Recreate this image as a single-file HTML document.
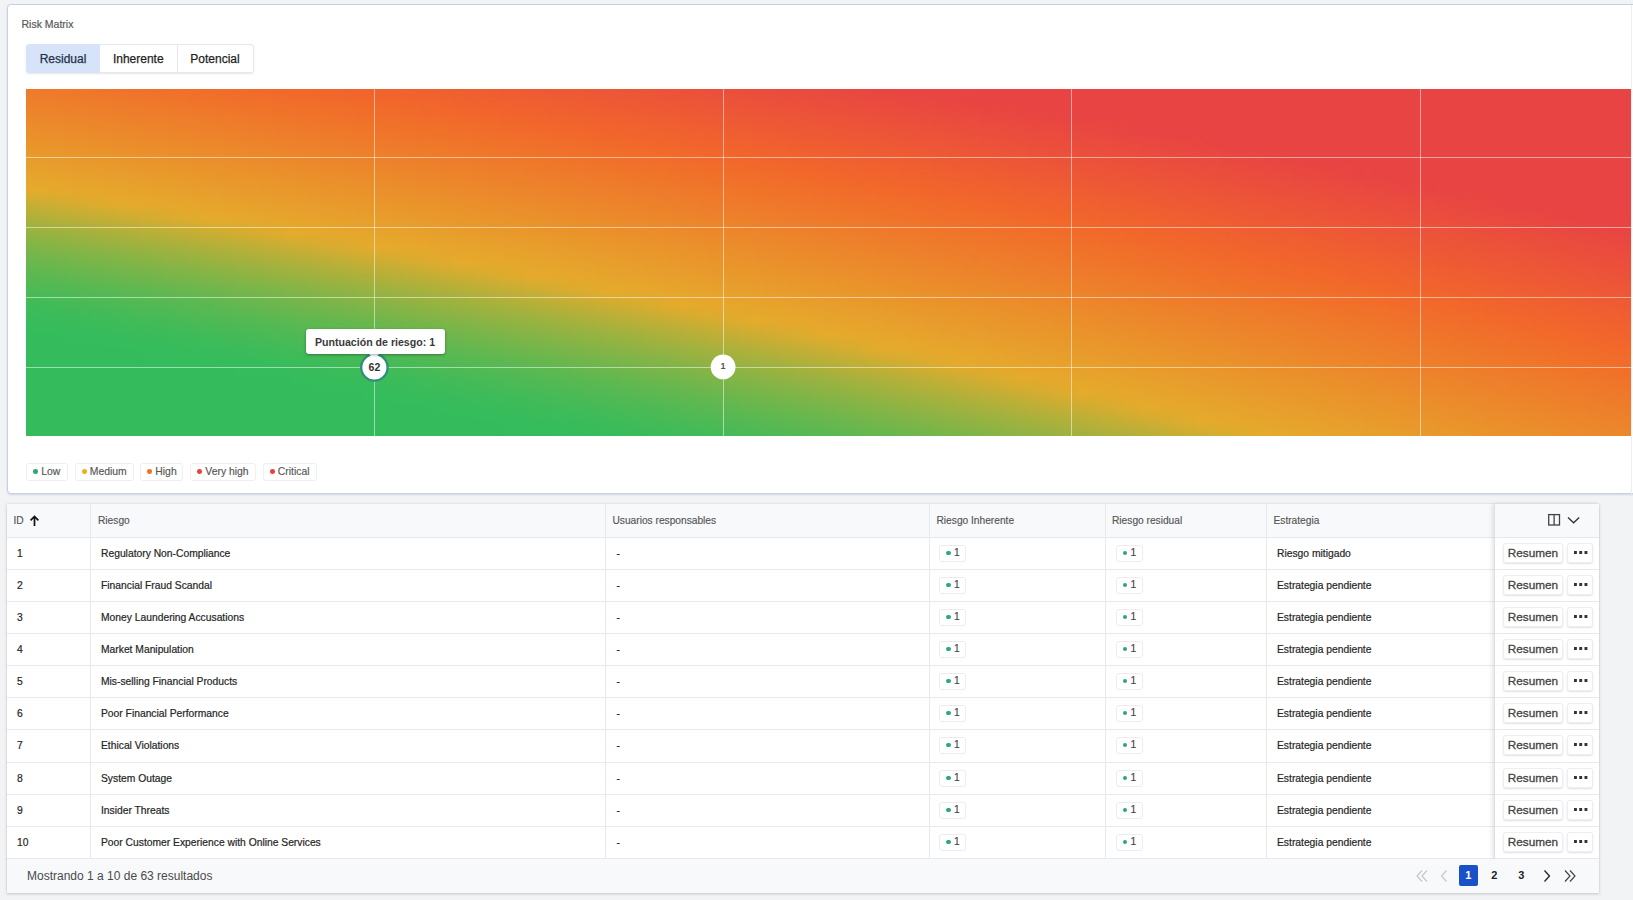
<!DOCTYPE html>
<html lang="es">
<head>
<meta charset="utf-8">
<title>Risk Matrix</title>
<style>
*{box-sizing:border-box;margin:0;padding:0}
html,body{width:1633px;height:900px;overflow:hidden}
body{background:#f2f3f5;font-family:"Liberation Sans",sans-serif;color:#222;position:relative}
.abs{position:absolute}
/* ---- card ---- */
#card{position:absolute;left:7px;top:4px;width:1700px;height:490px;background:#fff;border:1px solid #c3d1e4;border-radius:4px;box-shadow:0 1px 2px rgba(120,140,170,.25)}
#title{position:absolute;left:21.5px;top:17px;-webkit-text-stroke:.2px;font-size:10.5px;line-height:14px;color:#5a5a5a;white-space:nowrap}
#tabs{position:absolute;left:26px;top:44px;height:29px;display:flex;border-radius:3px;box-shadow:0 1px 2px rgba(0,0,0,.10)}
#tabs div{height:29px;line-height:28px;font-size:12px;-webkit-text-stroke:.25px;text-align:center;color:#1f1f1f;background:#fff;border:1px solid #e6e8ec;border-left-width:0;white-space:nowrap}
#tabs div.on{background:#d6e3f8;border-color:#d6e3f8;color:#22324c;border-radius:3px 0 0 3px;border-left-width:1px}
#tabs div:last-child{border-radius:0 3px 3px 0}
/* ---- heatmap ---- */
#hm{position:absolute;left:25.7px;top:88.7px;width:1605.1px;height:347.3px;overflow:hidden;background:#e84443}
#hm i{position:absolute;top:0;height:347.3px;display:block}
.gl{position:absolute;display:block;background:rgba(255,255,255,.5)}
.bub{position:absolute;border-radius:50%;background:#fff;text-align:center;font-weight:bold;color:#333}
#tip{position:absolute;left:305.5px;top:329px;width:139px;height:25px;background:#fff;border-radius:3px;box-shadow:0 1px 3px rgba(0,0,0,.35);font-size:10.6px;font-weight:bold;color:#3a3a3a;line-height:27.5px;text-align:center;white-space:nowrap}
#tiparrow{position:absolute;left:369px;top:354px;width:0;height:0;border-left:5.5px solid transparent;border-right:5.5px solid transparent;border-top:5px solid #fff}
/* ---- legend ---- */
.lg{position:absolute;top:463px;height:18px;border:1px solid #efefef;border-radius:3px;font-size:10.4px;-webkit-text-stroke:.15px;line-height:15px;color:#555;white-space:nowrap;padding-left:14.3px}
.lg:before{content:"";position:absolute;left:6.4px;top:5.4px;width:4.7px;height:4.7px;border-radius:50%;background:var(--c)}
/* ---- table ---- */
#tbl{position:absolute;left:7px;top:504px;width:1592.3px;height:389.2px;background:#fff;box-shadow:0 1px 3px rgba(0,0,0,.18),0 0 1px rgba(0,0,0,.15)}
#th{position:absolute;left:0;top:0;width:100%;height:34px;background:#f8f9fb;border-bottom:1px solid #e7e9ed}
.r{position:absolute;left:0;width:100%;height:32px;border-bottom:1px solid #e7e9ed}
.vd{position:absolute;top:0;width:1px;height:355px;background:#e7e9ed}
.h{position:absolute;top:0;height:33px;line-height:34.4px;font-size:10.2px;-webkit-text-stroke:.15px;color:#555;white-space:nowrap}
.c{position:absolute;top:0;height:32px;line-height:32.2px;font-size:10.3px;-webkit-text-stroke:.2px;color:#262626;white-space:nowrap}
.bd{position:absolute;top:6.7px;width:27px;height:17px;border:1px solid #ededed;border-radius:3px;font-size:10.3px;-webkit-text-stroke:.15px;line-height:14.5px;color:#444;padding-left:14px}
.bd:before{content:"";position:absolute;left:6px;top:5px;width:4.5px;height:4.5px;border-radius:50%;background:#2ba77a}
.btn{position:absolute;top:5px;height:19.5px;-webkit-text-stroke:.3px;border:1px solid #eee;border-radius:3px;background:#fff;box-shadow:0 1px 2px rgba(0,0,0,.12);font-size:11.75px;line-height:18.6px;color:#444;text-align:center;white-space:nowrap}
.dots{position:absolute;left:5.9px;top:7.1px;width:14px;height:3px;display:block}
#act{position:absolute;left:1486.6px;top:0;width:105.7px;height:355px;box-shadow:-2px 0 4px rgba(0,0,0,.10);border-left:1px solid #dcdfe4}
#foot{position:absolute;left:0;top:355px;width:100%;height:34.2px;background:#f8f9fb}
#foot .t{position:absolute;left:20px;top:0;line-height:35px;font-size:12px;color:#4a4a4a;white-space:nowrap}
.pg{position:absolute;top:6px;height:21px;line-height:21px;font-size:11px;font-weight:bold;color:#222;text-align:center}
</style>
</head>
<body>
<div id="card"></div>
<div id="title">Risk Matrix</div>
<div id="tabs"><div class="on" style="width:74px">Residual</div><div style="width:77.5px">Inherente</div><div style="width:76px">Potencial</div></div>

<div id="hm">
<i style="left:0px;width:6.5px;background:linear-gradient(#ef792b 0.0%,#ed812b 4.2%,#ec882b 8.3%,#ea8f2b 12.5%,#e9962b 16.7%,#e89d2c 20.8%,#e6a42c 25.0%,#e4ab2c 29.2%,#c7ae34 33.3%,#acb03b 37.5%,#93b342 41.7%,#7db548 45.8%,#69b74e 50.0%,#58b952 54.2%,#4aba56 58.3%,#3ebb59 62.5%,#37bc5b 66.7%,#34bc5c 70.8%,#34bc5c 100.0%)"></i>
<i style="left:6px;width:6.5px;background:linear-gradient(#ef792b 0.0%,#ed802b 4.2%,#ec872b 8.3%,#eb8e2b 12.5%,#e9952b 16.7%,#e89d2c 20.8%,#e6a42c 25.0%,#e5ab2c 29.2%,#c9ae34 33.3%,#aeb03b 37.5%,#95b342 41.7%,#7eb548 45.8%,#6ab74d 50.0%,#59b852 54.2%,#4bba56 58.3%,#3fbb59 62.5%,#37bc5b 66.7%,#34bc5c 70.8%,#34bc5c 100.0%)"></i>
<i style="left:12px;width:6.5px;background:linear-gradient(#ef792a 0.0%,#ed802b 4.2%,#ec872b 8.3%,#eb8e2b 12.5%,#e9952b 16.7%,#e89c2c 20.8%,#e7a32c 25.0%,#e5aa2c 29.2%,#cbae33 33.3%,#afb03b 37.5%,#96b341 41.7%,#80b547 45.8%,#6cb74d 50.0%,#5ab852 54.2%,#4cba56 58.3%,#40bb59 62.5%,#38bc5b 66.7%,#34bc5c 70.8%,#34bc5c 100.0%)"></i>
<i style="left:18px;width:6.5px;background:linear-gradient(#ef782a 0.0%,#ed7f2b 4.2%,#ec862b 8.3%,#eb8d2b 12.5%,#e9952b 16.7%,#e89c2c 20.8%,#e7a32c 25.0%,#e5aa2c 29.2%,#cdad33 33.3%,#b1b03a 37.5%,#98b241 41.7%,#81b547 45.8%,#6db74d 50.0%,#5bb851 54.2%,#4cba55 58.3%,#41bb59 62.5%,#38bc5b 66.7%,#34bc5c 70.8%,#34bc5c 100.0%)"></i>
<i style="left:24px;width:6.5px;background:linear-gradient(#ef782a 0.0%,#ee7f2b 4.2%,#ec862b 8.3%,#eb8d2b 12.5%,#e9942b 16.7%,#e89b2c 20.8%,#e7a22c 25.0%,#e5a92c 29.2%,#cead32 33.3%,#b3b03a 37.5%,#9ab240 41.7%,#83b447 45.8%,#6eb64c 50.0%,#5db851 54.2%,#4dba55 58.3%,#41bb58 62.5%,#39bc5b 66.7%,#34bc5c 70.8%,#34bc5c 100.0%)"></i>
<i style="left:30px;width:6.5px;background:linear-gradient(#ef772a 0.0%,#ee7e2b 4.2%,#ec862b 8.3%,#eb8d2b 12.5%,#ea942b 16.7%,#e89b2c 20.8%,#e7a22c 25.0%,#e5a92c 29.2%,#d0ad32 33.3%,#b5b039 37.5%,#9bb240 41.7%,#84b446 45.8%,#70b64c 50.0%,#5eb851 54.2%,#4eb955 58.3%,#42bb58 62.5%,#39bb5b 66.7%,#34bc5c 70.8%,#34bc5c 100.0%)"></i>
<i style="left:36px;width:6.5px;background:linear-gradient(#ef772a 0.0%,#ee7e2b 4.2%,#ec852b 8.3%,#eb8c2b 12.5%,#ea932b 16.7%,#e89a2c 20.8%,#e7a12c 25.0%,#e5a82c 29.2%,#d2ad31 33.3%,#b7af39 37.5%,#9db240 41.7%,#86b446 45.8%,#71b64b 50.0%,#5fb850 54.2%,#4fb955 58.3%,#43bb58 62.5%,#3abb5a 66.7%,#35bc5c 70.8%,#34bc5c 75.0%,#34bc5c 100.0%)"></i>
<i style="left:42px;width:6.5px;background:linear-gradient(#ef772a 0.0%,#ee7e2b 4.2%,#ec852b 8.3%,#eb8c2b 12.5%,#ea932b 16.7%,#e89a2b 20.8%,#e7a12c 25.0%,#e6a82c 29.2%,#d4ad31 33.3%,#b8af38 37.5%,#9fb23f 41.7%,#87b445 45.8%,#73b64b 50.0%,#60b850 54.2%,#51b954 58.3%,#44ba58 62.5%,#3abb5a 66.7%,#35bc5c 70.8%,#34bc5c 75.0%,#34bc5c 100.0%)"></i>
<i style="left:48px;width:6.5px;background:linear-gradient(#ef762a 0.0%,#ee7d2b 4.2%,#ed842b 8.3%,#eb8b2b 12.5%,#ea922b 16.7%,#e8992b 20.8%,#e7a02c 25.0%,#e6a72c 29.2%,#d6ac30 33.3%,#baaf38 37.5%,#a0b23f 41.7%,#89b445 45.8%,#74b64b 50.0%,#61b850 54.2%,#52b954 58.3%,#45ba57 62.5%,#3bbb5a 66.7%,#35bc5c 70.8%,#34bc5c 75.0%,#34bc5c 100.0%)"></i>
<i style="left:54px;width:6.5px;background:linear-gradient(#ef762a 0.0%,#ee7d2b 4.2%,#ed842b 8.3%,#eb8b2b 12.5%,#ea922b 16.7%,#e9992b 20.8%,#e7a02c 25.0%,#e6a72c 29.2%,#d8ac30 33.3%,#bcaf37 37.5%,#a2b13e 41.7%,#8bb445 45.8%,#75b64a 50.0%,#63b84f 54.2%,#53b954 58.3%,#46ba57 62.5%,#3cbb5a 66.7%,#35bc5c 70.8%,#34bc5c 75.0%,#34bc5c 100.0%)"></i>
<i style="left:60px;width:6.5px;background:linear-gradient(#ef752a 0.0%,#ee7c2b 4.2%,#ed832b 8.3%,#eb8a2b 12.5%,#ea912b 16.7%,#e9982b 20.8%,#e7a02c 25.0%,#e6a72c 29.2%,#daac2f 33.3%,#beaf37 37.5%,#a4b13e 41.7%,#8cb444 45.8%,#77b64a 50.0%,#64b74f 54.2%,#54b953 58.3%,#46ba57 62.5%,#3cbb5a 66.7%,#36bc5c 70.8%,#34bc5c 75.0%,#34bc5c 100.0%)"></i>
<i style="left:66px;width:6.5px;background:linear-gradient(#ef752a 0.0%,#ee7c2b 4.2%,#ed832b 8.3%,#eb8a2b 12.5%,#ea912b 16.7%,#e9982b 20.8%,#e79f2c 25.0%,#e6a62c 29.2%,#dcac2e 33.3%,#c0af36 37.5%,#a6b13d 41.7%,#8eb344 45.8%,#78b54a 50.0%,#65b74f 54.2%,#55b953 58.3%,#47ba57 62.5%,#3dbb5a 66.7%,#36bc5b 70.8%,#34bc5c 75.0%,#34bc5c 100.0%)"></i>
<i style="left:72px;width:6.5px;background:linear-gradient(#f0742a 0.0%,#ee7c2b 4.2%,#ed832b 8.3%,#eb8a2b 12.5%,#ea912b 16.7%,#e9982b 20.8%,#e79f2c 25.0%,#e6a62c 29.2%,#deac2e 33.3%,#c2ae36 37.5%,#a7b13d 41.7%,#8fb343 45.8%,#7ab549 50.0%,#66b74e 54.2%,#56b953 58.3%,#48ba57 62.5%,#3ebb59 66.7%,#36bc5b 70.8%,#34bc5c 75.0%,#34bc5c 100.0%)"></i>
<i style="left:78px;width:6.5px;background:linear-gradient(#f0742a 0.0%,#ee7b2b 4.2%,#ed822b 8.3%,#ec892b 12.5%,#ea902b 16.7%,#e9972b 20.8%,#e79e2c 25.0%,#e6a52c 29.2%,#e0ab2d 33.3%,#c3ae35 37.5%,#a9b13c 41.7%,#91b343 45.8%,#7bb549 50.0%,#68b74e 54.2%,#57b952 58.3%,#49ba56 62.5%,#3ebb59 66.7%,#37bc5b 70.8%,#34bc5c 75.0%,#34bc5c 100.0%)"></i>
<i style="left:84px;width:6.5px;background:linear-gradient(#f0742a 0.0%,#ee7b2b 4.2%,#ed822b 8.3%,#ec892b 12.5%,#ea902b 16.7%,#e9972b 20.8%,#e89e2c 25.0%,#e6a52c 29.2%,#e2ab2d 33.3%,#c5ae35 37.5%,#abb13c 41.7%,#93b342 45.8%,#7db548 50.0%,#69b74e 54.2%,#58b952 58.3%,#4aba56 62.5%,#3fbb59 66.7%,#37bc5b 70.8%,#34bc5c 75.0%,#34bc5c 100.0%)"></i>
<i style="left:90px;width:6.5px;background:linear-gradient(#f0732a 0.0%,#ee7a2b 4.2%,#ed812b 8.3%,#ec882b 12.5%,#ea8f2b 16.7%,#e9962b 20.8%,#e89d2c 25.0%,#e6a42c 29.2%,#e4ab2c 33.3%,#c7ae34 37.5%,#adb03b 41.7%,#94b342 45.8%,#7eb548 50.0%,#6ab74d 54.2%,#59b852 58.3%,#4bba56 62.5%,#40bb59 66.7%,#38bc5b 70.8%,#34bc5c 75.0%,#34bc5c 100.0%)"></i>
<i style="left:96px;width:6.5px;background:linear-gradient(#f0732a 0.0%,#ef7a2b 4.2%,#ed812b 8.3%,#ec882b 12.5%,#ea8f2b 16.7%,#e9962b 20.8%,#e89d2c 25.0%,#e6a42c 29.2%,#e5ab2c 33.3%,#c9ae34 37.5%,#aeb03b 41.7%,#96b341 45.8%,#80b547 50.0%,#6cb74d 54.2%,#5bb852 58.3%,#4cba55 62.5%,#40bb59 66.7%,#38bc5b 70.8%,#34bc5c 75.0%,#34bc5c 100.0%)"></i>
<i style="left:102px;width:6.5px;background:linear-gradient(#f0722a 0.0%,#ef792b 4.2%,#ed802b 8.3%,#ec872b 12.5%,#eb8e2b 16.7%,#e9952b 20.8%,#e89c2c 25.0%,#e6a32c 29.2%,#e5aa2c 33.3%,#cbad33 37.5%,#b0b03a 41.7%,#98b241 45.8%,#81b547 50.0%,#6db74c 54.2%,#5cb851 58.3%,#4dba55 62.5%,#41bb58 66.7%,#39bc5b 70.8%,#34bc5c 75.0%,#34bc5c 100.0%)"></i>
<i style="left:108px;width:6.5px;background:linear-gradient(#f0722a 0.0%,#ef792b 4.2%,#ed802b 8.3%,#ec872b 12.5%,#eb8e2b 16.7%,#e9952b 20.8%,#e89c2c 25.0%,#e7a32c 29.2%,#e5aa2c 33.3%,#cdad33 37.5%,#b2b03a 41.7%,#99b241 45.8%,#83b447 50.0%,#6fb64c 54.2%,#5db851 58.3%,#4eba55 62.5%,#42bb58 66.7%,#39bc5b 70.8%,#34bc5c 75.0%,#34bc5c 100.0%)"></i>
<i style="left:114px;width:6.5px;background:linear-gradient(#f0722a 0.0%,#ef792a 4.2%,#ed802b 8.3%,#ec862b 12.5%,#eb8d2b 16.7%,#e9942b 20.8%,#e89b2c 25.0%,#e7a22c 29.2%,#e5a92c 33.3%,#cfad32 37.5%,#b4b039 41.7%,#9bb240 45.8%,#84b446 50.0%,#70b64c 54.2%,#5eb851 58.3%,#4fb955 62.5%,#43bb58 66.7%,#3abb5a 70.8%,#35bc5c 75.0%,#34bc5c 79.2%,#34bc5c 100.0%)"></i>
<i style="left:120px;width:6.5px;background:linear-gradient(#f0712a 0.0%,#ef782a 4.2%,#ee7f2b 8.3%,#ec862b 12.5%,#eb8d2b 16.7%,#e9942b 20.8%,#e89b2c 25.0%,#e7a22c 29.2%,#e5a92c 33.3%,#d1ad31 37.5%,#b6b039 41.7%,#9db240 45.8%,#86b446 50.0%,#71b64b 54.2%,#5fb850 58.3%,#50b954 62.5%,#44bb58 66.7%,#3abb5a 70.8%,#35bc5c 75.0%,#34bc5c 79.2%,#34bc5c 100.0%)"></i>
<i style="left:126px;width:6.5px;background:linear-gradient(#f0712a 0.0%,#ef782a 4.2%,#ee7f2b 8.3%,#ec862b 12.5%,#eb8d2b 16.7%,#ea942b 20.8%,#e89a2c 25.0%,#e7a12c 29.2%,#e6a82c 33.3%,#d3ad31 37.5%,#b7af38 41.7%,#9eb23f 45.8%,#87b445 50.0%,#73b64b 54.2%,#61b850 58.3%,#51b954 62.5%,#44ba58 66.7%,#3bbb5a 70.8%,#35bc5c 75.0%,#34bc5c 79.2%,#34bc5c 100.0%)"></i>
<i style="left:132px;width:6.5px;background:linear-gradient(#f0702a 0.0%,#ef772a 4.2%,#ee7e2b 8.3%,#ec852b 12.5%,#eb8c2b 16.7%,#ea932b 20.8%,#e89a2b 25.0%,#e7a12c 29.2%,#e6a82c 33.3%,#d5ad30 37.5%,#b9af38 41.7%,#a0b23f 45.8%,#89b445 50.0%,#74b64b 54.2%,#62b850 58.3%,#52b954 62.5%,#45ba57 66.7%,#3cbb5a 70.8%,#35bc5c 75.0%,#34bc5c 79.2%,#34bc5c 100.0%)"></i>
<i style="left:138px;width:6.5px;background:linear-gradient(#f0702a 0.0%,#ef772a 4.2%,#ee7e2b 8.3%,#ec852b 12.5%,#eb8c2b 16.7%,#ea932b 20.8%,#e89a2b 25.0%,#e7a12c 29.2%,#e6a72c 33.3%,#d7ac30 37.5%,#bbaf37 41.7%,#a2b13e 45.8%,#8bb445 50.0%,#76b64a 54.2%,#63b74f 58.3%,#53b954 62.5%,#46ba57 66.7%,#3cbb5a 70.8%,#36bc5c 75.0%,#34bc5c 79.2%,#34bc5c 100.0%)"></i>
<i style="left:144px;width:6.5px;background:linear-gradient(#f1702a 0.0%,#ef762a 4.2%,#ee7d2b 8.3%,#ed842b 12.5%,#eb8b2b 16.7%,#ea922b 20.8%,#e8992b 25.0%,#e7a02c 29.2%,#e6a72c 33.3%,#d9ac2f 37.5%,#bdaf37 41.7%,#a3b13e 45.8%,#8cb444 50.0%,#77b64a 54.2%,#64b74f 58.3%,#54b953 62.5%,#47ba57 66.7%,#3dbb5a 70.8%,#36bc5b 75.0%,#34bc5c 79.2%,#34bc5c 100.0%)"></i>
<i style="left:150px;width:6.5px;background:linear-gradient(#f16f2a 0.0%,#ef762a 4.2%,#ee7d2b 8.3%,#ed842b 12.5%,#eb8b2b 16.7%,#ea922b 20.8%,#e9992b 25.0%,#e7a02c 29.2%,#e6a72c 33.3%,#dbac2f 37.5%,#bfaf36 41.7%,#a5b13d 45.8%,#8eb344 50.0%,#79b549 54.2%,#66b74f 58.3%,#55b953 62.5%,#48ba57 66.7%,#3dbb59 70.8%,#36bc5b 75.0%,#34bc5c 79.2%,#34bc5c 100.0%)"></i>
<i style="left:156px;width:6.5px;background:linear-gradient(#f16f2a 0.0%,#ef762a 4.2%,#ee7d2b 8.3%,#ed832b 12.5%,#eb8a2b 16.7%,#ea912b 20.8%,#e9982b 25.0%,#e79f2c 29.2%,#e6a62c 33.3%,#ddac2e 37.5%,#c1ae36 41.7%,#a7b13d 45.8%,#8fb343 50.0%,#7ab549 54.2%,#67b74e 58.3%,#57b953 62.5%,#49ba56 66.7%,#3ebb59 70.8%,#37bc5b 75.0%,#34bc5c 79.2%,#34bc5c 100.0%)"></i>
<i style="left:162px;width:6.5px;background:linear-gradient(#f16e2a 0.0%,#ef752a 4.2%,#ee7c2b 8.3%,#ed832b 12.5%,#eb8a2b 16.7%,#ea912b 20.8%,#e9982b 25.0%,#e79f2c 29.2%,#e6a62c 33.3%,#dfac2e 37.5%,#c3ae35 41.7%,#a9b13c 45.8%,#91b343 50.0%,#7bb549 54.2%,#68b74e 58.3%,#58b952 62.5%,#4aba56 66.7%,#3fbb59 70.8%,#37bc5b 75.0%,#34bc5c 79.2%,#34bc5c 100.0%)"></i>
<i style="left:168px;width:6.5px;background:linear-gradient(#f16e2a 0.0%,#f0752a 4.2%,#ee7c2b 8.3%,#ed832b 12.5%,#ec892b 16.7%,#ea902b 20.8%,#e9972b 25.0%,#e79e2c 29.2%,#e6a52c 33.3%,#e1ab2d 37.5%,#c5ae35 41.7%,#abb13c 45.8%,#93b342 50.0%,#7db548 54.2%,#6ab74d 58.3%,#59b852 62.5%,#4bba56 66.7%,#40bb59 70.8%,#38bc5b 75.0%,#34bc5c 79.2%,#34bc5c 100.0%)"></i>
<i style="left:174px;width:6.5px;background:linear-gradient(#f16d2a 0.0%,#f0742a 4.2%,#ee7b2b 8.3%,#ed822b 12.5%,#ec892b 16.7%,#ea902b 20.8%,#e9972b 25.0%,#e89e2c 29.2%,#e6a52c 33.3%,#e3ab2d 37.5%,#c7ae34 41.7%,#acb03b 45.8%,#94b342 50.0%,#7fb548 54.2%,#6bb74d 58.3%,#5ab852 62.5%,#4cba56 66.7%,#40bb59 70.8%,#38bc5b 75.0%,#34bc5c 79.2%,#34bc5c 100.0%)"></i>
<i style="left:180px;width:6.5px;background:linear-gradient(#f16d2a 0.0%,#f0742a 4.2%,#ee7b2b 8.3%,#ed822b 12.5%,#ec892b 16.7%,#ea8f2b 20.8%,#e9962b 25.0%,#e89d2c 29.2%,#e6a42c 33.3%,#e5ab2c 37.5%,#c8ae34 41.7%,#aeb03b 45.8%,#96b341 50.0%,#80b547 54.2%,#6cb74d 58.3%,#5bb851 62.5%,#4dba55 66.7%,#41bb58 70.8%,#39bc5b 75.0%,#34bc5c 79.2%,#34bc5c 100.0%)"></i>
<i style="left:186px;width:6.5px;background:linear-gradient(#f16d2a 0.0%,#f0732a 4.2%,#ee7a2b 8.3%,#ed812b 12.5%,#ec882b 16.7%,#ea8f2b 20.8%,#e9962b 25.0%,#e89d2c 29.2%,#e6a42c 33.3%,#e5ab2c 37.5%,#caae33 41.7%,#b0b03a 45.8%,#98b241 50.0%,#82b547 54.2%,#6eb64c 58.3%,#5db851 62.5%,#4eba55 66.7%,#42bb58 70.8%,#39bb5b 75.0%,#34bc5c 79.2%,#34bc5c 100.0%)"></i>
<i style="left:192px;width:6.5px;background:linear-gradient(#f16c2a 0.0%,#f0732a 4.2%,#ef7a2b 8.3%,#ed812b 12.5%,#ec882b 16.7%,#eb8f2b 20.8%,#e9952b 25.0%,#e89c2c 29.2%,#e7a32c 33.3%,#e5aa2c 37.5%,#ccad33 41.7%,#b2b03a 45.8%,#99b241 50.0%,#83b447 54.2%,#6fb64c 58.3%,#5eb851 62.5%,#4fb955 66.7%,#43bb58 70.8%,#3abb5a 75.0%,#35bc5c 79.2%,#34bc5c 83.3%,#34bc5c 100.0%)"></i>
<i style="left:198px;width:6.5px;background:linear-gradient(#f16c2a 0.0%,#f0732a 4.2%,#ef7a2b 8.3%,#ed802b 12.5%,#ec872b 16.7%,#eb8e2b 20.8%,#e9952b 25.0%,#e89c2c 29.2%,#e7a32c 33.3%,#e5aa2c 37.5%,#cead32 41.7%,#b4b039 45.8%,#9bb240 50.0%,#85b446 54.2%,#71b64c 58.3%,#5fb850 62.5%,#50b954 66.7%,#44ba58 70.8%,#3abb5a 75.0%,#35bc5c 79.2%,#34bc5c 83.3%,#34bc5c 100.0%)"></i>
<i style="left:204px;width:6.5px;background:linear-gradient(#f16b2a 0.0%,#f0722a 4.2%,#ef792b 8.3%,#ed802b 12.5%,#ec872b 16.7%,#eb8e2b 20.8%,#e9952b 25.0%,#e89b2c 29.2%,#e7a22c 33.3%,#e5a92c 37.5%,#d0ad32 41.7%,#b6b039 45.8%,#9db240 50.0%,#86b446 54.2%,#72b64b 58.3%,#60b850 62.5%,#51b954 66.7%,#45ba58 70.8%,#3bbb5a 75.0%,#35bc5c 79.2%,#34bc5c 83.3%,#34bc5c 100.0%)"></i>
<i style="left:210px;width:6.5px;background:linear-gradient(#f16b2a 0.0%,#f0722a 4.2%,#ef792a 8.3%,#ed802b 12.5%,#ec862b 16.7%,#eb8d2b 20.8%,#e9942b 25.0%,#e89b2c 29.2%,#e7a22c 33.3%,#e5a92c 37.5%,#d2ad31 41.7%,#b7af38 45.8%,#9fb23f 50.0%,#88b445 54.2%,#74b64b 58.3%,#62b850 62.5%,#52b954 66.7%,#45ba57 70.8%,#3cbb5a 75.0%,#36bc5c 79.2%,#34bc5c 83.3%,#34bc5c 100.0%)"></i>
<i style="left:216px;width:6.5px;background:linear-gradient(#f26b2a 0.0%,#f0712a 4.2%,#ef782a 8.3%,#ee7f2b 12.5%,#ec862b 16.7%,#eb8d2b 20.8%,#ea942b 25.0%,#e89a2c 29.2%,#e7a12c 33.3%,#e6a82c 37.5%,#d4ad31 41.7%,#b9af38 45.8%,#a0b23f 50.0%,#8ab445 54.2%,#75b64a 58.3%,#63b84f 62.5%,#53b954 66.7%,#46ba57 70.8%,#3cbb5a 75.0%,#36bc5b 79.2%,#34bc5c 83.3%,#34bc5c 100.0%)"></i>
<i style="left:222px;width:6.5px;background:linear-gradient(#f26a2a 0.0%,#f0712a 4.2%,#ef782a 8.3%,#ee7f2b 12.5%,#ec852b 16.7%,#eb8c2b 20.8%,#ea932b 25.0%,#e89a2b 29.2%,#e7a12c 33.3%,#e6a82c 37.5%,#d6ac30 41.7%,#bbaf37 45.8%,#a2b13e 50.0%,#8bb444 54.2%,#76b64a 58.3%,#64b74f 62.5%,#54b953 66.7%,#47ba57 70.8%,#3dbb5a 75.0%,#36bc5b 79.2%,#34bc5c 83.3%,#34bc5c 100.0%)"></i>
<i style="left:228px;width:6.5px;background:linear-gradient(#f26a2a 0.0%,#f0712a 4.2%,#ef772a 8.3%,#ee7e2b 12.5%,#ec852b 16.7%,#eb8c2b 20.8%,#ea932b 25.0%,#e89a2b 29.2%,#e7a02c 33.3%,#e6a72c 37.5%,#d8ac2f 41.7%,#bdaf37 45.8%,#a4b13e 50.0%,#8db344 54.2%,#78b54a 58.3%,#65b74f 62.5%,#55b953 66.7%,#48ba57 70.8%,#3ebb59 75.0%,#37bc5b 79.2%,#34bc5c 83.3%,#34bc5c 100.0%)"></i>
<i style="left:234px;width:6.5px;background:linear-gradient(#f2692a 0.0%,#f0702a 4.2%,#ef772a 8.3%,#ee7e2b 12.5%,#ec852b 16.7%,#eb8b2b 20.8%,#ea922b 25.0%,#e8992b 29.2%,#e7a02c 33.3%,#e6a72c 37.5%,#daac2f 41.7%,#bfaf36 45.8%,#a6b13d 50.0%,#8eb343 54.2%,#79b549 58.3%,#67b74e 62.5%,#57b953 66.7%,#49ba56 70.8%,#3ebb59 75.0%,#37bc5b 79.2%,#34bc5c 83.3%,#34bc5c 100.0%)"></i>
<i style="left:240px;width:6.5px;background:linear-gradient(#f2692a 0.0%,#f1702a 4.2%,#ef772a 8.3%,#ee7d2b 12.5%,#ed842b 16.7%,#eb8b2b 20.8%,#ea922b 25.0%,#e9992b 29.2%,#e79f2c 33.3%,#e6a62c 37.5%,#dcac2e 41.7%,#c1ae36 45.8%,#a7b13d 50.0%,#90b343 54.2%,#7bb549 58.3%,#68b74e 62.5%,#58b952 66.7%,#4aba56 70.8%,#3fbb59 75.0%,#38bc5b 79.2%,#34bc5c 83.3%,#34bc5c 100.0%)"></i>
<i style="left:246px;width:6.5px;background:linear-gradient(#f2682a 0.0%,#f16f2a 4.2%,#ef762a 8.3%,#ee7d2b 12.5%,#ed842b 16.7%,#eb8b2b 20.8%,#ea912b 25.0%,#e9982b 29.2%,#e79f2c 33.3%,#e6a62c 37.5%,#deac2e 41.7%,#c3ae35 45.8%,#a9b13c 50.0%,#92b343 54.2%,#7cb548 58.3%,#6ab74d 62.5%,#59b852 66.7%,#4bba56 70.8%,#40bb59 75.0%,#38bc5b 79.2%,#34bc5c 83.3%,#34bc5c 100.0%)"></i>
<i style="left:252px;width:6.5px;background:linear-gradient(#f2682a 0.0%,#f16f2a 4.2%,#ef762a 8.3%,#ee7c2b 12.5%,#ed832b 16.7%,#eb8a2b 20.8%,#ea912b 25.0%,#e9982b 29.2%,#e79e2c 33.3%,#e6a52c 37.5%,#e0ab2d 41.7%,#c5ae35 45.8%,#abb13c 50.0%,#93b342 54.2%,#7eb548 58.3%,#6bb74d 62.5%,#5ab852 66.7%,#4cba55 70.8%,#41bb59 75.0%,#39bc5b 79.2%,#34bc5c 83.3%,#34bc5c 100.0%)"></i>
<i style="left:258px;width:6.5px;background:linear-gradient(#f2682a 0.0%,#f16e2a 4.2%,#ef752a 8.3%,#ee7c2b 12.5%,#ed832b 16.7%,#eb8a2b 20.8%,#ea902b 25.0%,#e9972b 29.2%,#e89e2c 33.3%,#e6a52c 37.5%,#e3ab2d 41.7%,#c7ae34 45.8%,#adb03b 50.0%,#95b342 54.2%,#80b548 58.3%,#6cb74d 62.5%,#5bb851 66.7%,#4dba55 70.8%,#42bb58 75.0%,#39bc5b 79.2%,#34bc5c 83.3%,#34bc5c 100.0%)"></i>
<i style="left:264px;width:6.5px;background:linear-gradient(#f2672a 0.0%,#f16e2a 4.2%,#f0752a 8.3%,#ee7c2b 12.5%,#ed822b 16.7%,#ec892b 20.8%,#ea902b 25.0%,#e9972b 29.2%,#e89e2c 33.3%,#e6a42c 37.5%,#e5ab2c 41.7%,#c9ae34 45.8%,#afb03b 50.0%,#97b341 54.2%,#81b547 58.3%,#6eb64c 62.5%,#5db851 66.7%,#4eb955 70.8%,#42bb58 75.0%,#3abb5a 79.2%,#35bc5c 83.3%,#34bc5c 87.5%,#34bc5c 100.0%)"></i>
<i style="left:270px;width:6.5px;background:linear-gradient(#f2672b 0.0%,#f16e2a 4.2%,#f0742a 8.3%,#ee7b2b 12.5%,#ed822b 16.7%,#ec892b 20.8%,#ea8f2b 25.0%,#e9962b 29.2%,#e89d2c 33.3%,#e6a42c 37.5%,#e5ab2c 41.7%,#cbae33 45.8%,#b1b03a 50.0%,#99b241 54.2%,#83b447 58.3%,#6fb64c 62.5%,#5eb851 66.7%,#4fb955 70.8%,#43bb58 75.0%,#3abb5a 79.2%,#35bc5c 83.3%,#34bc5c 87.5%,#34bc5c 100.0%)"></i>
<i style="left:276px;width:6.5px;background:linear-gradient(#f2672b 0.0%,#f16d2a 4.2%,#f0742a 8.3%,#ee7b2b 12.5%,#ed812b 16.7%,#ec882b 20.8%,#ea8f2b 25.0%,#e9962b 29.2%,#e89d2c 33.3%,#e6a32c 37.5%,#e5aa2c 41.7%,#cdad33 45.8%,#b2b03a 50.0%,#9ab240 54.2%,#84b446 58.3%,#71b64c 62.5%,#5fb850 66.7%,#50b954 70.8%,#44ba58 75.0%,#3bbb5a 79.2%,#35bc5c 83.3%,#34bc5c 87.5%,#34bc5c 100.0%)"></i>
<i style="left:282px;width:6.5px;background:linear-gradient(#f2662b 0.0%,#f16d2a 4.2%,#f0742a 8.3%,#ee7a2b 12.5%,#ed812b 16.7%,#ec882b 20.8%,#eb8f2b 25.0%,#e9952b 29.2%,#e89c2c 33.3%,#e7a32c 37.5%,#e5aa2c 41.7%,#cfad32 45.8%,#b4b039 50.0%,#9cb240 54.2%,#86b446 58.3%,#72b64b 62.5%,#60b850 66.7%,#51b954 70.8%,#45ba57 75.0%,#3bbb5a 79.2%,#35bc5c 83.3%,#34bc5c 87.5%,#34bc5c 100.0%)"></i>
<i style="left:288px;width:6.5px;background:linear-gradient(#f1662b 0.0%,#f16c2a 4.2%,#f0732a 8.3%,#ef7a2b 12.5%,#ed812b 16.7%,#ec872b 20.8%,#eb8e2b 25.0%,#e9952b 29.2%,#e89c2c 33.3%,#e7a22c 37.5%,#e5a92c 41.7%,#d1ad32 45.8%,#b6af39 50.0%,#9eb23f 54.2%,#87b445 58.3%,#73b64b 62.5%,#62b850 66.7%,#52b954 70.8%,#46ba57 75.0%,#3cbb5a 79.2%,#36bc5c 83.3%,#34bc5c 87.5%,#34bc5c 100.0%)"></i>
<i style="left:294px;width:6.5px;background:linear-gradient(#f1662c 0.0%,#f16c2a 4.2%,#f0732a 8.3%,#ef792b 12.5%,#ed802b 16.7%,#ec872b 20.8%,#eb8e2b 25.0%,#e9942b 29.2%,#e89b2c 33.3%,#e7a22c 37.5%,#e5a92c 41.7%,#d3ad31 45.8%,#b8af38 50.0%,#a0b23f 54.2%,#89b445 58.3%,#75b64a 62.5%,#63b74f 66.7%,#54b953 70.8%,#47ba57 75.0%,#3dbb5a 79.2%,#36bc5b 83.3%,#34bc5c 87.5%,#34bc5c 100.0%)"></i>
<i style="left:300px;width:6.5px;background:linear-gradient(#f1652c 0.0%,#f16b2a 4.2%,#f0722a 8.3%,#ef792b 12.5%,#ed802b 16.7%,#ec862b 20.8%,#eb8d2b 25.0%,#e9942b 29.2%,#e89b2c 33.3%,#e7a12c 37.5%,#e6a82c 41.7%,#d5ad30 45.8%,#baaf38 50.0%,#a1b23e 54.2%,#8bb444 58.3%,#76b64a 62.5%,#64b74f 66.7%,#55b953 70.8%,#48ba57 75.0%,#3dbb59 79.2%,#37bc5b 83.3%,#34bc5c 87.5%,#34bc5c 100.0%)"></i>
<i style="left:306px;width:6.5px;background:linear-gradient(#f1652c 0.0%,#f16b2a 4.2%,#f0722a 8.3%,#ef792a 12.5%,#ed7f2b 16.7%,#ec862b 20.8%,#eb8d2b 25.0%,#ea932b 29.2%,#e89a2b 33.3%,#e7a12c 37.5%,#e6a82c 41.7%,#d7ac30 45.8%,#bcaf37 50.0%,#a3b13e 54.2%,#8cb444 58.3%,#78b54a 62.5%,#66b74f 66.7%,#56b953 70.8%,#49ba56 75.0%,#3ebb59 79.2%,#37bc5b 83.3%,#34bc5c 87.5%,#34bc5c 100.0%)"></i>
<i style="left:312px;width:6.5px;background:linear-gradient(#f1652c 0.0%,#f16b2a 4.2%,#f0712a 8.3%,#ef782a 12.5%,#ee7f2b 16.7%,#ec862b 20.8%,#eb8c2b 25.0%,#ea932b 29.2%,#e89a2b 33.3%,#e7a02c 37.5%,#e6a72c 41.7%,#d9ac2f 45.8%,#beaf37 50.0%,#a5b13d 54.2%,#8eb344 58.3%,#79b549 62.5%,#67b74e 66.7%,#57b953 70.8%,#4aba56 75.0%,#3fbb59 79.2%,#37bc5b 83.3%,#34bc5c 87.5%,#34bc5c 100.0%)"></i>
<i style="left:318px;width:6.5px;background:linear-gradient(#f1642d 0.0%,#f26a2a 4.2%,#f0712a 8.3%,#ef782a 12.5%,#ee7e2b 16.7%,#ec852b 20.8%,#eb8c2b 25.0%,#ea932b 29.2%,#e8992b 33.3%,#e7a02c 37.5%,#e6a72c 41.7%,#dbac2f 45.8%,#c0af36 50.0%,#a7b13d 54.2%,#90b343 58.3%,#7bb549 62.5%,#68b74e 66.7%,#58b952 70.8%,#4bba56 75.0%,#40bb59 79.2%,#38bc5b 83.3%,#34bc5c 87.5%,#34bc5c 100.0%)"></i>
<i style="left:324px;width:6.5px;background:linear-gradient(#f1642d 0.0%,#f26a2a 4.2%,#f0712a 8.3%,#ef772a 12.5%,#ee7e2b 16.7%,#ec852b 20.8%,#eb8b2b 25.0%,#ea922b 29.2%,#e9992b 33.3%,#e79f2c 37.5%,#e6a62c 41.7%,#ddac2e 45.8%,#c2ae36 50.0%,#a9b13c 54.2%,#91b343 58.3%,#7cb548 62.5%,#6ab74d 66.7%,#59b852 70.8%,#4cba56 75.0%,#40bb59 79.2%,#38bc5b 83.3%,#34bc5c 87.5%,#34bc5c 100.0%)"></i>
<i style="left:330px;width:6.5px;background:linear-gradient(#f1642d 0.0%,#f2692a 4.2%,#f0702a 8.3%,#ef772a 12.5%,#ee7d2b 16.7%,#ed842b 20.8%,#eb8b2b 25.0%,#ea922b 29.2%,#e9982b 33.3%,#e79f2c 37.5%,#e6a62c 41.7%,#dfac2e 45.8%,#c4ae35 50.0%,#aab13c 54.2%,#93b342 58.3%,#7eb548 62.5%,#6bb74d 66.7%,#5bb852 70.8%,#4dba55 75.0%,#41bb58 79.2%,#39bc5b 83.3%,#34bc5c 87.5%,#34bc5c 100.0%)"></i>
<i style="left:336px;width:6.5px;background:linear-gradient(#f1632d 0.0%,#f2692a 4.2%,#f1702a 8.3%,#ef762a 12.5%,#ee7d2b 16.7%,#ed842b 20.8%,#eb8a2b 25.0%,#ea912b 29.2%,#e9982b 33.3%,#e79f2c 37.5%,#e6a52c 41.7%,#e1ab2d 45.8%,#c6ae34 50.0%,#acb03b 54.2%,#95b342 58.3%,#80b547 62.5%,#6db74d 66.7%,#5cb851 70.8%,#4eba55 75.0%,#42bb58 79.2%,#3abb5a 83.3%,#35bc5c 87.5%,#34bc5c 91.7%,#34bc5c 100.0%)"></i>
<i style="left:342px;width:6.5px;background:linear-gradient(#f1632e 0.0%,#f2692a 4.2%,#f16f2a 8.3%,#ef762a 12.5%,#ee7d2b 16.7%,#ed832b 20.8%,#eb8a2b 25.0%,#ea912b 29.2%,#e9972b 33.3%,#e89e2c 37.5%,#e6a52c 41.7%,#e3ab2d 45.8%,#c8ae34 50.0%,#aeb03b 54.2%,#97b341 58.3%,#81b547 62.5%,#6eb64c 66.7%,#5db851 70.8%,#4fb955 75.0%,#43bb58 79.2%,#3abb5a 83.3%,#35bc5c 87.5%,#34bc5c 91.7%,#34bc5c 100.0%)"></i>
<i style="left:348px;width:6.5px;background:linear-gradient(#f0622e 0.0%,#f2682a 4.2%,#f16f2a 8.3%,#ef752a 12.5%,#ee7c2b 16.7%,#ed832b 20.8%,#eb8a2b 25.0%,#ea902b 29.2%,#e9972b 33.3%,#e89e2c 37.5%,#e6a42c 41.7%,#e5ab2c 45.8%,#caae33 50.0%,#b0b03a 54.2%,#98b241 58.3%,#83b447 62.5%,#6fb64c 66.7%,#5eb850 70.8%,#50b954 75.0%,#44ba58 79.2%,#3bbb5a 83.3%,#35bc5c 87.5%,#34bc5c 91.7%,#34bc5c 100.0%)"></i>
<i style="left:354px;width:6.5px;background:linear-gradient(#f0622e 0.0%,#f2682a 4.2%,#f16e2a 8.3%,#ef752a 12.5%,#ee7c2b 16.7%,#ed822b 20.8%,#ec892b 25.0%,#ea902b 29.2%,#e9962b 33.3%,#e89d2c 37.5%,#e6a42c 41.7%,#e5aa2c 45.8%,#ccad33 50.0%,#b2b03a 54.2%,#9ab240 58.3%,#84b446 62.5%,#71b64b 66.7%,#60b850 70.8%,#51b954 75.0%,#45ba57 79.2%,#3bbb5a 83.3%,#35bc5c 87.5%,#34bc5c 91.7%,#34bc5c 100.0%)"></i>
<i style="left:360px;width:6.5px;background:linear-gradient(#f0622e 0.0%,#f2672a 4.2%,#f16e2a 8.3%,#f0752a 12.5%,#ee7b2b 16.7%,#ed822b 20.8%,#ec892b 25.0%,#ea8f2b 29.2%,#e9962b 33.3%,#e89d2c 37.5%,#e6a32c 41.7%,#e5aa2c 45.8%,#cead32 50.0%,#b4b039 54.2%,#9cb240 58.3%,#86b446 62.5%,#72b64b 66.7%,#61b850 70.8%,#52b954 75.0%,#46ba57 79.2%,#3cbb5a 83.3%,#36bc5c 87.5%,#34bc5c 91.7%,#34bc5c 100.0%)"></i>
<i style="left:366px;width:6.5px;background:linear-gradient(#f0612f 0.0%,#f2672b 4.2%,#f16e2a 8.3%,#f0742a 12.5%,#ee7b2b 16.7%,#ed812b 20.8%,#ec882b 25.0%,#ea8f2b 29.2%,#e9952b 33.3%,#e89c2c 37.5%,#e7a32c 41.7%,#e5a92c 45.8%,#d0ad32 50.0%,#b6b039 54.2%,#9eb23f 58.3%,#88b445 62.5%,#74b64b 66.7%,#62b84f 70.8%,#53b954 75.0%,#47ba57 79.2%,#3dbb5a 83.3%,#36bc5b 87.5%,#34bc5c 91.7%,#34bc5c 100.0%)"></i>
<i style="left:372px;width:6.5px;background:linear-gradient(#f0612f 0.0%,#f2672b 4.2%,#f16d2a 8.3%,#f0742a 12.5%,#ee7a2b 16.7%,#ed812b 20.8%,#ec882b 25.0%,#eb8e2b 29.2%,#e9952b 33.3%,#e89c2c 37.5%,#e7a22c 41.7%,#e5a92c 45.8%,#d2ad31 50.0%,#b8af38 54.2%,#9fb23f 58.3%,#89b445 62.5%,#75b64a 66.7%,#64b74f 70.8%,#54b953 75.0%,#47ba57 79.2%,#3dbb59 83.3%,#37bc5b 87.5%,#34bc5c 91.7%,#34bc5c 100.0%)"></i>
<i style="left:378px;width:6.5px;background:linear-gradient(#f0612f 0.0%,#f2662b 4.2%,#f16d2a 8.3%,#f0732a 12.5%,#ef7a2b 16.7%,#ed812b 20.8%,#ec872b 25.0%,#eb8e2b 29.2%,#e9952b 33.3%,#e89b2c 37.5%,#e7a22c 41.7%,#e5a82c 45.8%,#d4ad31 50.0%,#baaf38 54.2%,#a1b23e 58.3%,#8bb444 62.5%,#77b64a 66.7%,#65b74f 70.8%,#55b953 75.0%,#48ba56 79.2%,#3ebb59 83.3%,#37bc5b 87.5%,#34bc5c 91.7%,#34bc5c 100.0%)"></i>
<i style="left:384px;width:6.5px;background:linear-gradient(#f0602f 0.0%,#f1662b 4.2%,#f16c2a 8.3%,#f0732a 12.5%,#ef792b 16.7%,#ed802b 20.8%,#ec872b 25.0%,#eb8d2b 29.2%,#e9942b 33.3%,#e89b2c 37.5%,#e7a12c 41.7%,#e6a82c 45.8%,#d6ac30 50.0%,#bbaf37 54.2%,#a3b13e 58.3%,#8db344 62.5%,#78b549 66.7%,#66b74e 70.8%,#57b953 75.0%,#49ba56 79.2%,#3fbb59 83.3%,#38bc5b 87.5%,#34bc5c 91.7%,#34bc5c 100.0%)"></i>
<i style="left:390px;width:6.5px;background:linear-gradient(#f06030 0.0%,#f1662c 4.2%,#f16c2a 8.3%,#f0722a 12.5%,#ef792b 16.7%,#ed802b 20.8%,#ec862b 25.0%,#eb8d2b 29.2%,#ea942b 33.3%,#e89a2b 37.5%,#e7a12c 41.7%,#e6a72c 45.8%,#d8ac30 50.0%,#bdaf37 54.2%,#a5b13d 58.3%,#8eb343 62.5%,#7ab549 66.7%,#68b74e 70.8%,#58b952 75.0%,#4aba56 79.2%,#40bb59 83.3%,#38bc5b 87.5%,#34bc5c 91.7%,#34bc5c 100.0%)"></i>
<i style="left:396px;width:6.5px;background:linear-gradient(#f06030 0.0%,#f1652c 4.2%,#f16b2a 8.3%,#f0722a 12.5%,#ef792a 16.7%,#ed7f2b 20.8%,#ec862b 25.0%,#eb8c2b 29.2%,#ea932b 33.3%,#e89a2b 37.5%,#e7a02c 41.7%,#e6a72c 45.8%,#daac2f 50.0%,#bfaf36 54.2%,#a7b13d 58.3%,#90b343 62.5%,#7cb549 66.7%,#69b74e 70.8%,#59b852 75.0%,#4bba56 79.2%,#41bb59 83.3%,#39bc5b 87.5%,#34bc5c 91.7%,#34bc5c 100.0%)"></i>
<i style="left:402px;width:6.5px;background:linear-gradient(#f05f30 0.0%,#f1652c 4.2%,#f16b2a 8.3%,#f0722a 12.5%,#ef782a 16.7%,#ee7f2b 20.8%,#ec852b 25.0%,#eb8c2b 29.2%,#ea932b 33.3%,#e8992b 37.5%,#e7a02c 41.7%,#e6a62c 45.8%,#dcac2e 50.0%,#c1ae36 54.2%,#a9b13c 58.3%,#92b343 62.5%,#7db548 66.7%,#6bb74d 70.8%,#5ab852 75.0%,#4dba55 79.2%,#41bb58 83.3%,#39bc5b 87.5%,#34bc5c 91.7%,#34bc5c 100.0%)"></i>
<i style="left:408px;width:6.5px;background:linear-gradient(#f05f30 0.0%,#f1652c 4.2%,#f26b2a 8.3%,#f0712a 12.5%,#ef782a 16.7%,#ee7e2b 20.8%,#ec852b 25.0%,#eb8c2b 29.2%,#ea922b 33.3%,#e9992b 37.5%,#e79f2c 41.7%,#e6a62c 45.8%,#deac2e 50.0%,#c3ae35 54.2%,#aab13c 58.3%,#94b342 62.5%,#7fb548 66.7%,#6cb74d 70.8%,#5cb851 75.0%,#4eba55 79.2%,#42bb58 83.3%,#3abb5a 87.5%,#35bc5c 91.7%,#34bc5c 95.8%,#34bc5c 100.0%)"></i>
<i style="left:414px;width:6.5px;background:linear-gradient(#ef5f30 0.0%,#f1642d 4.2%,#f26a2a 8.3%,#f0712a 12.5%,#ef772a 16.7%,#ee7e2b 20.8%,#ec842b 25.0%,#eb8b2b 29.2%,#ea922b 33.3%,#e9982b 37.5%,#e79f2c 41.7%,#e6a52c 45.8%,#e0ab2d 50.0%,#c5ae35 54.2%,#acb03b 58.3%,#95b342 62.5%,#80b547 66.7%,#6db64c 70.8%,#5db851 75.0%,#4fb955 79.2%,#43bb58 83.3%,#3abb5a 87.5%,#35bc5c 91.7%,#34bc5c 95.8%,#34bc5c 100.0%)"></i>
<i style="left:420px;width:6.5px;background:linear-gradient(#ef5e31 0.0%,#f1642d 4.2%,#f26a2a 8.3%,#f0702a 12.5%,#ef772a 16.7%,#ee7d2b 20.8%,#ed842b 25.0%,#eb8b2b 29.2%,#ea912b 33.3%,#e9982b 37.5%,#e79e2c 41.7%,#e6a52c 45.8%,#e2ab2d 50.0%,#c7ae34 54.2%,#aeb03b 58.3%,#97b241 62.5%,#82b547 66.7%,#6fb64c 70.8%,#5eb851 75.0%,#50b954 79.2%,#44ba58 83.3%,#3bbb5a 87.5%,#35bc5c 91.7%,#34bc5c 95.8%,#34bc5c 100.0%)"></i>
<i style="left:426px;width:6.5px;background:linear-gradient(#ef5e31 0.0%,#f1632d 4.2%,#f2692a 8.3%,#f0702a 12.5%,#ef762a 16.7%,#ee7d2b 20.8%,#ed842b 25.0%,#eb8a2b 29.2%,#ea912b 33.3%,#e9972b 37.5%,#e89e2c 41.7%,#e6a52c 45.8%,#e5ab2c 50.0%,#c9ae33 54.2%,#b0b03a 58.3%,#99b241 62.5%,#84b446 66.7%,#70b64c 70.8%,#5fb850 75.0%,#51b954 79.2%,#45ba57 83.3%,#3cbb5a 87.5%,#36bc5c 91.7%,#34bc5c 95.8%,#34bc5c 100.0%)"></i>
<i style="left:432px;width:6.5px;background:linear-gradient(#ef5e31 0.0%,#f1632d 4.2%,#f2692a 8.3%,#f16f2a 12.5%,#ef762a 16.7%,#ee7d2b 20.8%,#ed832b 25.0%,#eb8a2b 29.2%,#ea902b 33.3%,#e9972b 37.5%,#e89d2c 41.7%,#e6a42c 45.8%,#e5ab2c 50.0%,#cbad33 54.2%,#b2b03a 58.3%,#9bb240 62.5%,#85b446 66.7%,#72b64b 70.8%,#61b850 75.0%,#52b954 79.2%,#46ba57 83.3%,#3cbb5a 87.5%,#36bc5b 91.7%,#34bc5c 95.8%,#34bc5c 100.0%)"></i>
<i style="left:438px;width:6.5px;background:linear-gradient(#ef5d31 0.0%,#f1632e 4.2%,#f2682a 8.3%,#f16f2a 12.5%,#ef762a 16.7%,#ee7c2b 20.8%,#ed832b 25.0%,#ec892b 29.2%,#ea902b 33.3%,#e9962b 37.5%,#e89d2c 41.7%,#e6a42c 45.8%,#e5aa2c 50.0%,#cdad32 54.2%,#b4b039 58.3%,#9cb240 62.5%,#87b446 66.7%,#73b64b 70.8%,#62b850 75.0%,#53b954 79.2%,#47ba57 83.3%,#3dbb5a 87.5%,#36bc5b 91.7%,#34bc5c 95.8%,#34bc5c 100.0%)"></i>
<i style="left:444px;width:6.5px;background:linear-gradient(#ef5d32 0.0%,#f0622e 4.2%,#f2682a 8.3%,#f16e2a 12.5%,#ef752a 16.7%,#ee7c2b 20.8%,#ed822b 25.0%,#ec892b 29.2%,#ea8f2b 33.3%,#e9962b 37.5%,#e89c2c 41.7%,#e7a32c 45.8%,#e5aa2c 50.0%,#d0ad32 54.2%,#b6b039 58.3%,#9eb23f 62.5%,#88b445 66.7%,#75b64a 70.8%,#63b74f 75.0%,#54b953 79.2%,#48ba57 83.3%,#3ebb59 87.5%,#37bc5b 91.7%,#34bc5c 95.8%,#34bc5c 100.0%)"></i>
<i style="left:450px;width:6.5px;background:linear-gradient(#ef5d32 0.0%,#f0622e 4.2%,#f2682a 8.3%,#f16e2a 12.5%,#f0752a 16.7%,#ee7b2b 20.8%,#ed822b 25.0%,#ec882b 29.2%,#ea8f2b 33.3%,#e9952b 37.5%,#e89c2c 41.7%,#e7a32c 45.8%,#e5a92c 50.0%,#d2ad31 54.2%,#b8af38 58.3%,#a0b23f 62.5%,#8ab445 66.7%,#76b64a 70.8%,#65b74f 75.0%,#55b953 79.2%,#49ba56 83.3%,#3ebb59 87.5%,#37bc5b 91.7%,#34bc5c 95.8%,#34bc5c 100.0%)"></i>
<i style="left:456px;width:6.5px;background:linear-gradient(#ef5c32 0.0%,#f0622e 4.2%,#f2672b 8.3%,#f16e2a 12.5%,#f0742a 16.7%,#ee7b2b 20.8%,#ed812b 25.0%,#ec882b 29.2%,#eb8e2b 33.3%,#e9952b 37.5%,#e89b2c 41.7%,#e7a22c 45.8%,#e5a92c 50.0%,#d4ad31 54.2%,#baaf38 58.3%,#a2b13e 62.5%,#8cb444 66.7%,#78b54a 70.8%,#66b74e 75.0%,#57b953 79.2%,#4aba56 83.3%,#3fbb59 87.5%,#38bc5b 91.7%,#34bc5c 95.8%,#34bc5c 100.0%)"></i>
<i style="left:462px;width:6.5px;background:linear-gradient(#ef5c32 0.0%,#f0612f 4.2%,#f2672b 8.3%,#f16d2a 12.5%,#f0742a 16.7%,#ee7a2b 20.8%,#ed812b 25.0%,#ec872b 29.2%,#eb8e2b 33.3%,#e9942b 37.5%,#e89b2c 41.7%,#e7a22c 45.8%,#e6a82c 50.0%,#d6ac30 54.2%,#bcaf37 58.3%,#a4b13e 62.5%,#8eb344 66.7%,#79b549 70.8%,#68b74e 75.0%,#58b952 79.2%,#4bba56 83.3%,#40bb59 87.5%,#38bc5b 91.7%,#34bc5c 95.8%,#34bc5c 100.0%)"></i>
<i style="left:468px;width:6.5px;background:linear-gradient(#ef5c33 0.0%,#f0612f 4.2%,#f2672b 8.3%,#f16d2a 12.5%,#f0732a 16.7%,#ef7a2b 20.8%,#ed802b 25.0%,#ec872b 29.2%,#eb8d2b 33.3%,#e9942b 37.5%,#e89b2c 41.7%,#e7a12c 45.8%,#e6a82c 50.0%,#d8ac30 54.2%,#beaf37 58.3%,#a6b13d 62.5%,#8fb343 66.7%,#7bb549 70.8%,#69b74e 75.0%,#59b852 79.2%,#4cba56 83.3%,#41bb59 87.5%,#39bc5b 91.7%,#34bc5c 95.8%,#34bc5c 100.0%)"></i>
<i style="left:474px;width:6.5px;background:linear-gradient(#ee5b33 0.0%,#f0612f 4.2%,#f1662b 8.3%,#f16c2a 12.5%,#f0732a 16.7%,#ef792b 20.8%,#ed802b 25.0%,#ec862b 29.2%,#eb8d2b 33.3%,#ea932b 37.5%,#e89a2b 41.7%,#e7a12c 45.8%,#e6a72c 50.0%,#daac2f 54.2%,#c0af36 58.3%,#a7b13d 62.5%,#91b343 66.7%,#7db548 70.8%,#6ab74d 75.0%,#5ab852 79.2%,#4dba55 83.3%,#42bb58 87.5%,#39bb5b 91.7%,#35bc5c 95.8%,#34bc5c 100.0%)"></i>
<i style="left:480px;width:6.5px;background:linear-gradient(#ee5b33 0.0%,#f0602f 4.2%,#f1662c 8.3%,#f16c2a 12.5%,#f0722a 16.7%,#ef792b 20.8%,#ed7f2b 25.0%,#ec862b 29.2%,#eb8c2b 33.3%,#ea932b 37.5%,#e89a2b 41.7%,#e7a02c 45.8%,#e6a72c 50.0%,#dcac2e 54.2%,#c2ae36 58.3%,#a9b13c 62.5%,#93b342 66.7%,#7eb548 70.8%,#6cb74d 75.0%,#5cb851 79.2%,#4eba55 83.3%,#43bb58 87.5%,#3abb5a 91.7%,#35bc5c 95.8%,#34bc5c 100.0%)"></i>
<i style="left:486px;width:6.5px;background:linear-gradient(#ee5b33 0.0%,#f06030 4.2%,#f1652c 8.3%,#f16b2a 12.5%,#f0722a 16.7%,#ef782a 20.8%,#ee7f2b 25.0%,#ec852b 29.2%,#eb8c2b 33.3%,#ea932b 37.5%,#e8992b 41.7%,#e7a02c 45.8%,#e6a62c 50.0%,#deac2e 54.2%,#c4ae35 58.3%,#abb13c 62.5%,#95b342 66.7%,#80b547 70.8%,#6db64c 75.0%,#5db851 79.2%,#4fb955 83.3%,#43bb58 87.5%,#3bbb5a 91.7%,#35bc5c 95.8%,#34bc5c 100.0%)"></i>
<i style="left:492px;width:6.5px;background:linear-gradient(#ee5a34 0.0%,#f06030 4.2%,#f1652c 8.3%,#f16b2a 12.5%,#f0722a 16.7%,#ef782a 20.8%,#ee7f2b 25.0%,#ec852b 29.2%,#eb8c2b 33.3%,#ea922b 37.5%,#e9992b 41.7%,#e79f2c 45.8%,#e6a62c 50.0%,#e0ab2d 54.2%,#c6ae34 58.3%,#adb03b 62.5%,#96b341 66.7%,#82b547 70.8%,#6fb64c 75.0%,#5eb851 79.2%,#50b954 83.3%,#44ba58 87.5%,#3bbb5a 91.7%,#36bc5c 95.8%,#34bc5c 100.0%)"></i>
<i style="left:498px;width:6.5px;background:linear-gradient(#ee5a34 0.0%,#f05f30 4.2%,#f1652c 8.3%,#f26b2a 12.5%,#f0712a 16.7%,#ef782a 20.8%,#ee7e2b 25.0%,#ec852b 29.2%,#eb8b2b 33.3%,#ea922b 37.5%,#e9982b 41.7%,#e79f2c 45.8%,#e6a52c 50.0%,#e3ab2d 54.2%,#c8ae34 58.3%,#afb03b 62.5%,#98b241 66.7%,#83b447 70.8%,#70b64c 75.0%,#60b850 79.2%,#51b954 83.3%,#45ba57 87.5%,#3cbb5a 91.7%,#36bc5b 95.8%,#34bc5c 100.0%)"></i>
<i style="left:504px;width:6.5px;background:linear-gradient(#ee5934 0.0%,#ef5f30 4.2%,#f1642d 8.3%,#f26a2a 12.5%,#f0712a 16.7%,#ef772a 20.8%,#ee7e2b 25.0%,#ed842b 29.2%,#eb8b2b 33.3%,#ea912b 37.5%,#e9982b 41.7%,#e89e2c 45.8%,#e6a52c 50.0%,#e5ab2c 54.2%,#caae33 58.3%,#b1b03a 62.5%,#9ab240 66.7%,#85b446 70.8%,#72b64b 75.0%,#61b850 79.2%,#52b954 83.3%,#46ba57 87.5%,#3dbb5a 91.7%,#36bc5b 95.8%,#34bc5c 100.0%)"></i>
<i style="left:510px;width:6.5px;background:linear-gradient(#ee5934 0.0%,#ef5f31 4.2%,#f1642d 8.3%,#f26a2a 12.5%,#f0702a 16.7%,#ef772a 20.8%,#ee7d2b 25.0%,#ed842b 29.2%,#eb8a2b 33.3%,#ea912b 37.5%,#e9972b 41.7%,#e89e2c 45.8%,#e6a42c 50.0%,#e5ab2c 54.2%,#ccad33 58.3%,#b3b03a 62.5%,#9cb240 66.7%,#86b446 70.8%,#73b64b 75.0%,#62b84f 79.2%,#53b953 83.3%,#47ba57 87.5%,#3dbb59 91.7%,#37bc5b 95.8%,#34bc5c 100.0%)"></i>
<i style="left:516px;width:6.5px;background:linear-gradient(#ee5935 0.0%,#ef5e31 4.2%,#f1642d 8.3%,#f2692a 12.5%,#f0702a 16.7%,#ef762a 20.8%,#ee7d2b 25.0%,#ed832b 29.2%,#eb8a2b 33.3%,#ea902b 37.5%,#e9972b 41.7%,#e89d2c 45.8%,#e6a42c 50.0%,#e5aa2c 54.2%,#cead32 58.3%,#b5b039 62.5%,#9eb23f 66.7%,#88b445 70.8%,#75b64a 75.0%,#64b74f 79.2%,#55b953 83.3%,#48ba57 87.5%,#3ebb59 91.7%,#37bc5b 95.8%,#34bc5c 100.0%)"></i>
<i style="left:522px;width:6.5px;background:linear-gradient(#ee5835 0.0%,#ef5e31 4.2%,#f1632d 8.3%,#f2692a 12.5%,#f16f2a 16.7%,#ef762a 20.8%,#ee7c2b 25.0%,#ed832b 29.2%,#ec892b 33.3%,#ea902b 37.5%,#e9962b 41.7%,#e89d2c 45.8%,#e7a32c 50.0%,#e5aa2c 54.2%,#d0ad32 58.3%,#b7af39 62.5%,#9fb23f 66.7%,#8ab445 70.8%,#76b64a 75.0%,#65b74f 79.2%,#56b953 83.3%,#49ba56 87.5%,#3fbb59 91.7%,#38bc5b 95.8%,#34bc5c 100.0%)"></i>
<i style="left:528px;width:6.5px;background:linear-gradient(#ee5835 0.0%,#ef5d31 4.2%,#f1632e 8.3%,#f2682a 12.5%,#f16f2a 16.7%,#ef752a 20.8%,#ee7c2b 25.0%,#ed822b 29.2%,#ec892b 33.3%,#ea8f2b 37.5%,#e9962b 41.7%,#e89c2c 45.8%,#e7a32c 50.0%,#e5a92c 54.2%,#d2ad31 58.3%,#b9af38 62.5%,#a1b23e 66.7%,#8cb444 70.8%,#78b54a 75.0%,#66b74e 79.2%,#57b952 83.3%,#4aba56 87.5%,#40bb59 91.7%,#38bc5b 95.8%,#34bc5c 100.0%)"></i>
<i style="left:534px;width:6.5px;background:linear-gradient(#ed5835 0.0%,#ef5d32 4.2%,#f0632e 8.3%,#f2682a 12.5%,#f16e2a 16.7%,#f0752a 20.8%,#ee7b2b 25.0%,#ed822b 29.2%,#ec882b 33.3%,#ea8f2b 37.5%,#e9952b 41.7%,#e89c2c 45.8%,#e7a22c 50.0%,#e5a92c 54.2%,#d4ad30 58.3%,#bbaf37 62.5%,#a3b13e 66.7%,#8db344 70.8%,#7ab549 75.0%,#68b74e 79.2%,#58b952 83.3%,#4bba56 87.5%,#41bb59 91.7%,#39bc5b 95.8%,#34bc5c 100.0%)"></i>
<i style="left:540px;width:6.5px;background:linear-gradient(#ed5736 0.0%,#ef5d32 4.2%,#f0622e 8.3%,#f2682a 12.5%,#f16e2a 16.7%,#f0742a 20.8%,#ee7b2b 25.0%,#ed812b 29.2%,#ec882b 33.3%,#eb8e2b 37.5%,#e9952b 41.7%,#e89b2c 45.8%,#e7a22c 50.0%,#e6a82c 54.2%,#d7ac30 58.3%,#bdaf37 62.5%,#a5b13d 66.7%,#8fb343 70.8%,#7bb549 75.0%,#69b74e 79.2%,#5ab852 83.3%,#4cba55 87.5%,#41bb58 91.7%,#39bb5b 95.8%,#35bc5c 100.0%)"></i>
<i style="left:546px;width:6.5px;background:linear-gradient(#ed5736 0.0%,#ef5c32 4.2%,#f0622e 8.3%,#f2672b 12.5%,#f16e2a 16.7%,#f0742a 20.8%,#ee7a2b 25.0%,#ed812b 29.2%,#ec872b 33.3%,#eb8e2b 37.5%,#e9942b 41.7%,#e89b2c 45.8%,#e7a12c 50.0%,#e6a72c 54.2%,#d9ac2f 58.3%,#bfaf36 62.5%,#a7b13d 66.7%,#91b343 70.8%,#7db548 75.0%,#6bb74d 79.2%,#5bb851 83.3%,#4dba55 87.5%,#42bb58 91.7%,#3abb5a 95.8%,#35bc5c 100.0%)"></i>
<i style="left:552px;width:6.5px;background:linear-gradient(#ed5736 0.0%,#ef5c32 4.2%,#f0612f 8.3%,#f2672b 12.5%,#f16d2a 16.7%,#f0742a 20.8%,#ef7a2b 25.0%,#ed802b 29.2%,#ec872b 33.3%,#eb8d2b 37.5%,#ea942b 41.7%,#e89a2b 45.8%,#e7a12c 50.0%,#e6a72c 54.2%,#dbac2f 58.3%,#c1ae36 62.5%,#a9b13c 66.7%,#93b342 70.8%,#7eb548 75.0%,#6cb74d 79.2%,#5cb851 83.3%,#4eb955 87.5%,#43bb58 91.7%,#3bbb5a 95.8%,#35bc5c 100.0%)"></i>
<i style="left:558px;width:6.5px;background:linear-gradient(#ed5636 0.0%,#ef5c33 4.2%,#f0612f 8.3%,#f2662b 12.5%,#f16d2a 16.7%,#f0732a 20.8%,#ef792b 25.0%,#ed802b 29.2%,#ec862b 33.3%,#eb8d2b 37.5%,#ea932b 41.7%,#e89a2b 45.8%,#e7a02c 50.0%,#e6a62c 54.2%,#ddac2e 58.3%,#c3ae35 62.5%,#abb13c 66.7%,#94b342 70.8%,#80b547 75.0%,#6eb64c 79.2%,#5db851 83.3%,#50b955 87.5%,#44ba58 91.7%,#3bbb5a 95.8%,#36bc5c 100.0%)"></i>
<i style="left:564px;width:6.5px;background:linear-gradient(#ed5637 0.0%,#ee5b33 4.2%,#f0612f 8.3%,#f1662b 12.5%,#f16c2a 16.7%,#f0732a 20.8%,#ef792b 25.0%,#ed7f2b 29.2%,#ec862b 33.3%,#eb8c2b 37.5%,#ea932b 41.7%,#e8992b 45.8%,#e7a02c 50.0%,#e6a62c 54.2%,#dfac2e 58.3%,#c5ae35 62.5%,#adb03b 66.7%,#96b341 70.8%,#82b547 75.0%,#6fb64c 79.2%,#5fb850 83.3%,#51b954 87.5%,#45ba57 91.7%,#3cbb5a 95.8%,#36bc5b 100.0%)"></i>
<i style="left:570px;width:6.5px;background:linear-gradient(#ed5637 0.0%,#ee5b33 4.2%,#f0602f 8.3%,#f1662c 12.5%,#f16c2a 16.7%,#f0722a 20.8%,#ef792a 25.0%,#ee7f2b 29.2%,#ec852b 33.3%,#eb8c2b 37.5%,#ea922b 41.7%,#e9992b 45.8%,#e79f2c 50.0%,#e6a52c 54.2%,#e1ab2d 58.3%,#c7ae34 62.5%,#afb03b 66.7%,#98b241 70.8%,#83b446 75.0%,#71b64c 79.2%,#60b850 83.3%,#52b954 87.5%,#46ba57 91.7%,#3dbb5a 95.8%,#36bc5b 100.0%)"></i>
<i style="left:576px;width:6.5px;background:linear-gradient(#ed5537 0.0%,#ee5b33 4.2%,#f06030 8.3%,#f1652c 12.5%,#f16b2a 16.7%,#f0722a 20.8%,#ef782a 25.0%,#ee7f2b 29.2%,#ec852b 33.3%,#eb8b2b 37.5%,#ea922b 41.7%,#e9982b 45.8%,#e79f2c 50.0%,#e6a52c 54.2%,#e4ab2c 58.3%,#c9ae34 62.5%,#b1b03a 66.7%,#9ab240 70.8%,#85b446 75.0%,#72b64b 79.2%,#61b850 83.3%,#53b954 87.5%,#47ba57 91.7%,#3dbb59 95.8%,#37bc5b 100.0%)"></i>
<i style="left:582px;width:6.5px;background:linear-gradient(#ed5537 0.0%,#ee5a34 4.2%,#f06030 8.3%,#f1652c 12.5%,#f16b2a 16.7%,#f0712a 20.8%,#ef782a 25.0%,#ee7e2b 29.2%,#ec842b 33.3%,#eb8b2b 37.5%,#ea912b 41.7%,#e9982b 45.8%,#e89e2c 50.0%,#e6a42c 54.2%,#e5ab2c 58.3%,#cbad33 62.5%,#b3b03a 66.7%,#9cb240 70.8%,#87b446 75.0%,#74b64b 79.2%,#63b74f 83.3%,#54b953 87.5%,#48ba57 91.7%,#3ebb59 95.8%,#37bc5b 100.0%)"></i>
<i style="left:588px;width:6.5px;background:linear-gradient(#ed5537 0.0%,#ee5a34 4.2%,#f05f30 8.3%,#f1652c 12.5%,#f26a2a 16.7%,#f0712a 20.8%,#ef772a 25.0%,#ee7e2b 29.2%,#ed842b 33.3%,#eb8a2b 37.5%,#ea912b 41.7%,#e9972b 45.8%,#e89e2c 50.0%,#e6a42c 54.2%,#e5aa2c 58.3%,#cdad32 62.5%,#b5b039 66.7%,#9eb23f 70.8%,#88b445 75.0%,#75b64a 79.2%,#64b74f 83.3%,#55b953 87.5%,#49ba56 91.7%,#3fbb59 95.8%,#38bc5b 100.0%)"></i>
<i style="left:594px;width:6.5px;background:linear-gradient(#ed5438 0.0%,#ee5a34 4.2%,#ef5f30 8.3%,#f1642d 12.5%,#f26a2a 16.7%,#f0702a 20.8%,#ef772a 25.0%,#ee7d2b 29.2%,#ed832b 33.3%,#eb8a2b 37.5%,#ea902b 41.7%,#e9972b 45.8%,#e89d2c 50.0%,#e6a32c 54.2%,#e5aa2c 58.3%,#cfad32 62.5%,#b7af39 66.7%,#9fb23f 70.8%,#8ab445 75.0%,#77b64a 79.2%,#66b74f 83.3%,#57b953 87.5%,#4aba56 91.7%,#40bb59 95.8%,#38bc5b 100.0%)"></i>
<i style="left:600px;width:6.5px;background:linear-gradient(#ec5438 0.0%,#ee5934 4.2%,#ef5f31 8.3%,#f1642d 12.5%,#f26a2a 16.7%,#f0702a 20.8%,#ef762a 25.0%,#ee7d2b 29.2%,#ed832b 33.3%,#ec892b 37.5%,#ea902b 41.7%,#e9962b 45.8%,#e89d2c 50.0%,#e7a32c 54.2%,#e5a92c 58.3%,#d2ad31 62.5%,#b9af38 66.7%,#a1b23e 70.8%,#8cb444 75.0%,#78b549 79.2%,#67b74e 83.3%,#58b952 87.5%,#4bba56 91.7%,#40bb59 95.8%,#39bc5b 100.0%)"></i>
<i style="left:606px;width:6.5px;background:linear-gradient(#ec5438 0.0%,#ee5934 4.2%,#ef5e31 8.3%,#f1642d 12.5%,#f2692a 16.7%,#f16f2a 20.8%,#ef762a 25.0%,#ee7c2b 29.2%,#ed832b 33.3%,#ec892b 37.5%,#ea8f2b 41.7%,#e9962b 45.8%,#e89c2c 50.0%,#e7a22c 54.2%,#e5a92c 58.3%,#d4ad31 62.5%,#bbaf38 66.7%,#a3b13e 70.8%,#8eb344 75.0%,#7ab549 79.2%,#69b74e 83.3%,#59b852 87.5%,#4cba55 91.7%,#41bb58 95.8%,#39bb5b 100.0%)"></i>
<i style="left:612px;width:6.5px;background:linear-gradient(#ec5338 0.0%,#ee5935 4.2%,#ef5e31 8.3%,#f1632d 12.5%,#f2692a 16.7%,#f16f2a 20.8%,#ef752a 25.0%,#ee7c2b 29.2%,#ed822b 33.3%,#ec882b 37.5%,#ea8f2b 41.7%,#e9952b 45.8%,#e89c2c 50.0%,#e7a22c 54.2%,#e6a82c 58.3%,#d6ac30 62.5%,#bdaf37 66.7%,#a5b13d 70.8%,#8fb343 75.0%,#7cb549 79.2%,#6ab74d 83.3%,#5ab852 87.5%,#4dba55 91.7%,#42bb58 95.8%,#3abb5a 100.0%)"></i>
<i style="left:618px;width:6.5px;background:linear-gradient(#ec5339 0.0%,#ee5835 4.2%,#ef5e31 8.3%,#f1632e 12.5%,#f2682a 16.7%,#f16f2a 20.8%,#ef752a 25.0%,#ee7b2b 29.2%,#ed822b 33.3%,#ec882b 37.5%,#eb8e2b 41.7%,#e9952b 45.8%,#e89b2c 50.0%,#e7a12c 54.2%,#e6a82c 58.3%,#d8ac30 62.5%,#bfaf36 66.7%,#a7b13d 70.8%,#91b343 75.0%,#7db548 79.2%,#6bb74d 83.3%,#5cb851 87.5%,#4eb955 91.7%,#43bb58 95.8%,#3bbb5a 100.0%)"></i>
<i style="left:624px;width:6.5px;background:linear-gradient(#ec5339 0.0%,#ee5835 4.2%,#ef5d32 8.3%,#f0622e 12.5%,#f2682a 16.7%,#f16e2a 20.8%,#f0742a 25.0%,#ee7b2b 29.2%,#ed812b 33.3%,#ec872b 37.5%,#eb8e2b 41.7%,#e9942b 45.8%,#e89b2c 50.0%,#e7a12c 54.2%,#e6a72c 58.3%,#daac2f 62.5%,#c1ae36 66.7%,#a9b13c 70.8%,#93b342 75.0%,#7fb548 79.2%,#6db74d 83.3%,#5db851 87.5%,#4fb955 91.7%,#44ba58 95.8%,#3bbb5a 100.0%)"></i>
<i style="left:630px;width:6.5px;background:linear-gradient(#ec5239 0.0%,#ed5735 4.2%,#ef5d32 8.3%,#f0622e 12.5%,#f2672a 16.7%,#f16e2a 20.8%,#f0742a 25.0%,#ee7a2b 29.2%,#ed812b 33.3%,#ec872b 37.5%,#eb8d2b 41.7%,#ea942b 45.8%,#e89a2b 50.0%,#e7a02c 54.2%,#e6a72c 58.3%,#dcac2e 62.5%,#c3ae35 66.7%,#abb13c 70.8%,#95b342 75.0%,#81b547 79.2%,#6eb64c 83.3%,#5eb851 87.5%,#50b954 91.7%,#45ba57 95.8%,#3cbb5a 100.0%)"></i>
<i style="left:636px;width:6.5px;background:linear-gradient(#ec5239 0.0%,#ed5736 4.2%,#ef5c32 8.3%,#f0622e 12.5%,#f2672b 16.7%,#f16d2a 20.8%,#f0742a 25.0%,#ef7a2b 29.2%,#ed802b 33.3%,#ec872b 37.5%,#eb8d2b 41.7%,#ea932b 45.8%,#e89a2b 50.0%,#e7a02c 54.2%,#e6a62c 58.3%,#dfac2e 62.5%,#c5ae35 66.7%,#adb03b 70.8%,#97b341 75.0%,#82b447 79.2%,#70b64c 83.3%,#60b850 87.5%,#52b954 91.7%,#46ba57 95.8%,#3dbb5a 100.0%)"></i>
<i style="left:642px;width:6.5px;background:linear-gradient(#ec513a 0.0%,#ed5736 4.2%,#ef5c32 8.3%,#f0612f 12.5%,#f2672b 16.7%,#f16d2a 20.8%,#f0732a 25.0%,#ef792b 29.2%,#ed802b 33.3%,#ec862b 37.5%,#eb8c2b 41.7%,#ea932b 45.8%,#e8992b 50.0%,#e79f2c 54.2%,#e6a62c 58.3%,#e1ab2d 62.5%,#c7ae34 66.7%,#afb03b 70.8%,#98b241 75.0%,#84b446 79.2%,#72b64b 83.3%,#61b850 87.5%,#53b954 91.7%,#47ba57 95.8%,#3dbb59 100.0%)"></i>
<i style="left:648px;width:6.5px;background:linear-gradient(#ec513a 0.0%,#ed5636 4.2%,#ef5c33 8.3%,#f0612f 12.5%,#f2662b 16.7%,#f16c2a 20.8%,#f0732a 25.0%,#ef792b 29.2%,#ed7f2b 33.3%,#ec862b 37.5%,#eb8c2b 41.7%,#ea922b 45.8%,#e9992b 50.0%,#e79f2c 54.2%,#e6a52c 58.3%,#e3ab2d 62.5%,#c9ae34 66.7%,#b1b03a 70.8%,#9ab240 75.0%,#86b446 79.2%,#73b64b 83.3%,#62b84f 87.5%,#54b953 91.7%,#48ba57 95.8%,#3ebb59 100.0%)"></i>
<i style="left:654px;width:6.5px;background:linear-gradient(#ec513a 0.0%,#ed5636 4.2%,#ee5b33 8.3%,#f0612f 12.5%,#f1662b 16.7%,#f16c2a 20.8%,#f0722a 25.0%,#ef782a 29.2%,#ee7f2b 33.3%,#ec852b 37.5%,#eb8b2b 41.7%,#ea922b 45.8%,#e9982b 50.0%,#e79e2c 54.2%,#e6a52c 58.3%,#e5ab2c 62.5%,#cbad33 66.7%,#b3b03a 70.8%,#9cb240 75.0%,#87b445 79.2%,#75b64a 83.3%,#64b74f 87.5%,#55b953 91.7%,#49ba56 95.8%,#3fbb59 100.0%)"></i>
<i style="left:660px;width:6.5px;background:linear-gradient(#eb503a 0.0%,#ed5637 4.2%,#ee5b33 8.3%,#f0602f 12.5%,#f1662c 16.7%,#f16b2a 20.8%,#f0722a 25.0%,#ef782a 29.2%,#ee7e2b 33.3%,#ec852b 37.5%,#eb8b2b 41.7%,#ea912b 45.8%,#e9972b 50.0%,#e89e2c 54.2%,#e6a42c 58.3%,#e5aa2c 62.5%,#cdad32 66.7%,#b5b039 70.8%,#9eb23f 75.0%,#89b445 79.2%,#76b64a 83.3%,#65b74f 87.5%,#57b953 91.7%,#4aba56 95.8%,#40bb59 100.0%)"></i>
<i style="left:666px;width:6.5px;background:linear-gradient(#eb503b 0.0%,#ed5537 4.2%,#ee5b33 8.3%,#f06030 12.5%,#f1652c 16.7%,#f16b2a 20.8%,#f0712a 25.0%,#ef782a 29.2%,#ee7e2b 33.3%,#ed842b 37.5%,#eb8a2b 41.7%,#ea912b 45.8%,#e9972b 50.0%,#e89d2c 54.2%,#e6a42c 58.3%,#e5aa2c 62.5%,#cfad32 66.7%,#b7af39 70.8%,#a0b23f 75.0%,#8bb444 79.2%,#78b54a 83.3%,#67b74e 87.5%,#58b952 91.7%,#4bba56 95.8%,#41bb59 100.0%)"></i>
<i style="left:672px;width:6.5px;background:linear-gradient(#eb503b 0.0%,#ed5537 4.2%,#ee5a34 8.3%,#f06030 12.5%,#f1652c 16.7%,#f26a2a 20.8%,#f0712a 25.0%,#ef772a 29.2%,#ee7d2b 33.3%,#ed842b 37.5%,#eb8a2b 41.7%,#ea902b 45.8%,#e9962b 50.0%,#e89d2c 54.2%,#e7a32c 58.3%,#e5a92c 62.5%,#d2ad31 66.7%,#b9af38 70.8%,#a2b13e 75.0%,#8db344 79.2%,#7ab549 83.3%,#68b74e 87.5%,#59b852 91.7%,#4cba55 95.8%,#41bb58 100.0%)"></i>
<i style="left:678px;width:6.5px;background:linear-gradient(#eb4f3b 0.0%,#ed5537 4.2%,#ee5a34 8.3%,#f05f30 12.5%,#f1642c 16.7%,#f26a2a 20.8%,#f0702a 25.0%,#ef772a 29.2%,#ee7d2b 33.3%,#ed832b 37.5%,#ec892b 41.7%,#ea902b 45.8%,#e9962b 50.0%,#e89c2c 54.2%,#e7a32c 58.3%,#e5a92c 62.5%,#d4ad31 66.7%,#bbaf37 70.8%,#a4b13e 75.0%,#8fb343 79.2%,#7bb549 83.3%,#6ab74d 87.5%,#5ab852 91.7%,#4dba55 95.8%,#42bb58 100.0%)"></i>
<i style="left:684px;width:6.5px;background:linear-gradient(#eb4f3b 0.0%,#ed5438 4.2%,#ee5a34 8.3%,#ef5f30 12.5%,#f1642d 16.7%,#f26a2a 20.8%,#f0702a 25.0%,#ef762a 29.2%,#ee7c2b 33.3%,#ed832b 37.5%,#ec892b 41.7%,#ea8f2b 45.8%,#e9952b 50.0%,#e89c2c 54.2%,#e7a22c 58.3%,#e6a82c 62.5%,#d6ac30 66.7%,#bdaf37 70.8%,#a6b13d 75.0%,#90b343 79.2%,#7db548 83.3%,#6bb74d 87.5%,#5cb851 91.7%,#4eb955 95.8%,#43bb58 100.0%)"></i>
<i style="left:690px;width:6.5px;background:linear-gradient(#eb4f3c 0.0%,#ec5438 4.2%,#ee5934 8.3%,#ef5e31 12.5%,#f1642d 16.7%,#f2692a 20.8%,#f16f2a 25.0%,#ef762a 29.2%,#ee7c2b 33.3%,#ed822b 37.5%,#ec882b 41.7%,#ea8f2b 45.8%,#e9952b 50.0%,#e89b2c 54.2%,#e7a22c 58.3%,#e6a82c 62.5%,#d8ac2f 66.7%,#bfaf36 70.8%,#a8b13d 75.0%,#92b342 79.2%,#7eb548 83.3%,#6db74d 87.5%,#5db851 91.7%,#4fb955 95.8%,#44ba58 100.0%)"></i>
<i style="left:696px;width:6.5px;background:linear-gradient(#eb4e3c 0.0%,#ec5438 4.2%,#ee5935 8.3%,#ef5e31 12.5%,#f1632d 16.7%,#f2692a 20.8%,#f16f2a 25.0%,#ef752a 29.2%,#ee7b2b 33.3%,#ed822b 37.5%,#ec882b 41.7%,#eb8e2b 45.8%,#e9942b 50.0%,#e89b2c 54.2%,#e7a12c 58.3%,#e6a72c 62.5%,#daac2f 66.7%,#c1ae36 70.8%,#aab13c 75.0%,#94b342 79.2%,#80b547 83.3%,#6eb64c 87.5%,#5eb851 91.7%,#51b954 95.8%,#45ba57 100.0%)"></i>
<i style="left:702px;width:6.5px;background:linear-gradient(#eb4e3c 0.0%,#ec5338 4.2%,#ee5835 8.3%,#ef5e31 12.5%,#f1632e 16.7%,#f2682a 20.8%,#f16e2a 25.0%,#f0752a 29.2%,#ee7b2b 33.3%,#ed812b 37.5%,#ec872b 41.7%,#eb8e2b 45.8%,#e9942b 50.0%,#e89a2b 54.2%,#e7a02c 58.3%,#e6a72c 62.5%,#ddac2e 66.7%,#c3ae35 70.8%,#acb13c 75.0%,#96b341 79.2%,#82b547 83.3%,#70b64c 87.5%,#60b850 91.7%,#52b954 95.8%,#46ba57 100.0%)"></i>
<i style="left:708px;width:6.5px;background:linear-gradient(#eb4e3c 0.0%,#ec5339 4.2%,#ee5835 8.3%,#ef5d31 12.5%,#f0632e 16.7%,#f2682a 20.8%,#f16e2a 25.0%,#f0742a 29.2%,#ee7b2b 33.3%,#ed812b 37.5%,#ec872b 41.7%,#eb8d2b 45.8%,#ea932b 50.0%,#e89a2b 54.2%,#e7a02c 58.3%,#e6a62c 62.5%,#dfac2e 66.7%,#c5ae35 70.8%,#aeb03b 75.0%,#98b241 79.2%,#84b446 83.3%,#71b64b 87.5%,#61b850 91.7%,#53b954 95.8%,#47ba57 100.0%)"></i>
<i style="left:714px;width:6.5px;background:linear-gradient(#eb4d3d 0.0%,#ec5339 4.2%,#ed5835 8.3%,#ef5d32 12.5%,#f0622e 16.7%,#f2672a 20.8%,#f16e2a 25.0%,#f0742a 29.2%,#ef7a2b 33.3%,#ed802b 37.5%,#ec872b 41.7%,#eb8d2b 45.8%,#ea932b 50.0%,#e8992b 54.2%,#e79f2c 58.3%,#e6a62c 62.5%,#e1ab2d 66.7%,#c8ae34 70.8%,#b0b03a 75.0%,#9ab240 79.2%,#85b446 83.3%,#73b64b 87.5%,#63b84f 91.7%,#54b953 95.8%,#48ba57 100.0%)"></i>
<i style="left:720px;width:6.5px;background:linear-gradient(#ea4d3d 0.0%,#ec5239 4.2%,#ed5736 8.3%,#ef5d32 12.5%,#f0622e 16.7%,#f2672b 20.8%,#f16d2a 25.0%,#f0732a 29.2%,#ef7a2b 33.3%,#ed802b 37.5%,#ec862b 41.7%,#eb8c2b 45.8%,#ea922b 50.0%,#e9992b 54.2%,#e79f2c 58.3%,#e6a52c 62.5%,#e3ab2c 66.7%,#caae33 70.8%,#b2b03a 75.0%,#9bb240 79.2%,#87b445 83.3%,#75b64a 87.5%,#64b74f 91.7%,#55b953 95.8%,#49ba56 100.0%)"></i>
<i style="left:726px;width:6.5px;background:linear-gradient(#ea4d3d 0.0%,#ec5239 4.2%,#ed5736 8.3%,#ef5c32 12.5%,#f0612f 16.7%,#f2672b 20.8%,#f16d2a 25.0%,#f0732a 29.2%,#ef792b 33.3%,#ed7f2b 37.5%,#ec862b 41.7%,#eb8c2b 45.8%,#ea922b 50.0%,#e9982b 54.2%,#e79e2c 58.3%,#e6a52c 62.5%,#e5ab2c 66.7%,#ccad33 70.8%,#b4b039 75.0%,#9db23f 79.2%,#89b445 83.3%,#76b64a 87.5%,#65b74f 91.7%,#57b953 95.8%,#4aba56 100.0%)"></i>
<i style="left:732px;width:6.5px;background:linear-gradient(#ea4c3d 0.0%,#ec513a 4.2%,#ed5736 8.3%,#ef5c32 12.5%,#f0612f 16.7%,#f2662b 20.8%,#f16c2a 25.0%,#f0722a 29.2%,#ef792a 33.3%,#ee7f2b 37.5%,#ec852b 41.7%,#eb8b2b 45.8%,#ea912b 50.0%,#e9982b 54.2%,#e89e2c 58.3%,#e6a42c 62.5%,#e5aa2c 66.7%,#cead32 70.8%,#b6b039 75.0%,#9fb23f 79.2%,#8bb445 83.3%,#78b54a 87.5%,#67b74e 91.7%,#58b952 95.8%,#4bba56 100.0%)"></i>
<i style="left:738px;width:6.5px;background:linear-gradient(#ea4c3e 0.0%,#ec513a 4.2%,#ed5636 8.3%,#ef5c33 12.5%,#f0612f 16.7%,#f1662b 20.8%,#f16c2a 25.0%,#f0722a 29.2%,#ef782a 33.3%,#ee7e2b 37.5%,#ec852b 41.7%,#eb8b2b 45.8%,#ea912b 50.0%,#e9972b 54.2%,#e89d2c 58.3%,#e6a42c 62.5%,#e5aa2c 66.7%,#d0ad32 70.8%,#b8af38 75.0%,#a1b23e 79.2%,#8cb444 83.3%,#79b549 87.5%,#68b74e 91.7%,#59b852 95.8%,#4cba55 100.0%)"></i>
<i style="left:744px;width:6.5px;background:linear-gradient(#ea4c3e 0.0%,#ec513a 4.2%,#ed5637 8.3%,#ee5b33 12.5%,#f0602f 16.7%,#f1662c 20.8%,#f16b2a 25.0%,#f0712a 29.2%,#ef782a 33.3%,#ee7e2b 37.5%,#ed842b 41.7%,#eb8a2b 45.8%,#ea902b 50.0%,#e9972b 54.2%,#e89d2c 58.3%,#e7a32c 62.5%,#e5a92c 66.7%,#d2ad31 70.8%,#baaf38 75.0%,#a3b13e 79.2%,#8eb344 83.3%,#7bb549 87.5%,#6ab74d 91.7%,#5bb852 95.8%,#4eba55 100.0%)"></i>
<i style="left:750px;width:6.5px;background:linear-gradient(#ea4b3e 0.0%,#eb503a 4.2%,#ed5637 8.3%,#ee5b33 12.5%,#f06030 16.7%,#f1652c 20.8%,#f16b2a 25.0%,#f0712a 29.2%,#ef772a 33.3%,#ee7d2b 37.5%,#ed842b 41.7%,#eb8a2b 45.8%,#ea902b 50.0%,#e9962b 54.2%,#e89c2c 58.3%,#e7a32c 62.5%,#e5a92c 66.7%,#d5ad30 70.8%,#bcaf37 75.0%,#a5b13d 79.2%,#90b343 83.3%,#7db548 87.5%,#6bb74d 91.7%,#5cb851 95.8%,#4fb955 100.0%)"></i>
<i style="left:756px;width:6.5px;background:linear-gradient(#ea4b3e 0.0%,#eb503b 4.2%,#ed5537 8.3%,#ee5a33 12.5%,#f06030 16.7%,#f1652c 20.8%,#f26a2a 25.0%,#f0712a 29.2%,#ef772a 33.3%,#ee7d2b 37.5%,#ed832b 41.7%,#ec892b 45.8%,#ea8f2b 50.0%,#e9962b 54.2%,#e89c2c 58.3%,#e7a22c 62.5%,#e6a82c 66.7%,#d7ac30 70.8%,#beaf37 75.0%,#a7b13d 79.2%,#92b343 83.3%,#7eb548 87.5%,#6db74d 91.7%,#5db851 95.8%,#50b954 100.0%)"></i>
<i style="left:762px;width:6.5px;background:linear-gradient(#ea4b3e 0.0%,#eb503b 4.2%,#ed5537 8.3%,#ee5a34 12.5%,#f05f30 16.7%,#f1642c 20.8%,#f26a2a 25.0%,#f0702a 29.2%,#ef762a 33.3%,#ee7c2b 37.5%,#ed832b 41.7%,#ec892b 45.8%,#ea8f2b 50.0%,#e9952b 54.2%,#e89b2c 58.3%,#e7a12c 62.5%,#e6a82c 66.7%,#d9ac2f 70.8%,#c0af36 75.0%,#a9b13c 79.2%,#94b342 83.3%,#80b547 87.5%,#6eb64c 91.7%,#5fb850 95.8%,#51b954 100.0%)"></i>
<i style="left:768px;width:6.5px;background:linear-gradient(#ea4a3f 0.0%,#eb4f3b 4.2%,#ed5538 8.3%,#ee5a34 12.5%,#ef5f30 16.7%,#f1642d 20.8%,#f2692a 25.0%,#f1702a 29.2%,#ef762a 33.3%,#ee7c2b 37.5%,#ed822b 41.7%,#ec882b 45.8%,#eb8e2b 50.0%,#e9952b 54.2%,#e89b2c 58.3%,#e7a12c 62.5%,#e6a72c 66.7%,#dbac2f 70.8%,#c2ae35 75.0%,#abb13c 79.2%,#96b342 83.3%,#82b547 87.5%,#70b64c 91.7%,#60b850 95.8%,#52b954 100.0%)"></i>
<i style="left:774px;width:6.5px;background:linear-gradient(#ea4a3f 0.0%,#eb4f3b 4.2%,#ec5438 8.3%,#ee5934 12.5%,#ef5e31 16.7%,#f1642d 20.8%,#f2692a 25.0%,#f16f2a 29.2%,#ef752a 33.3%,#ee7b2b 37.5%,#ed822b 41.7%,#ec882b 45.8%,#eb8e2b 50.0%,#e9942b 54.2%,#e89a2c 58.3%,#e7a02c 62.5%,#e6a72c 66.7%,#deac2e 70.8%,#c4ae35 75.0%,#adb03b 79.2%,#97b241 83.3%,#84b446 87.5%,#72b64b 91.7%,#62b850 95.8%,#54b953 100.0%)"></i>
<i style="left:780px;width:6.5px;background:linear-gradient(#ea493f 0.0%,#eb4f3c 4.2%,#ec5438 8.3%,#ee5934 12.5%,#ef5e31 16.7%,#f1632d 20.8%,#f2692a 25.0%,#f16f2a 29.2%,#f0752a 33.3%,#ee7b2b 37.5%,#ed812b 41.7%,#ec872b 45.8%,#eb8d2b 50.0%,#ea942b 54.2%,#e89a2b 58.3%,#e7a02c 62.5%,#e6a62c 66.7%,#e0ab2d 70.8%,#c7ae34 75.0%,#afb03b 79.2%,#99b241 83.3%,#85b446 87.5%,#73b64b 91.7%,#63b74f 95.8%,#55b953 100.0%)"></i>
<i style="left:786px;width:6.5px;background:linear-gradient(#e9493f 0.0%,#eb4e3c 4.2%,#ec5338 8.3%,#ee5935 12.5%,#ef5e31 16.7%,#f1632e 20.8%,#f2682a 25.0%,#f16e2a 29.2%,#f0742a 33.3%,#ee7b2b 37.5%,#ed812b 41.7%,#ec872b 45.8%,#eb8d2b 50.0%,#ea932b 54.2%,#e8992b 58.3%,#e79f2c 62.5%,#e6a62c 66.7%,#e2ab2d 70.8%,#c9ae34 75.0%,#b1b03a 79.2%,#9bb240 83.3%,#87b445 87.5%,#75b64a 91.7%,#64b74f 95.8%,#56b953 100.0%)"></i>
<i style="left:792px;width:6.5px;background:linear-gradient(#e94940 0.0%,#eb4e3c 4.2%,#ec5339 8.3%,#ee5835 12.5%,#ef5d31 16.7%,#f0632e 20.8%,#f2682a 25.0%,#f16e2a 29.2%,#f0742a 33.3%,#ef7a2b 37.5%,#ed802b 41.7%,#ec862b 45.8%,#eb8c2b 50.0%,#ea932b 54.2%,#e9992b 58.3%,#e79f2c 62.5%,#e6a52c 66.7%,#e4ab2c 70.8%,#cbad33 75.0%,#b3b039 79.2%,#9db23f 83.3%,#89b445 87.5%,#76b64a 91.7%,#66b74e 95.8%,#57b952 100.0%)"></i>
<i style="left:798px;width:6.5px;background:linear-gradient(#e94840 0.0%,#eb4e3c 4.2%,#ec5339 8.3%,#ee5835 12.5%,#ef5d32 16.7%,#f0622e 20.8%,#f2672a 25.0%,#f16d2a 29.2%,#f0732a 33.3%,#ef7a2b 37.5%,#ed802b 41.7%,#ec862b 45.8%,#eb8c2b 50.0%,#ea922b 54.2%,#e9982b 58.3%,#e79e2c 62.5%,#e6a42c 66.7%,#e5ab2c 70.8%,#cdad32 75.0%,#b5b039 79.2%,#9fb23f 83.3%,#8bb444 87.5%,#78b54a 91.7%,#67b74e 95.8%,#59b852 100.0%)"></i>
<i style="left:804px;width:6.5px;background:linear-gradient(#e94840 0.0%,#eb4d3d 4.2%,#ec5239 8.3%,#ed5735 12.5%,#ef5d32 16.7%,#f0622e 20.8%,#f2672b 25.0%,#f16d2a 29.2%,#f0732a 33.3%,#ef792b 37.5%,#ee7f2b 41.7%,#ec852b 45.8%,#eb8b2b 50.0%,#ea922b 54.2%,#e9982b 58.3%,#e89e2c 62.5%,#e6a42c 66.7%,#e5aa2c 70.8%,#cfad32 75.0%,#b7af38 79.2%,#a1b23e 83.3%,#8db344 87.5%,#7ab549 91.7%,#69b74e 95.8%,#5ab852 100.0%)"></i>
<i style="left:810px;width:6.5px;background:linear-gradient(#e94840 0.0%,#ea4d3d 4.2%,#ec5239 8.3%,#ed5736 12.5%,#ef5c32 16.7%,#f0612f 20.8%,#f2672b 25.0%,#f16c2a 29.2%,#f0722a 33.3%,#ef792a 37.5%,#ee7f2b 41.7%,#ec852b 45.8%,#eb8b2b 50.0%,#ea912b 54.2%,#e9972b 58.3%,#e89d2c 62.5%,#e6a32c 66.7%,#e5aa2c 70.8%,#d2ad31 75.0%,#baaf38 79.2%,#a3b13e 83.3%,#8eb343 87.5%,#7bb549 91.7%,#6ab74d 95.8%,#5bb851 100.0%)"></i>
<i style="left:816px;width:6.5px;background:linear-gradient(#e94741 0.0%,#ea4d3d 4.2%,#ec523a 8.3%,#ed5736 12.5%,#ef5c32 16.7%,#f0612f 20.8%,#f1662b 25.0%,#f16c2a 29.2%,#f0722a 33.3%,#ef782a 37.5%,#ee7e2b 41.7%,#ed842b 45.8%,#eb8a2b 50.0%,#ea912b 54.2%,#e9972b 58.3%,#e89d2c 62.5%,#e7a32c 66.7%,#e5a92c 70.8%,#d4ad31 75.0%,#bcaf37 79.2%,#a5b13d 83.3%,#90b343 87.5%,#7db548 91.7%,#6cb74d 95.8%,#5db851 100.0%)"></i>
<i style="left:822px;width:6.5px;background:linear-gradient(#e94741 0.0%,#ea4c3d 4.2%,#ec513a 8.3%,#ed5636 12.5%,#ef5c33 16.7%,#f0612f 20.8%,#f1662c 25.0%,#f16b2a 29.2%,#f0722a 33.3%,#ef782a 37.5%,#ee7e2b 41.7%,#ed842b 45.8%,#eb8a2b 50.0%,#ea902b 54.2%,#e9962b 58.3%,#e89c2c 62.5%,#e7a22c 66.7%,#e5a82c 70.8%,#d6ac30 75.0%,#beaf37 79.2%,#a7b13d 83.3%,#92b342 87.5%,#7fb548 91.7%,#6eb64c 95.8%,#5eb851 100.0%)"></i>
<i style="left:828px;width:6.5px;background:linear-gradient(#e94741 0.0%,#ea4c3e 4.2%,#ec513a 8.3%,#ed5636 12.5%,#ee5b33 16.7%,#f0602f 20.8%,#f1652c 25.0%,#f16b2a 29.2%,#f0712a 33.3%,#ef772a 37.5%,#ee7d2b 41.7%,#ed832b 45.8%,#ec892b 50.0%,#ea902b 54.2%,#e9962b 58.3%,#e89c2c 62.5%,#e7a22c 66.7%,#e6a82c 70.8%,#d8ac2f 75.0%,#c0af36 79.2%,#a9b13c 83.3%,#94b342 87.5%,#81b547 91.7%,#6fb64c 95.8%,#60b850 100.0%)"></i>
<i style="left:834px;width:6.5px;background:linear-gradient(#e94641 0.0%,#ea4b3e 4.2%,#eb513a 8.3%,#ed5637 12.5%,#ee5b33 16.7%,#f06030 20.8%,#f1652c 25.0%,#f26a2a 29.2%,#f0712a 33.3%,#ef772a 37.5%,#ee7d2b 41.7%,#ed832b 45.8%,#ec892b 50.0%,#ea8f2b 54.2%,#e9952b 58.3%,#e89b2c 62.5%,#e7a12c 66.7%,#e6a72c 70.8%,#dbac2f 75.0%,#c2ae35 79.2%,#abb13c 83.3%,#96b341 87.5%,#82b447 91.7%,#71b64c 95.8%,#61b850 100.0%)"></i>
<i style="left:840px;width:6.5px;background:linear-gradient(#e94642 0.0%,#ea4b3e 4.2%,#eb503b 8.3%,#ed5537 12.5%,#ee5a33 16.7%,#f05f30 20.8%,#f1652c 25.0%,#f26a2a 29.2%,#f0702a 33.3%,#ef762a 37.5%,#ee7c2b 41.7%,#ed822b 45.8%,#ec882b 50.0%,#eb8f2b 54.2%,#e9952b 58.3%,#e89b2c 62.5%,#e7a12c 66.7%,#e6a72c 70.8%,#ddac2e 75.0%,#c4ae35 79.2%,#adb03b 83.3%,#98b241 87.5%,#84b446 91.7%,#72b64b 95.8%,#62b84f 100.0%)"></i>
<i style="left:846px;width:6.5px;background:linear-gradient(#e84642 0.0%,#ea4b3e 4.2%,#eb503b 8.3%,#ed5537 12.5%,#ee5a34 16.7%,#f05f30 20.8%,#f1642d 25.0%,#f26a2a 29.2%,#f1702a 33.3%,#ef762a 37.5%,#ee7c2b 41.7%,#ed822b 45.8%,#ec882b 50.0%,#eb8e2b 54.2%,#e9942b 58.3%,#e89a2b 62.5%,#e7a02c 66.7%,#e6a62c 70.8%,#dfac2e 75.0%,#c6ae34 79.2%,#afb03b 83.3%,#9ab240 87.5%,#86b446 91.7%,#74b64b 95.8%,#64b74f 100.0%)"></i>
<i style="left:852px;width:6.5px;background:linear-gradient(#e84542 0.0%,#ea4a3f 4.2%,#eb4f3b 8.3%,#ed5537 12.5%,#ee5a34 16.7%,#ef5f30 20.8%,#f1642d 25.0%,#f2692a 29.2%,#f16f2a 33.3%,#ef752a 37.5%,#ee7b2b 41.7%,#ed812b 45.8%,#ec872b 50.0%,#eb8d2b 54.2%,#ea942b 58.3%,#e89a2b 62.5%,#e7a02c 66.7%,#e6a62c 70.8%,#e2ab2d 75.0%,#c9ae34 79.2%,#b1b03a 83.3%,#9cb240 87.5%,#88b445 91.7%,#76b64a 95.8%,#65b74f 100.0%)"></i>
<i style="left:858px;width:6.5px;background:linear-gradient(#e84542 0.0%,#ea4a3f 4.2%,#eb4f3b 8.3%,#ed5438 12.5%,#ee5934 16.7%,#ef5e31 20.8%,#f1632d 25.0%,#f2692a 29.2%,#f16f2a 33.3%,#f0752a 37.5%,#ee7b2b 41.7%,#ed812b 45.8%,#ec872b 50.0%,#eb8d2b 54.2%,#ea932b 58.3%,#e8992b 62.5%,#e79f2c 66.7%,#e6a52c 70.8%,#e4ab2c 75.0%,#cbae33 79.2%,#b3b039 83.3%,#9eb23f 87.5%,#8ab445 91.7%,#77b64a 95.8%,#67b74e 100.0%)"></i>
<i style="left:864px;width:6.5px;background:linear-gradient(#e84543 0.0%,#ea4a3f 4.2%,#eb4f3c 8.3%,#ec5438 12.5%,#ee5934 16.7%,#ef5e31 20.8%,#f1632d 25.0%,#f2682a 29.2%,#f16e2a 33.3%,#f0742a 37.5%,#ee7a2b 41.7%,#ed802b 45.8%,#ec862b 50.0%,#eb8c2b 54.2%,#ea932b 58.3%,#e9992b 62.5%,#e79f2c 66.7%,#e6a52c 70.8%,#e5ab2c 75.0%,#cdad33 79.2%,#b5b039 83.3%,#a0b23f 87.5%,#8bb444 91.7%,#79b549 95.8%,#68b74e 100.0%)"></i>
<i style="left:870px;width:6.5px;background:linear-gradient(#e84443 0.0%,#e9493f 4.2%,#eb4e3c 8.3%,#ec5338 12.5%,#ee5935 16.7%,#ef5e31 20.8%,#f1632e 25.0%,#f2682a 29.2%,#f16e2a 33.3%,#f0742a 37.5%,#ef7a2b 41.7%,#ed802b 45.8%,#ec862b 50.0%,#eb8c2b 54.2%,#ea922b 58.3%,#e9982b 62.5%,#e89e2c 66.7%,#e6a42c 70.8%,#e5aa2c 75.0%,#cfad32 79.2%,#b8af38 83.3%,#a2b13e 87.5%,#8db344 91.7%,#7bb549 95.8%,#6ab74d 100.0%)"></i>
<i style="left:876px;width:6.5px;background:linear-gradient(#e84443 0.0%,#e94940 4.2%,#eb4e3c 8.3%,#ec5339 12.5%,#ee5835 16.7%,#ef5d31 20.8%,#f0622e 25.0%,#f2672a 29.2%,#f16d2a 33.3%,#f0732a 37.5%,#ef792b 41.7%,#ed7f2b 45.8%,#ec852b 50.0%,#eb8b2b 54.2%,#ea912b 58.3%,#e9982b 62.5%,#e89e2c 66.7%,#e6a42c 70.8%,#e5aa2c 75.0%,#d2ad31 79.2%,#baaf38 83.3%,#a4b13e 87.5%,#8fb343 91.7%,#7cb548 95.8%,#6bb74d 100.0%)"></i>
<i style="left:882px;width:6.5px;background:linear-gradient(#e84443 0.0%,#e94940 4.2%,#eb4e3c 8.3%,#ec5339 12.5%,#ed5835 16.7%,#ef5d32 20.8%,#f0622e 25.0%,#f2672b 29.2%,#f16d2a 33.3%,#f0732a 37.5%,#ef792b 41.7%,#ee7f2b 45.8%,#ec852b 50.0%,#eb8b2b 54.2%,#ea912b 58.3%,#e9972b 62.5%,#e89d2c 66.7%,#e7a32c 70.8%,#e5a92c 75.0%,#d4ad31 79.2%,#bcaf37 83.3%,#a6b13d 87.5%,#91b343 91.7%,#7eb548 95.8%,#6db74d 100.0%)"></i>
<i style="left:888px;width:6.5px;background:linear-gradient(#e84443 0.0%,#e94840 4.2%,#eb4d3d 8.3%,#ec5239 12.5%,#ed5736 16.7%,#ef5c32 20.8%,#f0622e 25.0%,#f2672b 29.2%,#f16c2a 33.3%,#f0722a 37.5%,#ef782a 41.7%,#ee7e2b 45.8%,#ec842b 50.0%,#eb8a2b 54.2%,#ea902b 58.3%,#e9962b 62.5%,#e89c2c 66.7%,#e7a32c 70.8%,#e5a92c 75.0%,#d6ac30 79.2%,#beaf37 83.3%,#a8b13d 87.5%,#93b342 91.7%,#80b547 95.8%,#6fb64c 100.0%)"></i>
<i style="left:894px;width:6.5px;background:linear-gradient(#e84443 0.0%,#e94840 4.2%,#ea4d3d 8.3%,#ec5239 12.5%,#ed5736 16.7%,#ef5c32 20.8%,#f0612f 25.0%,#f1662b 29.2%,#f16c2a 33.3%,#f0722a 37.5%,#ef782a 41.7%,#ee7e2b 45.8%,#ed842b 50.0%,#eb8a2b 54.2%,#ea902b 58.3%,#e9962b 62.5%,#e89c2c 66.7%,#e7a22c 70.8%,#e6a82c 75.0%,#d8ac2f 79.2%,#c0af36 83.3%,#aab13c 87.5%,#95b342 91.7%,#82b547 95.8%,#70b64c 100.0%)"></i>
<i style="left:900px;width:6.5px;background:linear-gradient(#e84443 0.0%,#e94841 4.2%,#ea4d3d 8.3%,#ec523a 12.5%,#ed5736 16.7%,#ef5c33 20.8%,#f0612f 25.0%,#f1662c 29.2%,#f16b2a 33.3%,#f0712a 37.5%,#ef772a 41.7%,#ee7d2b 45.8%,#ed832b 50.0%,#ec892b 54.2%,#ea8f2b 58.3%,#e9952b 62.5%,#e89b2c 66.7%,#e7a12c 70.8%,#e6a72c 75.0%,#dbac2f 79.2%,#c2ae35 83.3%,#acb13c 87.5%,#97b341 91.7%,#83b446 95.8%,#72b64b 100.0%)"></i>
<i style="left:906px;width:6.5px;background:linear-gradient(#e84443 0.0%,#e94741 4.2%,#ea4c3d 8.3%,#ec513a 12.5%,#ed5636 16.7%,#ee5b33 20.8%,#f0602f 25.0%,#f1652c 29.2%,#f16b2a 33.3%,#f0712a 37.5%,#ef772a 41.7%,#ee7d2b 45.8%,#ed832b 50.0%,#ec892b 54.2%,#ea8f2b 58.3%,#e9952b 62.5%,#e89b2c 66.7%,#e7a12c 70.8%,#e6a72c 75.0%,#ddac2e 79.2%,#c5ae35 83.3%,#aeb03b 87.5%,#99b241 91.7%,#85b446 95.8%,#73b64b 100.0%)"></i>
<i style="left:912px;width:6.5px;background:linear-gradient(#e84443 0.0%,#e94741 4.2%,#ea4c3e 8.3%,#ec513a 12.5%,#ed5637 16.7%,#ee5b33 20.8%,#f06030 25.0%,#f1652c 29.2%,#f26a2a 33.3%,#f0702a 37.5%,#ef762a 41.7%,#ee7c2b 45.8%,#ed822b 50.0%,#ec882b 54.2%,#eb8e2b 58.3%,#e9942b 62.5%,#e89a2c 66.7%,#e7a02c 70.8%,#e6a62c 75.0%,#dfac2e 79.2%,#c7ae34 83.3%,#b0b03a 87.5%,#9bb240 91.7%,#87b445 95.8%,#75b64a 100.0%)"></i>
<i style="left:918px;width:6.5px;background:linear-gradient(#e84443 0.0%,#e94741 4.2%,#ea4c3e 8.3%,#eb513a 12.5%,#ed5637 16.7%,#ee5b33 20.8%,#f06030 25.0%,#f1652c 29.2%,#f26a2a 33.3%,#f0702a 37.5%,#ef762a 41.7%,#ee7c2b 45.8%,#ed822b 50.0%,#ec882b 54.2%,#eb8e2b 58.3%,#e9942b 62.5%,#e89a2b 66.7%,#e7a02c 70.8%,#e6a62c 75.0%,#e2ab2d 79.2%,#c9ae34 83.3%,#b2b03a 87.5%,#9db240 91.7%,#89b445 95.8%,#77b64a 100.0%)"></i>
<i style="left:924px;width:6.5px;background:linear-gradient(#e84443 0.0%,#e94641 4.2%,#ea4b3e 8.3%,#eb503b 12.5%,#ed5537 16.7%,#ee5a34 20.8%,#f05f30 25.0%,#f1642d 29.2%,#f2692a 33.3%,#f16f2a 37.5%,#ef752a 41.7%,#ee7b2b 45.8%,#ed812b 50.0%,#ec872b 54.2%,#eb8d2b 58.3%,#ea932b 62.5%,#e8992b 66.7%,#e79f2c 70.8%,#e6a52c 75.0%,#e4ab2c 79.2%,#cbad33 83.3%,#b4b039 87.5%,#9fb23f 91.7%,#8bb444 95.8%,#79b549 100.0%)"></i>
<i style="left:930px;width:6.5px;background:linear-gradient(#e84443 0.0%,#e94642 4.2%,#ea4b3e 8.3%,#eb503b 12.5%,#ed5537 16.7%,#ee5a34 20.8%,#ef5f30 25.0%,#f1642d 29.2%,#f2692a 33.3%,#f16f2a 37.5%,#ef752a 41.7%,#ee7b2b 45.8%,#ed812b 50.0%,#ec872b 54.2%,#eb8d2b 58.3%,#ea932b 62.5%,#e9992b 66.7%,#e79f2c 70.8%,#e6a52c 75.0%,#e5ab2c 79.2%,#cead32 83.3%,#b6af39 87.5%,#a1b23f 91.7%,#8db344 95.8%,#7ab549 100.0%)"></i>
<i style="left:936px;width:6.5px;background:linear-gradient(#e84443 0.0%,#e84542 4.2%,#ea4a3f 8.3%,#eb4f3b 12.5%,#ed5438 16.7%,#ee5934 20.8%,#ef5e31 25.0%,#f1632d 29.2%,#f2692a 33.3%,#f16e2a 37.5%,#f0742a 41.7%,#ee7a2b 45.8%,#ed802b 50.0%,#ec862b 54.2%,#eb8c2b 58.3%,#ea922b 62.5%,#e9982b 66.7%,#e79e2c 70.8%,#e6a42c 75.0%,#e5aa2c 79.2%,#d0ad32 83.3%,#b8af38 87.5%,#a3b13e 91.7%,#8eb343 95.8%,#7cb548 100.0%)"></i>
<i style="left:942px;width:6.5px;background:linear-gradient(#e84443 0.0%,#e84542 4.2%,#ea4a3f 8.3%,#eb4f3b 12.5%,#ec5438 16.7%,#ee5934 20.8%,#ef5e31 25.0%,#f1632d 29.2%,#f2682a 33.3%,#f16e2a 37.5%,#f0742a 41.7%,#ef7a2b 45.8%,#ed802b 50.0%,#ec862b 54.2%,#eb8c2b 58.3%,#ea922b 62.5%,#e9982b 66.7%,#e89e2c 70.8%,#e6a42c 75.0%,#e5aa2c 79.2%,#d2ad31 83.3%,#bbaf38 87.5%,#a5b13d 91.7%,#90b343 95.8%,#7eb548 100.0%)"></i>
<i style="left:948px;width:6.5px;background:linear-gradient(#e84443 0.0%,#e84542 4.2%,#ea4a3f 8.3%,#eb4f3c 12.5%,#ec5438 16.7%,#ee5935 20.8%,#ef5e31 25.0%,#f1632e 29.2%,#f2682a 33.3%,#f16e2a 37.5%,#f0732a 41.7%,#ef792b 45.8%,#ed7f2b 50.0%,#ec852b 54.2%,#eb8b2b 58.3%,#ea912b 62.5%,#e9972b 66.7%,#e89d2c 70.8%,#e7a32c 75.0%,#e5a92c 79.2%,#d4ad31 83.3%,#bdaf37 87.5%,#a7b13d 91.7%,#92b342 95.8%,#7fb548 100.0%)"></i>
<i style="left:954px;width:6.5px;background:linear-gradient(#e84443 0.0%,#e84443 4.2%,#e9493f 8.3%,#eb4e3c 12.5%,#ec5338 16.7%,#ee5835 20.8%,#ef5d31 25.0%,#f0622e 29.2%,#f2672b 33.3%,#f16d2a 37.5%,#f0732a 41.7%,#ef792b 45.8%,#ee7f2b 50.0%,#ec852b 54.2%,#eb8b2b 58.3%,#ea912b 62.5%,#e9972b 66.7%,#e89d2c 70.8%,#e7a32c 75.0%,#e5a82c 79.2%,#d7ac30 83.3%,#bfaf36 87.5%,#a9b13c 91.7%,#94b342 95.8%,#81b547 100.0%)"></i>
<i style="left:960px;width:6.5px;background:linear-gradient(#e84443 0.0%,#e84443 4.2%,#e94940 8.3%,#eb4e3c 12.5%,#ec5339 16.7%,#ee5835 20.8%,#ef5d32 25.0%,#f0622e 29.2%,#f2672b 33.3%,#f16d2a 37.5%,#f0732a 41.7%,#ef782a 45.8%,#ee7e2b 50.0%,#ed842b 54.2%,#eb8a2b 58.3%,#ea902b 62.5%,#e9962b 66.7%,#e89c2c 70.8%,#e7a22c 75.0%,#e6a82c 79.2%,#d9ac2f 83.3%,#c1ae36 87.5%,#abb13c 91.7%,#96b341 95.8%,#83b447 100.0%)"></i>
<i style="left:966px;width:6.5px;background:linear-gradient(#e84443 0.0%,#e84443 4.2%,#e94940 8.3%,#eb4e3c 12.5%,#ec5339 16.7%,#ed5835 20.8%,#ef5d32 25.0%,#f0612f 29.2%,#f2662b 33.3%,#f16c2a 37.5%,#f0722a 41.7%,#ef782a 45.8%,#ee7e2b 50.0%,#ed842b 54.2%,#eb8a2b 58.3%,#ea902b 62.5%,#e9962b 66.7%,#e89c2c 70.8%,#e7a12c 75.0%,#e6a72c 79.2%,#dbac2f 83.3%,#c3ae35 87.5%,#adb03b 91.7%,#98b241 95.8%,#85b446 100.0%)"></i>
<i style="left:972px;width:6.5px;background:linear-gradient(#e84443 0.0%,#e84443 4.2%,#e94840 8.3%,#eb4d3d 12.5%,#ec5239 16.7%,#ed5736 20.8%,#ef5c32 25.0%,#f0612f 29.2%,#f1662b 33.3%,#f16c2a 37.5%,#f0722a 41.7%,#ef772a 45.8%,#ee7d2b 50.0%,#ed832b 54.2%,#ec892b 58.3%,#ea8f2b 62.5%,#e9952b 66.7%,#e89b2c 70.8%,#e7a12c 75.0%,#e6a72c 79.2%,#deac2e 83.3%,#c6ae35 87.5%,#afb03b 91.7%,#9ab240 95.8%,#87b446 100.0%)"></i>
<i style="left:978px;width:6.5px;background:linear-gradient(#e84443 0.0%,#e84443 4.2%,#e94840 8.3%,#ea4d3d 12.5%,#ec5239 16.7%,#ed5736 20.8%,#ef5c32 25.0%,#f0612f 29.2%,#f1662c 33.3%,#f16b2a 37.5%,#f0712a 41.7%,#ef772a 45.8%,#ee7d2b 50.0%,#ed832b 54.2%,#ec892b 58.3%,#eb8f2b 62.5%,#e9952b 66.7%,#e89a2c 70.8%,#e7a02c 75.0%,#e6a62c 79.2%,#e0ab2d 83.3%,#c8ae34 87.5%,#b1b03a 91.7%,#9cb240 95.8%,#89b445 100.0%)"></i>
<i style="left:984px;width:6.5px;background:linear-gradient(#e84443 0.0%,#e84443 4.2%,#e94841 8.3%,#ea4d3d 12.5%,#ec513a 16.7%,#ed5636 20.8%,#ee5b33 25.0%,#f0602f 29.2%,#f1652c 33.3%,#f16b2a 37.5%,#f0712a 41.7%,#ef762a 45.8%,#ee7c2b 50.0%,#ed822b 54.2%,#ec882b 58.3%,#eb8e2b 62.5%,#e9942b 66.7%,#e89a2b 70.8%,#e7a02c 75.0%,#e6a62c 79.2%,#e2ab2d 83.3%,#caae33 87.5%,#b3b039 91.7%,#9eb23f 95.8%,#8ab445 100.0%)"></i>
<i style="left:990px;width:6.5px;background:linear-gradient(#e84443 0.0%,#e84443 4.2%,#e94741 8.3%,#ea4c3d 12.5%,#ec513a 16.7%,#ed5636 20.8%,#ee5b33 25.0%,#f06030 29.2%,#f1652c 33.3%,#f26a2a 37.5%,#f0702a 41.7%,#ef762a 45.8%,#ee7c2b 50.0%,#ed822b 54.2%,#ec882b 58.3%,#eb8e2b 62.5%,#ea932b 66.7%,#e8992b 70.8%,#e79f2c 75.0%,#e6a52c 79.2%,#e5ab2c 83.3%,#ccad33 87.5%,#b5b039 91.7%,#a0b23f 95.8%,#8cb444 100.0%)"></i>
<i style="left:996px;width:6.5px;background:linear-gradient(#e84443 0.0%,#e84443 4.2%,#e94741 8.3%,#ea4c3e 12.5%,#ec513a 16.7%,#ed5637 20.8%,#ee5b33 25.0%,#f06030 29.2%,#f1642c 33.3%,#f26a2a 37.5%,#f1702a 41.7%,#ef752a 45.8%,#ee7b2b 50.0%,#ed812b 54.2%,#ec872b 58.3%,#eb8d2b 62.5%,#ea932b 66.7%,#e9992b 70.8%,#e79f2c 75.0%,#e6a52c 79.2%,#e5aa2c 83.3%,#cfad32 87.5%,#b8af38 91.7%,#a2b13e 95.8%,#8eb344 100.0%)"></i>
<i style="left:1002px;width:6.5px;background:linear-gradient(#e84443 0.0%,#e84443 4.2%,#e94641 8.3%,#ea4b3e 12.5%,#eb503a 16.7%,#ed5537 20.8%,#ee5a34 25.0%,#f05f30 29.2%,#f1642d 33.3%,#f2692a 37.5%,#f16f2a 41.7%,#ef752a 45.8%,#ee7b2b 50.0%,#ed812b 54.2%,#ec872b 58.3%,#eb8d2b 62.5%,#ea922b 66.7%,#e9982b 70.8%,#e79e2c 75.0%,#e6a42c 79.2%,#e5aa2c 83.3%,#d1ad31 87.5%,#baaf38 91.7%,#a4b13e 95.8%,#90b343 100.0%)"></i>
<i style="left:1008px;width:6.5px;background:linear-gradient(#e84443 0.0%,#e84443 4.2%,#e94642 8.3%,#ea4b3e 12.5%,#eb503b 16.7%,#ed5537 20.8%,#ee5a34 25.0%,#ef5f30 29.2%,#f1642d 33.3%,#f2692a 37.5%,#f16f2a 41.7%,#f0742a 45.8%,#ee7a2b 50.0%,#ed802b 54.2%,#ec862b 58.3%,#eb8c2b 62.5%,#ea922b 66.7%,#e9982b 70.8%,#e89e2c 75.0%,#e6a32c 79.2%,#e5a92c 83.3%,#d3ad31 87.5%,#bcaf37 91.7%,#a6b13d 95.8%,#92b342 100.0%)"></i>
<i style="left:1014px;width:6.5px;background:linear-gradient(#e84443 0.0%,#e84443 4.2%,#e84642 8.3%,#ea4b3e 12.5%,#eb503b 16.7%,#ed5538 20.8%,#ee5934 25.0%,#ef5e31 29.2%,#f1632d 33.3%,#f2682a 37.5%,#f16e2a 41.7%,#f0742a 45.8%,#ef7a2b 50.0%,#ed802b 54.2%,#ec862b 58.3%,#eb8b2b 62.5%,#ea912b 66.7%,#e9972b 70.8%,#e89d2c 75.0%,#e7a32c 79.2%,#e5a92c 83.3%,#d6ac30 87.5%,#beaf37 91.7%,#a8b13c 95.8%,#94b342 100.0%)"></i>
<i style="left:1020px;width:6.5px;background:linear-gradient(#e84443 0.0%,#e84443 4.2%,#e84542 8.3%,#ea4a3f 12.5%,#eb4f3b 16.7%,#ec5438 20.8%,#ee5934 25.0%,#ef5e31 29.2%,#f1632e 33.3%,#f2682a 37.5%,#f16e2a 41.7%,#f0732a 45.8%,#ef792b 50.0%,#ed7f2b 54.2%,#ec852b 58.3%,#eb8b2b 62.5%,#ea912b 66.7%,#e9972b 70.8%,#e89d2c 75.0%,#e7a22c 79.2%,#e6a82c 83.3%,#d8ac30 87.5%,#c0af36 91.7%,#aab13c 95.8%,#96b341 100.0%)"></i>
<i style="left:1026px;width:6.5px;background:linear-gradient(#e84443 0.0%,#e84443 4.2%,#e84542 8.3%,#ea4a3f 12.5%,#eb4f3b 16.7%,#ec5438 20.8%,#ee5935 25.0%,#ef5e31 29.2%,#f0632e 33.3%,#f2672a 37.5%,#f16d2a 41.7%,#f0732a 45.8%,#ef792b 50.0%,#ee7f2b 54.2%,#ec852b 58.3%,#eb8a2b 62.5%,#ea902b 66.7%,#e9962b 70.8%,#e89c2c 75.0%,#e7a22c 79.2%,#e6a82c 83.3%,#daac2f 87.5%,#c3ae35 91.7%,#adb03b 95.8%,#98b241 100.0%)"></i>
<i style="left:1032px;width:6.5px;background:linear-gradient(#e84443 0.0%,#e84443 4.2%,#e84543 8.3%,#ea4a3f 12.5%,#eb4f3c 16.7%,#ec5338 20.8%,#ee5835 25.0%,#ef5d31 29.2%,#f0622e 33.3%,#f2672b 37.5%,#f16d2a 41.7%,#f0732a 45.8%,#ef782a 50.0%,#ee7e2b 54.2%,#ed842b 58.3%,#eb8a2b 62.5%,#ea902b 66.7%,#e9962b 70.8%,#e89b2c 75.0%,#e7a12c 79.2%,#e6a72c 83.3%,#ddac2e 87.5%,#c5ae35 91.7%,#afb03b 95.8%,#9ab240 100.0%)"></i>
<i style="left:1038px;width:6.5px;background:linear-gradient(#e84443 0.0%,#e84443 8.3%,#e9493f 12.5%,#eb4e3c 16.7%,#ec5339 20.8%,#ee5835 25.0%,#ef5d32 29.2%,#f0622e 33.3%,#f2672b 37.5%,#f16c2a 41.7%,#f0722a 45.8%,#ef782a 50.0%,#ee7e2b 54.2%,#ed842b 58.3%,#ec892b 62.5%,#ea8f2b 66.7%,#e9952b 70.8%,#e89b2c 75.0%,#e7a12c 79.2%,#e6a72c 83.3%,#dfac2e 87.5%,#c7ae34 91.7%,#b1b03a 95.8%,#9cb240 100.0%)"></i>
<i style="left:1044px;width:6.5px;background:linear-gradient(#e84443 0.0%,#e84443 8.3%,#e94940 12.5%,#eb4e3c 16.7%,#ec5339 20.8%,#ed5835 25.0%,#ef5c32 29.2%,#f0612f 33.3%,#f1662b 37.5%,#f16c2a 41.7%,#f0722a 45.8%,#ef772a 50.0%,#ee7d2b 54.2%,#ed832b 58.3%,#ec892b 62.5%,#ea8f2b 66.7%,#e9952b 70.8%,#e89a2c 75.0%,#e7a02c 79.2%,#e6a62c 83.3%,#e1ab2d 87.5%,#c9ae33 91.7%,#b3b03a 95.8%,#9eb23f 100.0%)"></i>
<i style="left:1050px;width:6.5px;background:linear-gradient(#e84443 0.0%,#e84443 8.3%,#e94940 12.5%,#eb4d3c 16.7%,#ec5239 20.8%,#ed5736 25.0%,#ef5c32 29.2%,#f0612f 33.3%,#f1662c 37.5%,#f16b2a 41.7%,#f0712a 45.8%,#ef772a 50.0%,#ee7d2b 54.2%,#ed822b 58.3%,#ec882b 62.5%,#eb8e2b 66.7%,#e9942b 70.8%,#e89a2b 75.0%,#e7a02c 79.2%,#e6a52c 83.3%,#e4ab2c 87.5%,#ccad33 91.7%,#b5b039 95.8%,#a0b23f 100.0%)"></i>
<i style="left:1056px;width:6.5px;background:linear-gradient(#e84443 0.0%,#e84443 8.3%,#e94840 12.5%,#eb4d3d 16.7%,#ec5239 20.8%,#ed5736 25.0%,#ef5c33 29.2%,#f0612f 33.3%,#f1652c 37.5%,#f16b2a 41.7%,#f0712a 45.8%,#ef762a 50.0%,#ee7c2b 54.2%,#ed822b 58.3%,#ec882b 62.5%,#eb8e2b 66.7%,#ea932b 70.8%,#e8992b 75.0%,#e79f2c 79.2%,#e6a52c 83.3%,#e5ab2c 87.5%,#cead32 91.7%,#b7af38 95.8%,#a2b13e 100.0%)"></i>
<i style="left:1062px;width:6.5px;background:linear-gradient(#e84443 0.0%,#e84443 8.3%,#e94840 12.5%,#ea4d3d 16.7%,#ec523a 20.8%,#ed5636 25.0%,#ee5b33 29.2%,#f0602f 33.3%,#f1652c 37.5%,#f26a2a 41.7%,#f0702a 45.8%,#ef762a 50.0%,#ee7c2b 54.2%,#ed812b 58.3%,#ec872b 62.5%,#eb8d2b 66.7%,#ea932b 70.8%,#e9992b 75.0%,#e79f2c 79.2%,#e6a42c 83.3%,#e5aa2c 87.5%,#d0ad32 91.7%,#baaf38 95.8%,#a4b13e 100.0%)"></i>
<i style="left:1068px;width:6.5px;background:linear-gradient(#e84443 0.0%,#e84443 8.3%,#e94741 12.5%,#ea4c3d 16.7%,#ec513a 20.8%,#ed5637 25.0%,#ee5b33 29.2%,#f06030 33.3%,#f1652c 37.5%,#f26a2a 41.7%,#f1702a 45.8%,#ef752a 50.0%,#ee7b2b 54.2%,#ed812b 58.3%,#ec872b 62.5%,#eb8d2b 66.7%,#ea922b 70.8%,#e9982b 75.0%,#e89e2c 79.2%,#e6a42c 83.3%,#e5aa2c 87.5%,#d3ad31 91.7%,#bcaf37 95.8%,#a6b13d 100.0%)"></i>
<i style="left:1074px;width:6.5px;background:linear-gradient(#e84443 0.0%,#e84443 8.3%,#e94741 12.5%,#ea4c3e 16.7%,#ec513a 20.8%,#ed5637 25.0%,#ee5a33 29.2%,#f05f30 33.3%,#f1642d 37.5%,#f2692a 41.7%,#f16f2a 45.8%,#f0752a 50.0%,#ee7b2b 54.2%,#ed802b 58.3%,#ec862b 62.5%,#eb8c2b 66.7%,#ea922b 70.8%,#e9982b 75.0%,#e89d2c 79.2%,#e7a32c 83.3%,#e5a92c 87.5%,#d5ad30 91.7%,#beaf37 95.8%,#a8b13c 100.0%)"></i>
<i style="left:1080px;width:6.5px;background:linear-gradient(#e84443 0.0%,#e84443 8.3%,#e94741 12.5%,#ea4c3e 16.7%,#eb503a 20.8%,#ed5537 25.0%,#ee5a34 29.2%,#ef5f30 33.3%,#f1642d 37.5%,#f2692a 41.7%,#f16f2a 45.8%,#f0742a 50.0%,#ee7a2b 54.2%,#ed802b 58.3%,#ec862b 62.5%,#eb8b2b 66.7%,#ea912b 70.8%,#e9972b 75.0%,#e89d2c 79.2%,#e7a32c 83.3%,#e6a82c 87.5%,#d8ac30 91.7%,#c0af36 95.8%,#abb13c 100.0%)"></i>
<i style="left:1086px;width:6.5px;background:linear-gradient(#e84443 0.0%,#e84443 8.3%,#e94641 12.5%,#ea4b3e 16.7%,#eb503b 20.8%,#ed5537 25.0%,#ee5a34 29.2%,#ef5f31 33.3%,#f1632d 37.5%,#f2682a 41.7%,#f16e2a 45.8%,#f0742a 50.0%,#ef7a2b 54.2%,#ed7f2b 58.3%,#ec852b 62.5%,#eb8b2b 66.7%,#ea912b 70.8%,#e9972b 75.0%,#e89c2c 79.2%,#e7a22c 83.3%,#e6a82c 87.5%,#daac2f 91.7%,#c3ae35 95.8%,#adb03b 100.0%)"></i>
<i style="left:1092px;width:6.5px;background:linear-gradient(#e84443 0.0%,#e84443 8.3%,#e94642 12.5%,#ea4b3e 16.7%,#eb503b 20.8%,#ed5438 25.0%,#ee5934 29.2%,#ef5e31 33.3%,#f1632d 37.5%,#f2682a 41.7%,#f16e2a 45.8%,#f0732a 50.0%,#ef792b 54.2%,#ee7f2b 58.3%,#ec852b 62.5%,#eb8a2b 66.7%,#ea902b 70.8%,#e9962b 75.0%,#e89c2c 79.2%,#e7a22c 83.3%,#e6a72c 87.5%,#dcac2e 91.7%,#c5ae35 95.8%,#afb03b 100.0%)"></i>
<i style="left:1098px;width:6.5px;background:linear-gradient(#e84443 0.0%,#e84443 8.3%,#e84642 12.5%,#ea4a3f 16.7%,#eb4f3b 20.8%,#ec5438 25.0%,#ee5934 29.2%,#ef5e31 33.3%,#f0632e 37.5%,#f2672a 41.7%,#f16d2a 45.8%,#f0732a 50.0%,#ef792a 54.2%,#ee7e2b 58.3%,#ed842b 62.5%,#eb8a2b 66.7%,#ea902b 70.8%,#e9952b 75.0%,#e89b2c 79.2%,#e7a12c 83.3%,#e6a72c 87.5%,#dfac2e 91.7%,#c7ae34 95.8%,#b1b03a 100.0%)"></i>
<i style="left:1104px;width:6.5px;background:linear-gradient(#e84443 0.0%,#e84443 8.3%,#e84542 12.5%,#ea4a3f 16.7%,#eb4f3b 20.8%,#ec5438 25.0%,#ee5935 29.2%,#ef5d31 33.3%,#f0622e 37.5%,#f2672b 41.7%,#f16d2a 45.8%,#f0722a 50.0%,#ef782a 54.2%,#ee7e2b 58.3%,#ed842b 62.5%,#ec892b 66.7%,#ea8f2b 70.8%,#e9952b 75.0%,#e89b2c 79.2%,#e7a02c 83.3%,#e6a62c 87.5%,#e1ab2d 91.7%,#c9ae33 95.8%,#b3b039 100.0%)"></i>
<i style="left:1110px;width:6.5px;background:linear-gradient(#e84443 0.0%,#e84443 8.3%,#e84542 12.5%,#ea4a3f 16.7%,#eb4e3c 20.8%,#ec5338 25.0%,#ee5835 29.2%,#ef5d32 33.3%,#f0622e 37.5%,#f2672b 41.7%,#f16c2a 45.8%,#f0722a 50.0%,#ef782a 54.2%,#ee7d2b 58.3%,#ed832b 62.5%,#ec892b 66.7%,#eb8f2b 70.8%,#e9942b 75.0%,#e89a2b 79.2%,#e7a02c 83.3%,#e6a62c 87.5%,#e4ab2c 91.7%,#ccad33 95.8%,#b5b039 100.0%)"></i>
<i style="left:1116px;width:6.5px;background:linear-gradient(#e84443 0.0%,#e84443 12.5%,#e9493f 16.7%,#eb4e3c 20.8%,#ec5339 25.0%,#ed5835 29.2%,#ef5d32 33.3%,#f0612f 37.5%,#f1662b 41.7%,#f16c2a 45.8%,#f0712a 50.0%,#ef772a 54.2%,#ee7d2b 58.3%,#ed832b 62.5%,#ec882b 66.7%,#eb8e2b 70.8%,#ea942b 75.0%,#e89a2b 79.2%,#e79f2c 83.3%,#e6a52c 87.5%,#e5ab2c 91.7%,#cead32 95.8%,#b8af38 100.0%)"></i>
<i style="left:1122px;width:6.5px;background:linear-gradient(#e84443 0.0%,#e84443 12.5%,#e94940 16.7%,#eb4e3c 20.8%,#ec5339 25.0%,#ed5736 29.2%,#ef5c32 33.3%,#f0612f 37.5%,#f1662c 41.7%,#f16b2a 45.8%,#f0712a 50.0%,#ef772a 54.2%,#ee7c2b 58.3%,#ed822b 62.5%,#ec882b 66.7%,#eb8d2b 70.8%,#ea932b 75.0%,#e8992b 79.2%,#e79f2c 83.3%,#e6a42c 87.5%,#e5aa2c 91.7%,#d1ad32 95.8%,#baaf38 100.0%)"></i>
<i style="left:1128px;width:6.5px;background:linear-gradient(#e84443 0.0%,#e84443 12.5%,#e94940 16.7%,#eb4d3d 20.8%,#ec5239 25.0%,#ed5736 29.2%,#ef5c33 33.3%,#f0612f 37.5%,#f1652c 41.7%,#f16b2a 45.8%,#f0702a 50.0%,#ef762a 54.2%,#ee7c2b 58.3%,#ed812b 62.5%,#ec872b 66.7%,#eb8d2b 70.8%,#ea932b 75.0%,#e9982b 79.2%,#e79e2c 83.3%,#e6a42c 87.5%,#e5aa2c 91.7%,#d3ad31 95.8%,#bcaf37 100.0%)"></i>
<i style="left:1134px;width:6.5px;background:linear-gradient(#e84443 0.0%,#e84443 12.5%,#e94840 16.7%,#ea4d3d 20.8%,#ec5239 25.0%,#ed5736 29.2%,#ee5b33 33.3%,#f0602f 37.5%,#f1652c 41.7%,#f26a2a 45.8%,#f0702a 50.0%,#ef762a 54.2%,#ee7b2b 58.3%,#ed812b 62.5%,#ec872b 66.7%,#eb8c2b 70.8%,#ea922b 75.0%,#e9982b 79.2%,#e89e2c 83.3%,#e6a32c 87.5%,#e5a92c 91.7%,#d5ad30 95.8%,#beaf36 100.0%)"></i>
<i style="left:1140px;width:6.5px;background:linear-gradient(#e84443 0.0%,#e84443 12.5%,#e94840 16.7%,#ea4d3d 20.8%,#ec513a 25.0%,#ed5636 29.2%,#ee5b33 33.3%,#f06030 37.5%,#f1652c 41.7%,#f26a2a 45.8%,#f16f2a 50.0%,#ef752a 54.2%,#ee7b2b 58.3%,#ed802b 62.5%,#ec862b 66.7%,#eb8c2b 70.8%,#ea922b 75.0%,#e9972b 79.2%,#e89d2c 83.3%,#e7a32c 87.5%,#e5a82c 91.7%,#d8ac30 95.8%,#c1ae36 100.0%)"></i>
<i style="left:1146px;width:6.5px;background:linear-gradient(#e84443 0.0%,#e84443 12.5%,#e94741 16.7%,#ea4c3d 20.8%,#ec513a 25.0%,#ed5637 29.2%,#ee5b33 33.3%,#f05f30 37.5%,#f1642d 41.7%,#f2692a 45.8%,#f16f2a 50.0%,#f0752a 54.2%,#ee7a2b 58.3%,#ed802b 62.5%,#ec862b 66.7%,#eb8b2b 70.8%,#ea912b 75.0%,#e9972b 79.2%,#e89c2c 83.3%,#e7a22c 87.5%,#e6a82c 91.7%,#daac2f 95.8%,#c3ae35 100.0%)"></i>
<i style="left:1152px;width:6.5px;background:linear-gradient(#e84443 0.0%,#e84443 12.5%,#e94741 16.7%,#ea4c3e 20.8%,#ec513a 25.0%,#ed5537 29.2%,#ee5a34 33.3%,#ef5f30 37.5%,#f1642d 41.7%,#f2692a 45.8%,#f16e2a 50.0%,#f0742a 54.2%,#ef7a2b 58.3%,#ed7f2b 62.5%,#ec852b 66.7%,#eb8b2b 70.8%,#ea902b 75.0%,#e9962b 79.2%,#e89c2c 83.3%,#e7a22c 87.5%,#e6a72c 91.7%,#ddac2e 95.8%,#c5ae35 100.0%)"></i>
<i style="left:1158px;width:6.5px;background:linear-gradient(#e84443 0.0%,#e84443 12.5%,#e94741 16.7%,#ea4b3e 20.8%,#eb503b 25.0%,#ed5537 29.2%,#ee5a34 33.3%,#ef5f31 37.5%,#f1632d 41.7%,#f2682a 45.8%,#f16e2a 50.0%,#f0732a 54.2%,#ef792b 58.3%,#ee7f2b 62.5%,#ec852b 66.7%,#eb8a2b 70.8%,#ea902b 75.0%,#e9962b 79.2%,#e89b2c 83.3%,#e7a12c 87.5%,#e6a72c 91.7%,#dfac2e 95.8%,#c8ae34 100.0%)"></i>
<i style="left:1164px;width:6.5px;background:linear-gradient(#e84443 0.0%,#e84443 12.5%,#e94641 16.7%,#ea4b3e 20.8%,#eb503b 25.0%,#ed5537 29.2%,#ee5934 33.3%,#ef5e31 37.5%,#f1632e 41.7%,#f2682a 45.8%,#f16d2a 50.0%,#f0732a 54.2%,#ef792a 58.3%,#ee7e2b 62.5%,#ed842b 66.7%,#eb8a2b 70.8%,#ea8f2b 75.0%,#e9952b 79.2%,#e89b2c 83.3%,#e7a02c 87.5%,#e6a62c 91.7%,#e1ab2d 95.8%,#caae33 100.0%)"></i>
<i style="left:1170px;width:6.5px;background:linear-gradient(#e84443 0.0%,#e84443 12.5%,#e94642 16.7%,#ea4b3e 20.8%,#eb4f3b 25.0%,#ed5438 29.2%,#ee5934 33.3%,#ef5e31 37.5%,#f0632e 41.7%,#f2672b 45.8%,#f16d2a 50.0%,#f0722a 54.2%,#ef782a 58.3%,#ee7e2b 62.5%,#ed842b 66.7%,#ec892b 70.8%,#ea8f2b 75.0%,#e9952b 79.2%,#e89a2b 83.3%,#e7a02c 87.5%,#e6a62c 91.7%,#e4ab2c 95.8%,#ccad33 100.0%)"></i>
<i style="left:1176px;width:6.5px;background:linear-gradient(#e84443 0.0%,#e84443 12.5%,#e84642 16.7%,#ea4a3f 20.8%,#eb4f3b 25.0%,#ec5438 29.2%,#ee5935 33.3%,#ef5d31 37.5%,#f0622e 41.7%,#f2672b 45.8%,#f16c2a 50.0%,#f0722a 54.2%,#ef782a 58.3%,#ee7d2b 62.5%,#ed832b 66.7%,#ec892b 70.8%,#eb8e2b 75.0%,#e9942b 79.2%,#e89a2b 83.3%,#e79f2c 87.5%,#e6a52c 91.7%,#e5ab2c 95.8%,#cfad32 100.0%)"></i>
<i style="left:1182px;width:6.5px;background:linear-gradient(#e84443 0.0%,#e84443 12.5%,#e84542 16.7%,#ea4a3f 20.8%,#eb4f3c 25.0%,#ec5338 29.2%,#ee5835 33.3%,#ef5d32 37.5%,#f0622e 41.7%,#f2662b 45.8%,#f16c2a 50.0%,#f0712a 54.2%,#ef772a 58.3%,#ee7d2b 62.5%,#ed822b 66.7%,#ec882b 70.8%,#eb8e2b 75.0%,#ea932b 79.2%,#e8992b 83.3%,#e79f2c 87.5%,#e6a42c 91.7%,#e5aa2c 95.8%,#d1ad31 100.0%)"></i>
<i style="left:1188px;width:6.5px;background:linear-gradient(#e84443 0.0%,#e84443 12.5%,#e84542 16.7%,#ea4a3f 20.8%,#eb4e3c 25.0%,#ec5339 29.2%,#ed5835 33.3%,#ef5d32 37.5%,#f0612f 41.7%,#f1662b 45.8%,#f16b2a 50.0%,#f0712a 54.2%,#ef772a 58.3%,#ee7c2b 62.5%,#ed822b 66.7%,#ec882b 70.8%,#eb8d2b 75.0%,#ea932b 79.2%,#e9992b 83.3%,#e79e2c 87.5%,#e6a42c 91.7%,#e5a92c 95.8%,#d4ad31 100.0%)"></i>
<i style="left:1194px;width:6.5px;background:linear-gradient(#e84443 0.0%,#e84443 16.7%,#e9493f 20.8%,#eb4e3c 25.0%,#ec5339 29.2%,#ed5736 33.3%,#ef5c32 37.5%,#f0612f 41.7%,#f1662c 45.8%,#f16b2a 50.0%,#f0702a 54.2%,#ef762a 58.3%,#ee7c2b 62.5%,#ed812b 66.7%,#ec872b 70.8%,#eb8d2b 75.0%,#ea922b 79.2%,#e9982b 83.3%,#e89e2c 87.5%,#e7a32c 91.7%,#e5a92c 95.8%,#d6ac30 100.0%)"></i>
<i style="left:1200px;width:6.5px;background:linear-gradient(#e84443 0.0%,#e84443 16.7%,#e94940 20.8%,#eb4e3c 25.0%,#ec5239 29.2%,#ed5736 33.3%,#ef5c33 37.5%,#f0602f 41.7%,#f1652c 45.8%,#f26a2a 50.0%,#f0702a 54.2%,#ef762a 58.3%,#ee7b2b 62.5%,#ed812b 66.7%,#ec862b 70.8%,#eb8c2b 75.0%,#ea922b 79.2%,#e9972b 83.3%,#e89d2c 87.5%,#e7a32c 91.7%,#e6a82c 95.8%,#d8ac2f 100.0%)"></i>
<i style="left:1206px;width:6.5px;background:linear-gradient(#e84443 0.0%,#e84443 16.7%,#e94840 20.8%,#eb4d3d 25.0%,#ec5239 29.2%,#ed5736 33.3%,#ee5b33 37.5%,#f06030 41.7%,#f1652c 45.8%,#f26a2a 50.0%,#f16f2a 54.2%,#ef752a 58.3%,#ee7b2b 62.5%,#ed802b 66.7%,#ec862b 70.8%,#eb8c2b 75.0%,#ea912b 79.2%,#e9972b 83.3%,#e89c2c 87.5%,#e7a22c 91.7%,#e6a82c 95.8%,#dbac2f 100.0%)"></i>
<i style="left:1212px;width:6.5px;background:linear-gradient(#e84443 0.0%,#e84443 16.7%,#e94840 20.8%,#ea4d3d 25.0%,#ec513a 29.2%,#ed5636 33.3%,#ee5b33 37.5%,#f06030 41.7%,#f1642d 45.8%,#f2692a 50.0%,#f16f2a 54.2%,#f0752a 58.3%,#ee7a2b 62.5%,#ed802b 66.7%,#ec852b 70.8%,#eb8b2b 75.0%,#ea912b 79.2%,#e9962b 83.3%,#e89c2c 87.5%,#e7a22c 91.7%,#e6a72c 95.8%,#ddac2e 100.0%)"></i>
<i style="left:1218px;width:6.5px;background:linear-gradient(#e84443 0.0%,#e84443 16.7%,#e94840 20.8%,#ea4c3d 25.0%,#ec513a 29.2%,#ed5637 33.3%,#ee5b33 37.5%,#f05f30 41.7%,#f1642d 45.8%,#f2692a 50.0%,#f16e2a 54.2%,#f0742a 58.3%,#ef7a2b 62.5%,#ed7f2b 66.7%,#ec852b 70.8%,#eb8a2b 75.0%,#ea902b 79.2%,#e9962b 83.3%,#e89b2c 87.5%,#e7a12c 91.7%,#e6a72c 95.8%,#e0ab2d 100.0%)"></i>
<i style="left:1224px;width:6.5px;background:linear-gradient(#e84443 0.0%,#e84443 16.7%,#e94741 20.8%,#ea4c3d 25.0%,#ec513a 29.2%,#ed5537 33.3%,#ee5a34 37.5%,#ef5f30 41.7%,#f1642d 45.8%,#f2682a 50.0%,#f16e2a 54.2%,#f0732a 58.3%,#ef792b 62.5%,#ee7f2b 66.7%,#ed842b 70.8%,#eb8a2b 75.0%,#ea902b 79.2%,#e9952b 83.3%,#e89b2c 87.5%,#e7a02c 91.7%,#e6a62c 95.8%,#e2ab2d 100.0%)"></i>
<i style="left:1230px;width:6.5px;background:linear-gradient(#e84443 0.0%,#e84443 16.7%,#e94741 20.8%,#ea4c3e 25.0%,#eb503a 29.2%,#ed5537 33.3%,#ee5a34 37.5%,#ef5e31 41.7%,#f1632d 45.8%,#f2682a 50.0%,#f16d2a 54.2%,#f0732a 58.3%,#ef792a 62.5%,#ee7e2b 66.7%,#ed842b 70.8%,#ec892b 75.0%,#ea8f2b 79.2%,#e9952b 83.3%,#e89a2b 87.5%,#e7a02c 91.7%,#e6a52c 95.8%,#e5ab2c 100.0%)"></i>
<i style="left:1236px;width:6.5px;background:linear-gradient(#e84443 0.0%,#e84443 16.7%,#e94741 20.8%,#ea4b3e 25.0%,#eb503b 29.2%,#ed5537 33.3%,#ee5934 37.5%,#ef5e31 41.7%,#f1632e 45.8%,#f2672a 50.0%,#f16d2a 54.2%,#f0722a 58.3%,#ef782a 62.5%,#ee7e2b 66.7%,#ed832b 70.8%,#ec892b 75.0%,#eb8e2b 79.2%,#e9942b 83.3%,#e89a2b 87.5%,#e79f2c 91.7%,#e6a52c 95.8%,#e5aa2c 100.0%)"></i>
<i style="left:1242px;width:6.5px;background:linear-gradient(#e84443 0.0%,#e84443 16.7%,#e94641 20.8%,#ea4b3e 25.0%,#eb503b 29.2%,#ed5438 33.3%,#ee5934 37.5%,#ef5e31 41.7%,#f0622e 45.8%,#f2672b 50.0%,#f16c2a 54.2%,#f0722a 58.3%,#ef782a 62.5%,#ee7d2b 66.7%,#ed832b 70.8%,#ec882b 75.0%,#eb8e2b 79.2%,#ea932b 83.3%,#e8992b 87.5%,#e79f2c 91.7%,#e6a42c 95.8%,#e5aa2c 100.0%)"></i>
<i style="left:1248px;width:6.5px;background:linear-gradient(#e84443 0.0%,#e84443 16.7%,#e84642 20.8%,#ea4a3f 25.0%,#eb4f3b 29.2%,#ec5438 33.3%,#ee5935 37.5%,#ef5d32 41.7%,#f0622e 45.8%,#f2672b 50.0%,#f16c2a 54.2%,#f0712a 58.3%,#ef772a 62.5%,#ee7d2b 66.7%,#ed822b 70.8%,#ec882b 75.0%,#eb8d2b 79.2%,#ea932b 83.3%,#e9992b 87.5%,#e89e2c 91.7%,#e6a42c 95.8%,#e5a92c 100.0%)"></i>
<i style="left:1254px;width:6.5px;background:linear-gradient(#e84443 0.0%,#e84443 16.7%,#e84542 20.8%,#ea4a3f 25.0%,#eb4f3c 29.2%,#ec5338 33.3%,#ee5835 37.5%,#ef5d32 41.7%,#f0612f 45.8%,#f1662b 50.0%,#f16b2a 54.2%,#f0712a 58.3%,#ef762a 62.5%,#ee7c2b 66.7%,#ed822b 70.8%,#ec872b 75.0%,#eb8d2b 79.2%,#ea922b 83.3%,#e9982b 87.5%,#e89e2c 91.7%,#e7a32c 95.8%,#e5a92c 100.0%)"></i>
<i style="left:1260px;width:6.5px;background:linear-gradient(#e84443 0.0%,#e84443 16.7%,#e84542 20.8%,#ea4a3f 25.0%,#eb4e3c 29.2%,#ec5339 33.3%,#ed5835 37.5%,#ef5c32 41.7%,#f0612f 45.8%,#f1662c 50.0%,#f16b2a 54.2%,#f0702a 58.3%,#ef762a 62.5%,#ee7c2b 66.7%,#ed812b 70.8%,#ec872b 75.0%,#eb8c2b 79.2%,#ea922b 83.3%,#e9972b 87.5%,#e89d2c 91.7%,#e7a22c 95.8%,#e6a82c 100.0%)"></i>
<i style="left:1266px;width:6.5px;background:linear-gradient(#e84443 0.0%,#e84443 16.7%,#e84543 20.8%,#e9493f 25.0%,#eb4e3c 29.2%,#ec5339 33.3%,#ed5736 37.5%,#ef5c32 41.7%,#f0612f 45.8%,#f1652c 50.0%,#f26a2a 54.2%,#f0702a 58.3%,#ef752a 62.5%,#ee7b2b 66.7%,#ed812b 70.8%,#ec862b 75.0%,#eb8c2b 79.2%,#ea912b 83.3%,#e9972b 87.5%,#e89c2c 91.7%,#e7a22c 95.8%,#e6a72c 100.0%)"></i>
<i style="left:1272px;width:6.5px;background:linear-gradient(#e84443 0.0%,#e84443 20.8%,#e94940 25.0%,#eb4e3c 29.2%,#ec5239 33.3%,#ed5736 37.5%,#ef5c33 41.7%,#f0602f 45.8%,#f1652c 50.0%,#f26a2a 54.2%,#f16f2a 58.3%,#ef752a 62.5%,#ee7a2b 66.7%,#ed802b 70.8%,#ec862b 75.0%,#eb8b2b 79.2%,#ea912b 83.3%,#e9962b 87.5%,#e89c2c 91.7%,#e7a12c 95.8%,#e6a72c 100.0%)"></i>
<i style="left:1278px;width:6.5px;background:linear-gradient(#e84443 0.0%,#e84443 20.8%,#e94940 25.0%,#eb4d3d 29.2%,#ec5239 33.3%,#ed5636 37.5%,#ee5b33 41.7%,#f06030 45.8%,#f1642c 50.0%,#f2692a 54.2%,#f16f2a 58.3%,#f0742a 62.5%,#ef7a2b 66.7%,#ed7f2b 70.8%,#ec852b 75.0%,#eb8b2b 79.2%,#ea902b 83.3%,#e9962b 87.5%,#e89b2c 91.7%,#e7a12c 95.8%,#e6a62c 100.0%)"></i>
<i style="left:1284px;width:6.5px;background:linear-gradient(#e84443 0.0%,#e84443 20.8%,#e94840 25.0%,#ea4d3d 29.2%,#ec513a 33.3%,#ed5636 37.5%,#ee5b33 41.7%,#f05f30 45.8%,#f1642d 50.0%,#f2692a 54.2%,#f16e2a 58.3%,#f0742a 62.5%,#ef792b 66.7%,#ee7f2b 70.8%,#ec842b 75.0%,#eb8a2b 79.2%,#ea902b 83.3%,#e9952b 87.5%,#e89b2c 91.7%,#e7a02c 95.8%,#e6a62c 100.0%)"></i>
<i style="left:1290px;width:6.5px;background:linear-gradient(#e84443 0.0%,#e84443 20.8%,#e94840 25.0%,#ea4c3d 29.2%,#ec513a 33.3%,#ed5637 37.5%,#ee5a33 41.7%,#ef5f30 45.8%,#f1642d 50.0%,#f2682a 54.2%,#f16e2a 58.3%,#f0732a 62.5%,#ef792b 66.7%,#ee7e2b 70.8%,#ed842b 75.0%,#ec892b 79.2%,#ea8f2b 83.3%,#e9952b 87.5%,#e89a2b 91.7%,#e7a02c 95.8%,#e6a52c 100.0%)"></i>
<i style="left:1296px;width:6.5px;background:linear-gradient(#e84443 0.0%,#e84443 20.8%,#e94741 25.0%,#ea4c3d 29.2%,#ec513a 33.3%,#ed5537 37.5%,#ee5a34 41.7%,#ef5f31 45.8%,#f1632d 50.0%,#f2682a 54.2%,#f16d2a 58.3%,#f0732a 62.5%,#ef782a 66.7%,#ee7e2b 70.8%,#ed832b 75.0%,#ec892b 79.2%,#eb8e2b 83.3%,#e9942b 87.5%,#e8992b 91.7%,#e79f2c 95.8%,#e6a52c 100.0%)"></i>
<i style="left:1302px;width:6.5px;background:linear-gradient(#e84443 0.0%,#e84443 20.8%,#e94741 25.0%,#ea4c3e 29.2%,#eb503a 33.3%,#ed5537 37.5%,#ee5a34 41.7%,#ef5e31 45.8%,#f1632e 50.0%,#f2672a 54.2%,#f16d2a 58.3%,#f0722a 62.5%,#ef782a 66.7%,#ee7d2b 70.8%,#ed832b 75.0%,#ec882b 79.2%,#eb8e2b 83.3%,#ea932b 87.5%,#e9992b 91.7%,#e79e2c 95.8%,#e6a42c 100.0%)"></i>
<i style="left:1308px;width:6.5px;background:linear-gradient(#e84443 0.0%,#e84443 20.8%,#e94741 25.0%,#ea4b3e 29.2%,#eb503b 33.3%,#ed5438 37.5%,#ee5934 41.7%,#ef5e31 45.8%,#f0622e 50.0%,#f2672b 54.2%,#f16c2a 58.3%,#f0722a 62.5%,#ef772a 66.7%,#ee7d2b 70.8%,#ed822b 75.0%,#ec882b 79.2%,#eb8d2b 83.3%,#ea932b 87.5%,#e9982b 91.7%,#e89e2c 95.8%,#e6a32c 100.0%)"></i>
<i style="left:1314px;width:6.5px;background:linear-gradient(#e84443 0.0%,#e84443 20.8%,#e94641 25.0%,#ea4b3e 29.2%,#eb4f3b 33.3%,#ec5438 37.5%,#ee5935 41.7%,#ef5d31 45.8%,#f0622e 50.0%,#f2672b 54.2%,#f16c2a 58.3%,#f0712a 62.5%,#ef772a 66.7%,#ee7c2b 70.8%,#ed822b 75.0%,#ec872b 79.2%,#eb8d2b 83.3%,#ea922b 87.5%,#e9982b 91.7%,#e89d2c 95.8%,#e7a32c 100.0%)"></i>
<i style="left:1320px;width:6.5px;background:linear-gradient(#e84443 0.0%,#e84443 20.8%,#e94642 25.0%,#ea4a3f 29.2%,#eb4f3b 33.3%,#ec5438 37.5%,#ee5835 41.7%,#ef5d32 45.8%,#f0612f 50.0%,#f1662b 54.2%,#f16b2a 58.3%,#f0712a 62.5%,#ef762a 66.7%,#ee7c2b 70.8%,#ed812b 75.0%,#ec872b 79.2%,#eb8c2b 83.3%,#ea922b 87.5%,#e9972b 91.7%,#e89d2c 95.8%,#e7a22c 100.0%)"></i>
<i style="left:1326px;width:6.5px;background:linear-gradient(#e84443 0.0%,#e84443 20.8%,#e84542 25.0%,#ea4a3f 29.2%,#eb4f3c 33.3%,#ec5338 37.5%,#ee5835 41.7%,#ef5c32 45.8%,#f0612f 50.0%,#f1662c 54.2%,#f16b2a 58.3%,#f0702a 62.5%,#ef762a 66.7%,#ee7b2b 70.8%,#ed812b 75.0%,#ec862b 79.2%,#eb8c2b 83.3%,#ea912b 87.5%,#e9972b 91.7%,#e89c2c 95.8%,#e7a22c 100.0%)"></i>
<i style="left:1332px;width:6.5px;background:linear-gradient(#e84443 0.0%,#e84443 20.8%,#e84542 25.0%,#ea4a3f 29.2%,#eb4e3c 33.3%,#ec5339 37.5%,#ed5735 41.7%,#ef5c32 45.8%,#f0612f 50.0%,#f1652c 54.2%,#f26a2a 58.3%,#f1702a 62.5%,#ef752a 66.7%,#ee7b2b 70.8%,#ed802b 75.0%,#ec862b 79.2%,#eb8b2b 83.3%,#ea912b 87.5%,#e9962b 91.7%,#e89c2c 95.8%,#e7a12c 100.0%)"></i>
<i style="left:1338px;width:6.5px;background:linear-gradient(#e84443 0.0%,#e84443 20.8%,#e84543 25.0%,#e9493f 29.2%,#eb4e3c 33.3%,#ec5239 37.5%,#ed5736 41.7%,#ef5c33 45.8%,#f0602f 50.0%,#f1652c 54.2%,#f26a2a 58.3%,#f16f2a 62.5%,#f0752a 66.7%,#ee7a2b 70.8%,#ed802b 75.0%,#ec852b 79.2%,#eb8b2b 83.3%,#ea902b 87.5%,#e9952b 91.7%,#e89b2c 95.8%,#e7a02c 100.0%)"></i>
<i style="left:1344px;width:6.5px;background:linear-gradient(#e84443 0.0%,#e84443 25.0%,#e94940 29.2%,#eb4d3c 33.3%,#ec5239 37.5%,#ed5736 41.7%,#ee5b33 45.8%,#f06030 50.0%,#f1642d 54.2%,#f2692a 58.3%,#f16f2a 62.5%,#f0742a 66.7%,#ef7a2b 70.8%,#ee7f2b 75.0%,#ec842b 79.2%,#eb8a2b 83.3%,#ea8f2b 87.5%,#e9952b 91.7%,#e89a2c 95.8%,#e7a02c 100.0%)"></i>
<i style="left:1350px;width:6.5px;background:linear-gradient(#e84443 0.0%,#e84443 25.0%,#e94940 29.2%,#eb4d3d 33.3%,#ec523a 37.5%,#ed5636 41.7%,#ee5b33 45.8%,#f05f30 50.0%,#f1642d 54.2%,#f2692a 58.3%,#f16e2a 62.5%,#f0742a 66.7%,#ef792b 70.8%,#ee7e2b 75.0%,#ed842b 79.2%,#ec892b 83.3%,#ea8f2b 87.5%,#e9942b 91.7%,#e89a2b 95.8%,#e79f2c 100.0%)"></i>
<i style="left:1356px;width:6.5px;background:linear-gradient(#e84443 0.0%,#e84443 25.0%,#e94840 29.2%,#ea4d3d 33.3%,#ec513a 37.5%,#ed5637 41.7%,#ee5a33 45.8%,#ef5f30 50.0%,#f1642d 54.2%,#f2682a 58.3%,#f16e2a 62.5%,#f0732a 66.7%,#ef782a 70.8%,#ee7e2b 75.0%,#ed832b 79.2%,#ec892b 83.3%,#eb8e2b 87.5%,#ea942b 91.7%,#e8992b 95.8%,#e79f2c 100.0%)"></i>
<i style="left:1362px;width:6.5px;background:linear-gradient(#e84443 0.0%,#e84443 25.0%,#e94840 29.2%,#ea4c3d 33.3%,#ec513a 37.5%,#ed5537 41.7%,#ee5a34 45.8%,#ef5f31 50.0%,#f1632d 54.2%,#f2682a 58.3%,#f16d2a 62.5%,#f0722a 66.7%,#ef782a 70.8%,#ee7d2b 75.0%,#ed832b 79.2%,#ec882b 83.3%,#eb8e2b 87.5%,#ea932b 91.7%,#e9992b 95.8%,#e89e2c 100.0%)"></i>
<i style="left:1368px;width:6.5px;background:linear-gradient(#e84443 0.0%,#e84443 25.0%,#e94741 29.2%,#ea4c3e 33.3%,#eb503a 37.5%,#ed5537 41.7%,#ee5a34 45.8%,#ef5e31 50.0%,#f1632e 54.2%,#f2672b 58.3%,#f16d2a 62.5%,#f0722a 66.7%,#ef772a 70.8%,#ee7d2b 75.0%,#ed822b 79.2%,#ec882b 83.3%,#eb8d2b 87.5%,#ea932b 91.7%,#e9982b 95.8%,#e89d2c 100.0%)"></i>
<i style="left:1374px;width:6.5px;background:linear-gradient(#e84443 0.0%,#e84443 25.0%,#e94741 29.2%,#ea4c3e 33.3%,#eb503b 37.5%,#ed5537 41.7%,#ee5934 45.8%,#ef5e31 50.0%,#f0622e 54.2%,#f2672b 58.3%,#f16c2a 62.5%,#f0712a 66.7%,#ef772a 70.8%,#ee7c2b 75.0%,#ed822b 79.2%,#ec872b 83.3%,#eb8d2b 87.5%,#ea922b 91.7%,#e9972b 95.8%,#e89d2c 100.0%)"></i>
<i style="left:1380px;width:6.5px;background:linear-gradient(#e84443 0.0%,#e84443 25.0%,#e94741 29.2%,#ea4b3e 33.3%,#eb503b 37.5%,#ec5438 41.7%,#ee5935 45.8%,#ef5d31 50.0%,#f0622e 54.2%,#f2662b 58.3%,#f16b2a 62.5%,#f0712a 66.7%,#ef762a 70.8%,#ee7c2b 75.0%,#ed812b 79.2%,#ec872b 83.3%,#eb8c2b 87.5%,#ea912b 91.7%,#e9972b 95.8%,#e89c2c 100.0%)"></i>
<i style="left:1386px;width:6.5px;background:linear-gradient(#e84443 0.0%,#e84443 25.0%,#e94641 29.2%,#ea4b3e 33.3%,#eb4f3b 37.5%,#ec5438 41.7%,#ee5835 45.8%,#ef5d32 50.0%,#f0612f 54.2%,#f1662b 58.3%,#f16b2a 62.5%,#f0702a 66.7%,#ef762a 70.8%,#ee7b2b 75.0%,#ed812b 79.2%,#ec862b 83.3%,#eb8b2b 87.5%,#ea912b 91.7%,#e9962b 95.8%,#e89c2c 100.0%)"></i>
<i style="left:1392px;width:6.5px;background:linear-gradient(#e84443 0.0%,#e84443 25.0%,#e84642 29.2%,#ea4a3f 33.3%,#eb4f3b 37.5%,#ec5338 41.7%,#ee5835 45.8%,#ef5c32 50.0%,#f0612f 54.2%,#f1662c 58.3%,#f26a2a 62.5%,#f0702a 66.7%,#ef752a 70.8%,#ee7b2b 75.0%,#ed802b 79.2%,#ec852b 83.3%,#eb8b2b 87.5%,#ea902b 91.7%,#e9962b 95.8%,#e89b2c 100.0%)"></i>
<i style="left:1398px;width:6.5px;background:linear-gradient(#e84443 0.0%,#e84443 25.0%,#e84542 29.2%,#ea4a3f 33.3%,#eb4e3c 37.5%,#ec5339 41.7%,#ed5735 45.8%,#ef5c32 50.0%,#f0612f 54.2%,#f1652c 58.3%,#f26a2a 62.5%,#f16f2a 66.7%,#f0752a 70.8%,#ee7a2b 75.0%,#ed7f2b 79.2%,#ec852b 83.3%,#eb8a2b 87.5%,#ea902b 91.7%,#e9952b 95.8%,#e89a2c 100.0%)"></i>
<i style="left:1404px;width:6.5px;background:linear-gradient(#e84443 0.0%,#e84443 25.0%,#e84542 29.2%,#ea4a3f 33.3%,#eb4e3c 37.5%,#ec5339 41.7%,#ed5736 45.8%,#ef5c33 50.0%,#f0602f 54.2%,#f1652c 58.3%,#f2692a 62.5%,#f16f2a 66.7%,#f0742a 70.8%,#ef7a2b 75.0%,#ee7f2b 79.2%,#ed842b 83.3%,#eb8a2b 87.5%,#ea8f2b 91.7%,#e9952b 95.8%,#e89a2b 100.0%)"></i>
<i style="left:1410px;width:6.5px;background:linear-gradient(#e84443 0.0%,#e84443 25.0%,#e84543 29.2%,#e9493f 33.3%,#eb4e3c 37.5%,#ec5239 41.7%,#ed5736 45.8%,#ee5b33 50.0%,#f06030 54.2%,#f1642d 58.3%,#f2692a 62.5%,#f16e2a 66.7%,#f0742a 70.8%,#ef792b 75.0%,#ee7e2b 79.2%,#ed842b 83.3%,#ec892b 87.5%,#eb8f2b 91.7%,#e9942b 95.8%,#e8992b 100.0%)"></i>
<i style="left:1416px;width:6.5px;background:linear-gradient(#e84443 0.0%,#e84443 29.2%,#e94940 33.3%,#eb4d3d 37.5%,#ec5239 41.7%,#ed5636 45.8%,#ee5b33 50.0%,#f05f30 54.2%,#f1642d 58.3%,#f2682a 62.5%,#f16e2a 66.7%,#f0732a 70.8%,#ef782a 75.0%,#ee7e2b 79.2%,#ed832b 83.3%,#ec892b 87.5%,#eb8e2b 91.7%,#ea932b 95.8%,#e9992b 100.0%)"></i>
<i style="left:1422px;width:6.5px;background:linear-gradient(#e84443 0.0%,#e84443 29.2%,#e94840 33.3%,#ea4d3d 37.5%,#ec513a 41.7%,#ed5637 45.8%,#ee5a33 50.0%,#ef5f30 54.2%,#f1632d 58.3%,#f2682a 62.5%,#f16d2a 66.7%,#f0732a 70.8%,#ef782a 75.0%,#ee7d2b 79.2%,#ed832b 83.3%,#ec882b 87.5%,#eb8d2b 91.7%,#ea932b 95.8%,#e9982b 100.0%)"></i>
<i style="left:1428px;width:6.5px;background:linear-gradient(#e84443 0.0%,#e84443 29.2%,#e94840 33.3%,#ea4c3d 37.5%,#ec513a 41.7%,#ed5537 45.8%,#ee5a34 50.0%,#ef5e31 54.2%,#f1632e 58.3%,#f2672a 62.5%,#f16d2a 66.7%,#f0722a 70.8%,#ef772a 75.0%,#ee7d2b 79.2%,#ed822b 83.3%,#ec872b 87.5%,#eb8d2b 91.7%,#ea922b 95.8%,#e9982b 100.0%)"></i>
<i style="left:1434px;width:6.5px;background:linear-gradient(#e84443 0.0%,#e84443 29.2%,#e94841 33.3%,#ea4c3d 37.5%,#eb513a 41.7%,#ed5537 45.8%,#ee5934 50.0%,#ef5e31 54.2%,#f0622e 58.3%,#f2672b 62.5%,#f16c2a 66.7%,#f0712a 70.8%,#ef772a 75.0%,#ee7c2b 79.2%,#ed822b 83.3%,#ec872b 87.5%,#eb8c2b 91.7%,#ea922b 95.8%,#e9972b 100.0%)"></i>
<i style="left:1440px;width:6.5px;background:linear-gradient(#e84443 0.0%,#e84443 29.2%,#e94741 33.3%,#ea4c3e 37.5%,#eb503b 41.7%,#ed5537 45.8%,#ee5934 50.0%,#ef5e31 54.2%,#f0622e 58.3%,#f2672b 62.5%,#f16c2a 66.7%,#f0712a 70.8%,#ef762a 75.0%,#ee7c2b 79.2%,#ed812b 83.3%,#ec862b 87.5%,#eb8c2b 91.7%,#ea912b 95.8%,#e9962b 100.0%)"></i>
<i style="left:1446px;width:6.5px;background:linear-gradient(#e84443 0.0%,#e84443 29.2%,#e94741 33.3%,#ea4b3e 37.5%,#eb503b 41.7%,#ec5438 45.8%,#ee5935 50.0%,#ef5d32 54.2%,#f0622e 58.3%,#f1662b 62.5%,#f16b2a 66.7%,#f0702a 70.8%,#ef762a 75.0%,#ee7b2b 79.2%,#ed802b 83.3%,#ec862b 87.5%,#eb8b2b 91.7%,#ea902b 95.8%,#e9962b 100.0%)"></i>
<i style="left:1452px;width:6.5px;background:linear-gradient(#e84443 0.0%,#e84443 29.2%,#e94641 33.3%,#ea4b3e 37.5%,#eb4f3b 41.7%,#ec5438 45.8%,#ee5835 50.0%,#ef5d32 54.2%,#f0612f 58.3%,#f1662c 62.5%,#f26b2a 66.7%,#f0702a 70.8%,#ef752a 75.0%,#ee7b2b 79.2%,#ed802b 83.3%,#ec852b 87.5%,#eb8b2b 91.7%,#ea902b 95.8%,#e9952b 100.0%)"></i>
<i style="left:1458px;width:6.5px;background:linear-gradient(#e84443 0.0%,#e84443 29.2%,#e94642 33.3%,#ea4a3f 37.5%,#eb4f3b 41.7%,#ec5338 45.8%,#ee5835 50.0%,#ef5c32 54.2%,#f0612f 58.3%,#f1652c 62.5%,#f26a2a 66.7%,#f16f2a 70.8%,#f0752a 75.0%,#ef7a2b 79.2%,#ed7f2b 83.3%,#ec852b 87.5%,#eb8a2b 91.7%,#ea8f2b 95.8%,#e9952b 100.0%)"></i>
<i style="left:1464px;width:6.5px;background:linear-gradient(#e84443 0.0%,#e84443 29.2%,#e84642 33.3%,#ea4a3f 37.5%,#eb4e3c 41.7%,#ec5339 45.8%,#ed5736 50.0%,#ef5c32 54.2%,#f0602f 58.3%,#f1652c 62.5%,#f2692a 66.7%,#f16f2a 70.8%,#f0742a 75.0%,#ef792b 79.2%,#ee7f2b 83.3%,#ed842b 87.5%,#ec892b 91.7%,#ea8f2b 95.8%,#e9942b 100.0%)"></i>
<i style="left:1470px;width:6.5px;background:linear-gradient(#e84443 0.0%,#e84443 29.2%,#e84542 33.3%,#ea4a3f 37.5%,#eb4e3c 41.7%,#ec5339 45.8%,#ed5736 50.0%,#ef5b33 54.2%,#f06030 58.3%,#f1642d 62.5%,#f2692a 66.7%,#f16e2a 70.8%,#f0742a 75.0%,#ef792b 79.2%,#ee7e2b 83.3%,#ed832b 87.5%,#ec892b 91.7%,#eb8e2b 95.8%,#ea932b 100.0%)"></i>
<i style="left:1476px;width:6.5px;background:linear-gradient(#e84443 0.0%,#e84443 29.2%,#e84542 33.3%,#e9493f 37.5%,#eb4e3c 41.7%,#ec5239 45.8%,#ed5736 50.0%,#ee5b33 54.2%,#f05f30 58.3%,#f1642d 62.5%,#f2682a 66.7%,#f16e2a 70.8%,#f0732a 75.0%,#ef782a 79.2%,#ee7e2b 83.3%,#ed832b 87.5%,#ec882b 91.7%,#eb8e2b 95.8%,#ea932b 100.0%)"></i>
<i style="left:1482px;width:6.5px;background:linear-gradient(#e84443 0.0%,#e84443 33.3%,#e94940 37.5%,#eb4d3d 41.7%,#ec5239 45.8%,#ed5636 50.0%,#ee5b33 54.2%,#ef5f30 58.3%,#f1632d 62.5%,#f2682a 66.7%,#f16d2a 70.8%,#f0722a 75.0%,#ef782a 79.2%,#ee7d2b 83.3%,#ed822b 87.5%,#ec882b 91.7%,#eb8d2b 95.8%,#ea922b 100.0%)"></i>
<i style="left:1488px;width:6.5px;background:linear-gradient(#e84443 0.0%,#e84443 33.3%,#e94840 37.5%,#ea4d3d 41.7%,#ec513a 45.8%,#ed5637 50.0%,#ee5a34 54.2%,#ef5f31 58.3%,#f1632d 62.5%,#f2672a 66.7%,#f16d2a 70.8%,#f0722a 75.0%,#ef772a 79.2%,#ee7c2b 83.3%,#ed822b 87.5%,#ec872b 91.7%,#eb8c2b 95.8%,#ea922b 100.0%)"></i>
<i style="left:1494px;width:6.5px;background:linear-gradient(#e84443 0.0%,#e84443 33.3%,#e94840 37.5%,#ea4c3d 41.7%,#ec513a 45.8%,#ed5537 50.0%,#ee5a34 54.2%,#ef5e31 58.3%,#f0632e 62.5%,#f2672b 66.7%,#f16c2a 70.8%,#f0712a 75.0%,#ef772a 79.2%,#ee7c2b 83.3%,#ed812b 87.5%,#ec862b 91.7%,#eb8c2b 95.8%,#ea912b 100.0%)"></i>
<i style="left:1500px;width:6.5px;background:linear-gradient(#e84443 0.0%,#e84443 33.3%,#e94841 37.5%,#ea4c3d 41.7%,#eb503a 45.8%,#ed5537 50.0%,#ee5934 54.2%,#ef5e31 58.3%,#f0622e 62.5%,#f2672b 66.7%,#f16c2a 70.8%,#f0712a 75.0%,#ef762a 79.2%,#ee7b2b 83.3%,#ed812b 87.5%,#ec862b 91.7%,#eb8b2b 95.8%,#ea902b 100.0%)"></i>
<i style="left:1506px;width:6.5px;background:linear-gradient(#e84443 0.0%,#e84443 33.3%,#e94741 37.5%,#ea4c3e 41.7%,#eb503b 45.8%,#ed5438 50.0%,#ee5935 54.2%,#ef5d31 58.3%,#f0622e 62.5%,#f1662b 66.7%,#f16b2a 70.8%,#f0702a 75.0%,#ef762a 79.2%,#ee7b2b 83.3%,#ed802b 87.5%,#ec852b 91.7%,#eb8b2b 95.8%,#ea902b 100.0%)"></i>
<i style="left:1512px;width:6.5px;background:linear-gradient(#e84443 0.0%,#e84443 33.3%,#e94741 37.5%,#ea4b3e 41.7%,#eb503b 45.8%,#ec5438 50.0%,#ee5835 54.2%,#ef5d32 58.3%,#f0612f 62.5%,#f1662c 66.7%,#f26a2a 70.8%,#f1702a 75.0%,#ef752a 79.2%,#ee7a2b 83.3%,#ed7f2b 87.5%,#ec852b 91.7%,#eb8a2b 95.8%,#ea8f2b 100.0%)"></i>
<i style="left:1518px;width:6.5px;background:linear-gradient(#e84443 0.0%,#e84443 33.3%,#e94641 37.5%,#ea4b3e 41.7%,#eb4f3b 45.8%,#ec5438 50.0%,#ee5835 54.2%,#ef5c32 58.3%,#f0612f 62.5%,#f1652c 66.7%,#f26a2a 70.8%,#f16f2a 75.0%,#f0742a 79.2%,#ef7a2b 83.3%,#ee7f2b 87.5%,#ed842b 91.7%,#ec892b 95.8%,#ea8f2b 100.0%)"></i>
<i style="left:1524px;width:6.5px;background:linear-gradient(#e84443 0.0%,#e84443 33.3%,#e94642 37.5%,#ea4a3f 41.7%,#eb4f3c 45.8%,#ec5338 50.0%,#ed5835 54.2%,#ef5c32 58.3%,#f0602f 62.5%,#f1652c 66.7%,#f2692a 70.8%,#f16f2a 75.0%,#f0742a 79.2%,#ef792b 83.3%,#ee7e2b 87.5%,#ed842b 91.7%,#ec892b 95.8%,#eb8e2b 100.0%)"></i>
<i style="left:1530px;width:6.5px;background:linear-gradient(#e84443 0.0%,#e84443 33.3%,#e84642 37.5%,#ea4a3f 41.7%,#eb4e3c 45.8%,#ec5339 50.0%,#ed5736 54.2%,#ef5c33 58.3%,#f06030 62.5%,#f1642d 66.7%,#f2692a 70.8%,#f16e2a 75.0%,#f0732a 79.2%,#ef792a 83.3%,#ee7e2b 87.5%,#ed832b 91.7%,#ec882b 95.8%,#eb8d2b 100.0%)"></i>
<i style="left:1536px;width:6.5px;background:linear-gradient(#e84443 0.0%,#e84443 33.3%,#e84542 37.5%,#ea4a3f 41.7%,#eb4e3c 45.8%,#ec5239 50.0%,#ed5736 54.2%,#ee5b33 58.3%,#f05f30 62.5%,#f1642d 66.7%,#f2682a 70.8%,#f16e2a 75.0%,#f0732a 79.2%,#ef782a 83.3%,#ee7d2b 87.5%,#ed822b 91.7%,#ec882b 95.8%,#eb8d2b 100.0%)"></i>
<i style="left:1542px;width:6.5px;background:linear-gradient(#e84443 0.0%,#e84443 33.3%,#e84542 37.5%,#e9493f 41.7%,#eb4e3c 45.8%,#ec5239 50.0%,#ed5636 54.2%,#ee5b33 58.3%,#f05f30 62.5%,#f1632d 66.7%,#f2682a 70.8%,#f16d2a 75.0%,#f0722a 79.2%,#ef772a 83.3%,#ee7d2b 87.5%,#ed822b 91.7%,#ec872b 95.8%,#eb8c2b 100.0%)"></i>
<i style="left:1548px;width:6.5px;background:linear-gradient(#e84443 0.0%,#e84443 37.5%,#e94940 41.7%,#eb4d3d 45.8%,#ec513a 50.0%,#ed5637 54.2%,#ee5a34 58.3%,#ef5f31 62.5%,#f1632d 66.7%,#f2672a 70.8%,#f16c2a 75.0%,#f0722a 79.2%,#ef772a 83.3%,#ee7c2b 87.5%,#ed812b 91.7%,#ec872b 95.8%,#eb8c2b 100.0%)"></i>
<i style="left:1554px;width:6.5px;background:linear-gradient(#e84443 0.0%,#e84443 37.5%,#e94840 41.7%,#ea4d3d 45.8%,#ec513a 50.0%,#ed5537 54.2%,#ee5a34 58.3%,#ef5e31 62.5%,#f0632e 66.7%,#f2672b 70.8%,#f16c2a 75.0%,#f0712a 79.2%,#ef762a 83.3%,#ee7c2b 87.5%,#ed812b 91.7%,#ec862b 95.8%,#eb8b2b 100.0%)"></i>
<i style="left:1560px;width:6.5px;background:linear-gradient(#e84443 0.0%,#e84443 37.5%,#e94840 41.7%,#ea4c3d 45.8%,#ec513a 50.0%,#ed5537 54.2%,#ee5934 58.3%,#ef5e31 62.5%,#f0622e 66.7%,#f2662b 70.8%,#f16b2a 75.0%,#f0712a 79.2%,#ef762a 83.3%,#ee7b2b 87.5%,#ed802b 91.7%,#ec852b 95.8%,#eb8b2b 100.0%)"></i>
<i style="left:1566px;width:6.5px;background:linear-gradient(#e84443 0.0%,#e84443 37.5%,#e94841 41.7%,#ea4c3e 45.8%,#eb503b 50.0%,#ed5537 54.2%,#ee5934 58.3%,#ef5d31 62.5%,#f0622e 66.7%,#f1662b 70.8%,#f16b2a 75.0%,#f0702a 79.2%,#ef752a 83.3%,#ee7a2b 87.5%,#ed802b 91.7%,#ec852b 95.8%,#eb8a2b 100.0%)"></i>
<i style="left:1572px;width:6.5px;background:linear-gradient(#e84443 0.0%,#e84443 37.5%,#e94741 41.7%,#ea4b3e 45.8%,#eb503b 50.0%,#ec5438 54.2%,#ee5835 58.3%,#ef5d32 62.5%,#f0612f 66.7%,#f1662c 70.8%,#f26a2a 75.0%,#f16f2a 79.2%,#f0752a 83.3%,#ef7a2b 87.5%,#ee7f2b 91.7%,#ed842b 95.8%,#ec892b 100.0%)"></i>
<i style="left:1578px;width:6.5px;background:linear-gradient(#e84443 0.0%,#e84443 37.5%,#e94741 41.7%,#ea4b3e 45.8%,#eb4f3b 50.0%,#ec5438 54.2%,#ee5835 58.3%,#ef5c32 62.5%,#f0612f 66.7%,#f1652c 70.8%,#f26a2a 75.0%,#f16f2a 79.2%,#f0742a 83.3%,#ef792b 87.5%,#ee7e2b 91.7%,#ed842b 95.8%,#ec892b 100.0%)"></i>
<i style="left:1584px;width:6.5px;background:linear-gradient(#e84443 0.0%,#e84443 37.5%,#e94641 41.7%,#ea4b3e 45.8%,#eb4f3b 50.0%,#ec5338 54.2%,#ed5835 58.3%,#ef5c32 62.5%,#f0602f 66.7%,#f1652c 70.8%,#f2692a 75.0%,#f16e2a 79.2%,#f0732a 83.3%,#ef792a 87.5%,#ee7e2b 91.7%,#ed832b 95.8%,#ec882b 100.0%)"></i>
<i style="left:1590px;width:6.5px;background:linear-gradient(#e84443 0.0%,#e84443 37.5%,#e94642 41.7%,#ea4a3f 45.8%,#eb4f3c 50.0%,#ec5339 54.2%,#ed5736 58.3%,#ef5c33 62.5%,#f06030 66.7%,#f1642d 70.8%,#f2692a 75.0%,#f16e2a 79.2%,#f0732a 83.3%,#ef782a 87.5%,#ee7d2b 91.7%,#ed822b 95.8%,#ec882b 100.0%)"></i>
<i style="left:1596px;width:6.5px;background:linear-gradient(#e84443 0.0%,#e84443 37.5%,#e84542 41.7%,#ea4a3f 45.8%,#eb4e3c 50.0%,#ec5239 54.2%,#ed5736 58.3%,#ee5b33 62.5%,#f05f30 66.7%,#f1642d 70.8%,#f2682a 75.0%,#f16d2a 79.2%,#f0722a 83.3%,#ef782a 87.5%,#ee7d2b 91.7%,#ed822b 95.8%,#ec872b 100.0%)"></i>
<i style="left:1602px;width:3.6px;background:linear-gradient(#e84443 0.0%,#e84443 37.5%,#e84542 41.7%,#ea493f 45.8%,#eb4e3c 50.0%,#ec5239 54.2%,#ed5636 58.3%,#ee5b33 62.5%,#f05f30 66.7%,#f1632d 70.8%,#f2682a 75.0%,#f16d2a 79.2%,#f0722a 83.3%,#ef772a 87.5%,#ee7c2b 91.7%,#ed812b 95.8%,#ec872b 100.0%)"></i>
</div>

<b class="gl" style="left:374px;top:89px;width:1px;height:347px"></b>
<b class="gl" style="left:723px;top:89px;width:1px;height:347px"></b>
<b class="gl" style="left:1071px;top:89px;width:1px;height:347px"></b>
<b class="gl" style="left:1420px;top:89px;width:1px;height:347px"></b>
<b class="gl" style="left:26px;top:157px;width:1605px;height:1px"></b>
<b class="gl" style="left:26px;top:227px;width:1605px;height:1px"></b>
<b class="gl" style="left:26px;top:297px;width:1605px;height:1px"></b>
<b class="gl" style="left:26px;top:367px;width:1605px;height:1px"></b>
<!-- bubbles -->
<svg class="abs" style="left:354px;top:347px" width="40" height="40" viewBox="0 0 40 40"><circle cx="20.4" cy="20.4" r="13.2" fill="#fff" stroke="#2f8d7c" stroke-width="2.3"/><text x="20.4" y="24" text-anchor="middle" font-family="Liberation Sans" font-weight="bold" font-size="10.5" fill="#333" stroke="#fff" stroke-width="1.2" paint-order="stroke">62</text></svg>
<svg class="abs" style="left:703px;top:347px" width="40" height="40" viewBox="0 0 40 40"><circle cx="20.1" cy="19.9" r="12.4" fill="#fff"/><text x="20.1" y="22.3" text-anchor="middle" font-family="Liberation Sans" font-weight="bold" font-size="9" fill="#555">1</text></svg>
<div id="tiparrow"></div>
<div id="tip">Puntuación de riesgo: 1</div>

<div class="abs" style="left:1631px;top:5px;width:1px;height:489px;background:#eceef1"></div>
<!-- legend -->
<div class="lg" style="left:26px;width:41.5px;--c:#2ba77a">Low</div>
<div class="lg" style="left:74.5px;width:59px;--c:#eab020">Medium</div>
<div class="lg" style="left:140px;width:42.5px;--c:#f27318">High</div>
<div class="lg" style="left:190px;width:66px;--c:#e8413f">Very high</div>
<div class="lg" style="left:262.5px;width:54.5px;--c:#e8413f">Critical</div>

<!-- table -->
<div id="tbl">
<div id="th">
<div class="h" style="left:6.5px">ID</div>
<svg class="abs" style="left:22px;top:10.9px" width="11" height="12" viewBox="0 0 11 12"><path d="M5.5 11V1.6M1.6 5.3L5.5 1.4L9.4 5.3" fill="none" stroke="#111" stroke-width="1.7"/></svg>
<div class="h" style="left:91px">Riesgo</div>
<div class="h" style="left:605.5px">Usuarios responsables</div>
<div class="h" style="left:929.5px">Riesgo Inherente</div>
<div class="h" style="left:1105px">Riesgo residual</div>
<div class="h" style="left:1266.5px">Estrategia</div>
</div>
<div class="r" style="top:34px;height:32px"><div class="c" style="left:10px">1</div><div class="c" style="left:94px">Regulatory Non-Compliance</div><div class="c" style="left:609.5px">-</div><div class="bd" style="left:932px">1</div><div class="bd" style="left:1108.5px">1</div><div class="c" style="left:1270px">Riesgo mitigado</div></div>
<div class="r" style="top:66px;height:32px"><div class="c" style="left:10px">2</div><div class="c" style="left:94px">Financial Fraud Scandal</div><div class="c" style="left:609.5px">-</div><div class="bd" style="left:932px">1</div><div class="bd" style="left:1108.5px">1</div><div class="c" style="left:1270px">Estrategia pendiente</div></div>
<div class="r" style="top:98px;height:32px"><div class="c" style="left:10px">3</div><div class="c" style="left:94px">Money Laundering Accusations</div><div class="c" style="left:609.5px">-</div><div class="bd" style="left:932px">1</div><div class="bd" style="left:1108.5px">1</div><div class="c" style="left:1270px">Estrategia pendiente</div></div>
<div class="r" style="top:130px;height:32px"><div class="c" style="left:10px">4</div><div class="c" style="left:94px">Market Manipulation</div><div class="c" style="left:609.5px">-</div><div class="bd" style="left:932px">1</div><div class="bd" style="left:1108.5px">1</div><div class="c" style="left:1270px">Estrategia pendiente</div></div>
<div class="r" style="top:162px;height:32px"><div class="c" style="left:10px">5</div><div class="c" style="left:94px">Mis-selling Financial Products</div><div class="c" style="left:609.5px">-</div><div class="bd" style="left:932px">1</div><div class="bd" style="left:1108.5px">1</div><div class="c" style="left:1270px">Estrategia pendiente</div></div>
<div class="r" style="top:194px;height:32px"><div class="c" style="left:10px">6</div><div class="c" style="left:94px">Poor Financial Performance</div><div class="c" style="left:609.5px">-</div><div class="bd" style="left:932px">1</div><div class="bd" style="left:1108.5px">1</div><div class="c" style="left:1270px">Estrategia pendiente</div></div>
<div class="r" style="top:226px;height:33px"><div class="c" style="left:10px">7</div><div class="c" style="left:94px">Ethical Violations</div><div class="c" style="left:609.5px">-</div><div class="bd" style="left:932px">1</div><div class="bd" style="left:1108.5px">1</div><div class="c" style="left:1270px">Estrategia pendiente</div></div>
<div class="r" style="top:259px;height:32px"><div class="c" style="left:10px">8</div><div class="c" style="left:94px">System Outage</div><div class="c" style="left:609.5px">-</div><div class="bd" style="left:932px">1</div><div class="bd" style="left:1108.5px">1</div><div class="c" style="left:1270px">Estrategia pendiente</div></div>
<div class="r" style="top:291px;height:32px"><div class="c" style="left:10px">9</div><div class="c" style="left:94px">Insider Threats</div><div class="c" style="left:609.5px">-</div><div class="bd" style="left:932px">1</div><div class="bd" style="left:1108.5px">1</div><div class="c" style="left:1270px">Estrategia pendiente</div></div>
<div class="r" style="top:323px;height:32px"><div class="c" style="left:10px">10</div><div class="c" style="left:94px">Poor Customer Experience with Online Services</div><div class="c" style="left:609.5px">-</div><div class="bd" style="left:932px">1</div><div class="bd" style="left:1108.5px">1</div><div class="c" style="left:1270px">Estrategia pendiente</div></div>
<div class="vd" style="left:83px"></div>
<div class="vd" style="left:598px"></div>
<div class="vd" style="left:922px"></div>
<div class="vd" style="left:1098px"></div>
<div class="vd" style="left:1259px"></div>
<div id="act">
<div style="position:absolute;left:0;top:0;width:100%;height:34px;background:#f8f9fb;border-bottom:1px solid #e7e9ed"></div>
<svg class="abs" style="left:52.2px;top:9.1px" width="34" height="15" viewBox="0 0 34 15"><rect x="1.7" y="1.6" width="10.8" height="10.4" fill="none" stroke="#444" stroke-width="1.3"/><path d="M7.1 1.6V12" stroke="#444" stroke-width="1.3"/><path d="M21 4.6L26.6 9.8L32.2 4.6" fill="none" stroke="#333" stroke-width="1.3"/></svg>
<div class="r" style="top:34px;height:32px;background:#fff"><div class="btn" style="left:8.2px;width:60.3px">Resumen</div><div class="btn" style="left:72.6px;width:26px"><svg class="dots" viewBox="0 0 14 3"><path d="M0 0h2.9v2.9H0zM5.25 0h2.9v2.9h-2.9zM10.5 0h2.9v2.9h-2.9z" fill="#333"/></svg></div></div>
<div class="r" style="top:66px;height:32px;background:#fff"><div class="btn" style="left:8.2px;width:60.3px">Resumen</div><div class="btn" style="left:72.6px;width:26px"><svg class="dots" viewBox="0 0 14 3"><path d="M0 0h2.9v2.9H0zM5.25 0h2.9v2.9h-2.9zM10.5 0h2.9v2.9h-2.9z" fill="#333"/></svg></div></div>
<div class="r" style="top:98px;height:32px;background:#fff"><div class="btn" style="left:8.2px;width:60.3px">Resumen</div><div class="btn" style="left:72.6px;width:26px"><svg class="dots" viewBox="0 0 14 3"><path d="M0 0h2.9v2.9H0zM5.25 0h2.9v2.9h-2.9zM10.5 0h2.9v2.9h-2.9z" fill="#333"/></svg></div></div>
<div class="r" style="top:130px;height:32px;background:#fff"><div class="btn" style="left:8.2px;width:60.3px">Resumen</div><div class="btn" style="left:72.6px;width:26px"><svg class="dots" viewBox="0 0 14 3"><path d="M0 0h2.9v2.9H0zM5.25 0h2.9v2.9h-2.9zM10.5 0h2.9v2.9h-2.9z" fill="#333"/></svg></div></div>
<div class="r" style="top:162px;height:32px;background:#fff"><div class="btn" style="left:8.2px;width:60.3px">Resumen</div><div class="btn" style="left:72.6px;width:26px"><svg class="dots" viewBox="0 0 14 3"><path d="M0 0h2.9v2.9H0zM5.25 0h2.9v2.9h-2.9zM10.5 0h2.9v2.9h-2.9z" fill="#333"/></svg></div></div>
<div class="r" style="top:194px;height:32px;background:#fff"><div class="btn" style="left:8.2px;width:60.3px">Resumen</div><div class="btn" style="left:72.6px;width:26px"><svg class="dots" viewBox="0 0 14 3"><path d="M0 0h2.9v2.9H0zM5.25 0h2.9v2.9h-2.9zM10.5 0h2.9v2.9h-2.9z" fill="#333"/></svg></div></div>
<div class="r" style="top:226px;height:33px;background:#fff"><div class="btn" style="left:8.2px;width:60.3px">Resumen</div><div class="btn" style="left:72.6px;width:26px"><svg class="dots" viewBox="0 0 14 3"><path d="M0 0h2.9v2.9H0zM5.25 0h2.9v2.9h-2.9zM10.5 0h2.9v2.9h-2.9z" fill="#333"/></svg></div></div>
<div class="r" style="top:259px;height:32px;background:#fff"><div class="btn" style="left:8.2px;width:60.3px">Resumen</div><div class="btn" style="left:72.6px;width:26px"><svg class="dots" viewBox="0 0 14 3"><path d="M0 0h2.9v2.9H0zM5.25 0h2.9v2.9h-2.9zM10.5 0h2.9v2.9h-2.9z" fill="#333"/></svg></div></div>
<div class="r" style="top:291px;height:32px;background:#fff"><div class="btn" style="left:8.2px;width:60.3px">Resumen</div><div class="btn" style="left:72.6px;width:26px"><svg class="dots" viewBox="0 0 14 3"><path d="M0 0h2.9v2.9H0zM5.25 0h2.9v2.9h-2.9zM10.5 0h2.9v2.9h-2.9z" fill="#333"/></svg></div></div>
<div class="r" style="top:323px;height:32px;background:#fff"><div class="btn" style="left:8.2px;width:60.3px">Resumen</div><div class="btn" style="left:72.6px;width:26px"><svg class="dots" viewBox="0 0 14 3"><path d="M0 0h2.9v2.9H0zM5.25 0h2.9v2.9h-2.9zM10.5 0h2.9v2.9h-2.9z" fill="#333"/></svg></div></div>
</div>
<div id="foot">
<div class="t">Mostrando 1 a 10 de 63 resultados</div>
<svg class="abs" style="left:1408px;top:10px" width="14" height="14" viewBox="0 0 14 14"><path d="M7 1.5L2 7L7 12.5M12 1.5L7 7L12 12.5" fill="none" stroke="#c4c8ce" stroke-width="1.2"/></svg>
<svg class="abs" style="left:1432px;top:10px" width="10" height="14" viewBox="0 0 10 14"><path d="M7.5 1.5L2.5 7L7.5 12.5" fill="none" stroke="#c4c8ce" stroke-width="1.2"/></svg>
<div class="pg" style="left:1452px;width:18.5px;background:#1a50c8;color:#fff;border-radius:2px">1</div>
<div class="pg" style="left:1478px;width:18.5px">2</div>
<div class="pg" style="left:1505px;width:18.5px">3</div>
<svg class="abs" style="left:1535px;top:10px" width="10" height="14" viewBox="0 0 10 14"><path d="M2.5 1.5L7.5 7L2.5 12.5" fill="none" stroke="#222" stroke-width="1.3"/></svg>
<svg class="abs" style="left:1556px;top:10px" width="14" height="14" viewBox="0 0 14 14"><path d="M2 1.5L7 7L2 12.5M7 1.5L12 7L7 12.5" fill="none" stroke="#444" stroke-width="1.2"/></svg>
</div>
</div>
</body>
</html>
